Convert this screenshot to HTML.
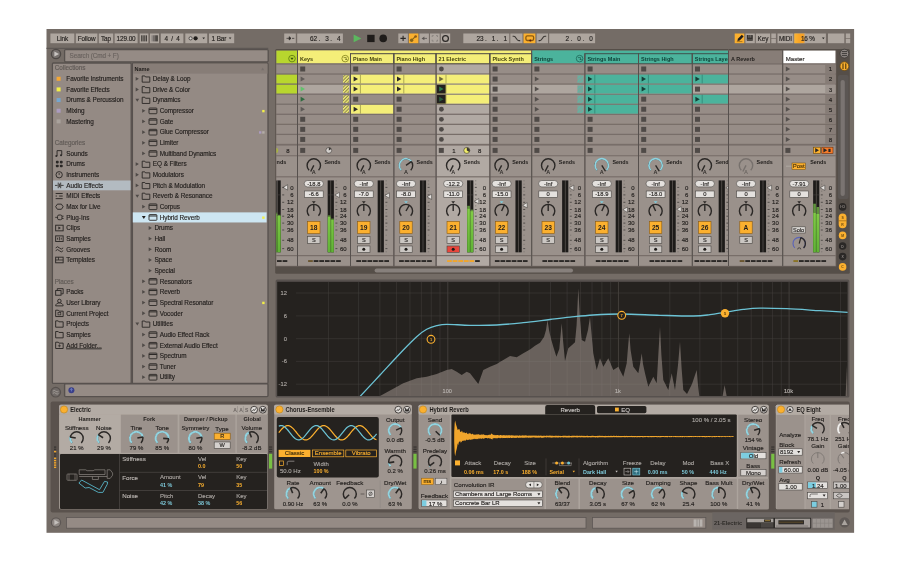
<!DOCTYPE html><html><head><meta charset="utf-8"><title>Live</title><style>html,body{margin:0;padding:0;background:#fff;overflow:hidden}svg{display:block;will-change:transform}text{font-family:'Liberation Sans', sans-serif;white-space:pre}</style></head><body><svg width="900" height="562" viewBox="0 0 900 562"><rect x="0" y="0" width="900" height="562" fill="#ffffff" />
<rect x="46.5" y="29" width="807.6" height="503.8" fill="#746c66" />
<rect x="50.4" y="33.5" width="23.9" height="9.7" fill="#aea69f" />
<text x="62.35" y="40.62" font-size="6.4" fill="#211e1c" text-anchor="middle" letter-spacing="-0.1" stroke="#211e1c" stroke-width="0.14" >Link</text>
<rect x="75.8" y="33.5" width="21.6" height="9.7" fill="#aea69f" />
<text x="86.6" y="40.62" font-size="6.4" fill="#211e1c" text-anchor="middle" letter-spacing="-0.1" stroke="#211e1c" stroke-width="0.14" >Follow</text>
<rect x="98.8" y="33.5" width="14.4" height="9.7" fill="#aea69f" />
<text x="106" y="40.62" font-size="6.4" fill="#211e1c" text-anchor="middle" letter-spacing="-0.1" stroke="#211e1c" stroke-width="0.14" >Tap</text>
<rect x="114.6" y="33.5" width="23" height="9.7" fill="#aea69f" />
<text x="126.1" y="40.62" font-size="6.4" fill="#211e1c" text-anchor="middle" letter-spacing="-0.1" stroke="#211e1c" stroke-width="0.14" >129.00</text>
<rect x="139.7" y="33.5" width="8.7" height="9.7" fill="#aea69f" />
<rect x="141.2" y="35.3" width="1.3" height="6.1" fill="#3b3734" />
<rect x="143.4" y="35.3" width="1.3" height="6.1" fill="#3b3734" />
<rect x="145.6" y="35.3" width="1.3" height="6.1" fill="#3b3734" />
<rect x="150" y="33.5" width="9" height="9.7" fill="#aea69f" />
<rect x="151.4" y="35.3" width="1.6" height="6.1" fill="#8d8783" />
<rect x="153" y="35.3" width="1.6" height="6.1" fill="#726c69" />
<rect x="154.6" y="35.3" width="1.6" height="6.1" fill="#595451" />
<rect x="156.2" y="35.3" width="1.6" height="6.1" fill="#3b3734" />
<rect x="160.8" y="33.5" width="22.6" height="9.7" fill="#aea69f" />
<text x="172.1" y="40.62" font-size="6.4" fill="#211e1c" text-anchor="middle" letter-spacing="-0.1" stroke="#211e1c" stroke-width="0.14" >4  /  4</text>
<rect x="185.3" y="33.5" width="21.9" height="9.7" fill="#aea69f" />
<circle cx="190.6" cy="38.35" r="1.6" fill="#d4d0cd" stroke="#2b2826" stroke-width="0.7" />
<circle cx="195.6" cy="38.35" r="2.1" fill="#1f1c1a" />
<path d="M202.4 37.5h2.6l-1.3 1.8z" fill="#2b2826" />
<rect x="209" y="33.5" width="25.2" height="9.7" fill="#aea69f" />
<text x="211.5" y="40.62" font-size="6.4" fill="#211e1c" letter-spacing="-0.1" stroke="#211e1c" stroke-width="0.14" >1 Bar</text>
<path d="M228.8 37.5h2.6l-1.3 1.8z" fill="#2b2826" />
<rect x="284.2" y="33.5" width="11.6" height="9.7" fill="#aea69f" />
<path d="M286.5 38.35h4.2M289.2 36.7l1.8 1.65l-1.8 1.65z" fill="#2b2826" stroke="#2b2826" stroke-width="0.7" />
<line x1="292" y1="38.35" x2="294.3" y2="38.35" stroke="#2b2826" stroke-width="0.7" />
<rect x="297.2" y="33.5" width="45.7" height="9.7" fill="#aea69f" />
<text x="340.5" y="40.62" font-size="6.4" fill="#211e1c" text-anchor="end" letter-spacing="-0.1" stroke="#211e1c" stroke-width="0.14" >62 .   3 .   4</text>
<path d="M353.6 34.6L361.4 38.4L353.6 42.3z" fill="#5cb85f" />
<rect x="367.2" y="34.8" width="7.4" height="7.3" fill="#1f1c1a" />
<circle cx="383.2" cy="38.4" r="3.8" fill="#1f1c1a" />
<rect x="398.3" y="33.5" width="9.6" height="9.7" fill="#aea69f" />
<path d="M400.4 38.4h5.4M403.1 35.7v5.4" fill="none" stroke="#2b2826" stroke-width="1.1" />
<rect x="408.8" y="33.5" width="9.6" height="9.7" fill="#fbb02f" />
<path d="M411.4 40.4l4.2-4" fill="none" stroke="#86641a" stroke-width="1.2" />
<circle cx="411.6" cy="40.3" r="1.7" fill="#86641a" />
<circle cx="415.6" cy="36.5" r="1.3" fill="#86641a" />
<circle cx="415.8" cy="36.3" r="0.6" fill="#a8401a" />
<rect x="419.4" y="33.5" width="9.5" height="9.7" fill="#aea69f" />
<path d="M423.6 38.4h3.4" fill="none" stroke="#5b5653" stroke-width="0.8" />
<path d="M421.6 38.4l2.8-1.9v3.8z" fill="#5b5653" />
<rect x="430" y="33.5" width="9.7" height="9.7" fill="#aea69f" />
<path d="M432.2 37v-1.4h1.5M436 35.6h1.5v1.4M437.5 39.7v1.4h-1.5M433.7 41.1h-1.5v-1.4" fill="none" stroke="#87817d" stroke-width="0.9" />
<rect x="440.8" y="33.5" width="9.4" height="9.7" fill="#aea69f" />
<circle cx="445.5" cy="38.4" r="2.9" fill="none" stroke="#2b2826" stroke-width="1.25" />
<rect x="463.3" y="33.5" width="46" height="9.7" fill="#aea69f" />
<text x="507" y="40.62" font-size="6.4" fill="#211e1c" text-anchor="end" letter-spacing="-0.1" stroke="#211e1c" stroke-width="0.14" >23 .   1 .   1</text>
<rect x="510.3" y="33.5" width="12.2" height="9.7" fill="#aea69f" />
<path d="M512.6 36.3h1.2c2.4 0 2.6 4.3 5 4.3h1.4" fill="none" stroke="#3a3633" stroke-width="1.1" />
<rect x="523.5" y="33.5" width="11.9" height="9.7" fill="#fbb02f" />
<rect x="525.9" y="35.9" width="7.7" height="4.6" fill="none" rx="1.4" stroke="#8a5a10" stroke-width="1.3" />
<circle cx="530.3" cy="40.6" r="1" fill="#5a1a0a" />
<rect x="536.6" y="33.5" width="11.4" height="9.7" fill="#aea69f" />
<path d="M538.6 40.6h1.2c2.4 0 2.6-4.3 5-4.3h1.4" fill="none" stroke="#3a3633" stroke-width="1.1" />
<rect x="549.2" y="33.5" width="45.9" height="9.7" fill="#aea69f" />
<text x="592.6" y="40.62" font-size="6.4" fill="#211e1c" text-anchor="end" letter-spacing="-0.1" stroke="#211e1c" stroke-width="0.14" >2 .   0 .   0</text>
<rect x="734.7" y="33.5" width="9.6" height="9.7" fill="#fbb02f" />
<path d="M737.4 40.9l0.5-2.2l3.9-3.9l1.8 1.8l-3.9 3.9z" fill="#1f1c1a" />
<line x1="736.8" y1="41.6" x2="742.4" y2="41.6" stroke="#8a5a10" stroke-width="0.7" />
<rect x="745.4" y="33.5" width="9.4" height="9.7" fill="#aea69f" />
<rect x="746.8" y="35" width="6" height="5.8" fill="#34302d" rx="0.6" />
<rect x="748.6" y="35" width="0.7" height="2.7" fill="#9a948f" />
<rect x="750.5" y="35" width="0.7" height="2.7" fill="#9a948f" />
<rect x="746.8" y="39" width="6" height="0.5" fill="#6f6965" />
<rect x="755.8" y="33.5" width="14.3" height="9.7" fill="#aea69f" />
<text x="762.95" y="40.62" font-size="6.4" fill="#211e1c" text-anchor="middle" letter-spacing="-0.1" stroke="#211e1c" stroke-width="0.14" >Key</text>
<rect x="771.3" y="33.5" width="4.6" height="4.5" fill="#aea69f" />
<rect x="771.3" y="38.7" width="4.6" height="4.5" fill="#aea69f" />
<rect x="777.5" y="33.5" width="15.9" height="9.7" fill="#aea69f" />
<text x="785.45" y="40.62" font-size="6.4" fill="#211e1c" text-anchor="middle" letter-spacing="-0.1" stroke="#211e1c" stroke-width="0.14" >MIDI</text>
<rect x="794.3" y="33.5" width="31.6" height="9.7" fill="#aea69f" />
<defs><linearGradient id="cpu" x1="0" x2="1" y1="0" y2="0"><stop offset="0" stop-color="#fbb533"/><stop offset="0.45" stop-color="#f9a526"/><stop offset="0.8" stop-color="#f7a024"/><stop offset="1" stop-color="#aea69f"/></linearGradient></defs>
<rect x="794.3" y="33.5" width="11.2" height="9.7" fill="url(#cpu)" />
<text x="801" y="40.62" font-size="6.4" fill="#211e1c" letter-spacing="-0.2" stroke="#211e1c" stroke-width="0.14" >16 %</text>
<path d="M822.0 37.5h2.6l-1.3 1.8z" fill="#2b2826" />
<rect x="828" y="33.5" width="16.3" height="9.7" fill="#aea69f" />
<rect x="845.8" y="33.5" width="4.4" height="4.5" fill="#aea69f" />
<rect x="845.8" y="38.7" width="4.4" height="4.5" fill="#aea69f" />
<line x1="46.5" y1="48.4" x2="268.2" y2="48.4" stroke="#5d5754" stroke-width="1.4" />
<circle cx="56" cy="54" r="4.6" fill="#77716e" stroke="#4d4845" stroke-width="1.3" />
<path d="M54.4 51.4L59.0 54.0L54.4 56.6z" fill="#c9c5c2" />
<rect x="64.6" y="49.6" width="203.6" height="12.2" fill="#958b85" rx="1" stroke="#57514e" stroke-width="1.3" />
<text x="69.6" y="58.37" font-size="6.4" fill="#6a635f" letter-spacing="-0.12" stroke="#6a635f" stroke-width="0.14" >Search (Cmd + F)</text>
<rect x="52.4" y="63" width="78.8" height="320.4" fill="#948a84" rx="1" stroke="#57514e" stroke-width="1.3" />
<rect x="132.4" y="63" width="135.6" height="320.4" fill="#948a84" rx="1" stroke="#57514e" stroke-width="1.3" />
<rect x="133" y="63.6" width="134.4" height="10" fill="#877d77" />
<text x="134.4" y="70.8" font-size="6.2" fill="#211e1c" font-weight="700" transform="translate(134.4 0) scale(0.9 1) translate(-134.4 0)" >Name</text>
<path d="M261.2 70.2l1.5-2.6l1.5 2.6z" fill="#77706c" />
<text x="54.8" y="70.47" font-size="6.4" fill="#5f5955" letter-spacing="-0.06" stroke="#5f5955" stroke-width="0.14" >Collections</text>
<rect x="56.6" y="76.76" width="4" height="4" fill="#f6a833" />
<text x="66.3" y="81.13" font-size="6.4" fill="#211e1c" letter-spacing="-0.06" stroke="#211e1c" stroke-width="0.14" >Favorite Instruments</text>
<rect x="56.6" y="87.41" width="4" height="4" fill="#f2ee48" />
<text x="66.3" y="91.78" font-size="6.4" fill="#211e1c" letter-spacing="-0.06" stroke="#211e1c" stroke-width="0.14" >Favorite Effects</text>
<rect x="56.6" y="98.06" width="4" height="4" fill="#74a6cf" />
<text x="66.3" y="102.44" font-size="6.4" fill="#211e1c" letter-spacing="-0.06" stroke="#211e1c" stroke-width="0.14" >Drums &amp; Percussion</text>
<rect x="56.6" y="108.72" width="4" height="4" fill="#ab9bc0" />
<text x="66.3" y="113.09" font-size="6.4" fill="#211e1c" letter-spacing="-0.06" stroke="#211e1c" stroke-width="0.14" >Mixing</text>
<rect x="56.6" y="119.38" width="4" height="4" fill="#a9a29c" />
<text x="66.3" y="123.75" font-size="6.4" fill="#211e1c" letter-spacing="-0.06" stroke="#211e1c" stroke-width="0.14" >Mastering</text>
<text x="54.8" y="145.06" font-size="6.4" fill="#5f5955" letter-spacing="-0.06" stroke="#5f5955" stroke-width="0.14" >Categories</text>
<text x="66.3" y="155.71" font-size="6.4" fill="#211e1c" letter-spacing="-0.06" stroke="#211e1c" stroke-width="0.14" >Sounds</text>
<g transform="translate(59.4 153.44) scale(1.17) translate(-59.4 -153.44)">
<path d="M57.4 155.64v-4.6h4v3.8" fill="none" stroke="#2b2826" stroke-width="0.8" />
<circle cx="56.8" cy="155.64" r="0.9" fill="#2b2826" />
<circle cx="60.8" cy="154.94" r="0.9" fill="#2b2826" />
</g>
<text x="66.3" y="166.37" font-size="6.4" fill="#211e1c" letter-spacing="-0.06" stroke="#211e1c" stroke-width="0.14" >Drums</text>
<g transform="translate(59.4 164.09) scale(1.17) translate(-59.4 -164.09)">
<rect x="56.4" y="161.29" width="2.4" height="2.2" fill="#2b2826" rx="0.7" />
<rect x="56.4" y="164.69" width="2.4" height="2.2" fill="#2b2826" rx="0.7" />
<rect x="59.8" y="161.29" width="2.4" height="2.2" fill="#2b2826" rx="0.7" />
<rect x="59.8" y="164.69" width="2.4" height="2.2" fill="#2b2826" rx="0.7" />
</g>
<text x="66.3" y="177.02" font-size="6.4" fill="#211e1c" letter-spacing="-0.06" stroke="#211e1c" stroke-width="0.14" >Instruments</text>
<g transform="translate(59.4 174.75) scale(1.17) translate(-59.4 -174.75)">
<circle cx="59.2" cy="174.75" r="2.7" fill="none" stroke="#2b2826" stroke-width="0.8" />
<path d="M59.2 173.15v1.8" fill="none" stroke="#2b2826" stroke-width="0.7" />
</g>
<rect x="53" y="180.5" width="77.6" height="9.8" fill="#b3bbc1" />
<text x="66.3" y="187.68" font-size="6.4" fill="#211e1c" letter-spacing="-0.06" stroke="#211e1c" stroke-width="0.14" >Audio Effects</text>
<g transform="translate(59.4 185.41) scale(1.17) translate(-59.4 -185.41)">
<path d="M55.6 185.41h2.2M60.8 185.41h2.2M58.4 183v4.8M59.5 183.91v3M60.5 183v4.8" fill="none" stroke="#2b2826" stroke-width="0.7" />
</g>
<text x="66.3" y="198.33" font-size="6.4" fill="#211e1c" letter-spacing="-0.06" stroke="#211e1c" stroke-width="0.14" >MIDI Effects</text>
<g transform="translate(59.4 196.06) scale(1.17) translate(-59.4 -196.06)">
<path d="M56.2 193.86h6M56.2 196.06h6M56.2 198.26h6" fill="none" stroke="#2b2826" stroke-width="0.8" />
<rect x="57.2" y="194.66" width="2" height="2.2" fill="#948a84" />
</g>
<text x="66.3" y="208.99" font-size="6.4" fill="#211e1c" letter-spacing="-0.06" stroke="#211e1c" stroke-width="0.14" >Max for Live</text>
<g transform="translate(59.4 206.71) scale(1.17) translate(-59.4 -206.71)">
<path d="M56.2 206.71l1.5-2.2h3.4l1.5 2.2l-1.5 2.2h-3.4z" fill="none" stroke="#2b2826" stroke-width="0.8" />
</g>
<text x="66.3" y="219.64" font-size="6.4" fill="#211e1c" letter-spacing="-0.06" stroke="#211e1c" stroke-width="0.14" >Plug-Ins</text>
<g transform="translate(59.4 217.37) scale(1.17) translate(-59.4 -217.37)">
<rect x="57.8" y="215.37" width="3.8" height="4" fill="none" rx="1.2" stroke="#2b2826" stroke-width="0.8" />
<path d="M55.8 217.37h2M61.6 216.37h1.4M61.6 218.37h1.4" fill="none" stroke="#2b2826" stroke-width="0.7" />
</g>
<text x="66.3" y="230.3" font-size="6.4" fill="#211e1c" letter-spacing="-0.06" stroke="#211e1c" stroke-width="0.14" >Clips</text>
<g transform="translate(59.4 228.02) scale(1.17) translate(-59.4 -228.02)">
<rect x="56.2" y="225.62" width="6.4" height="4.8" fill="none" stroke="#2b2826" stroke-width="0.8" />
<path d="M58.5 226.72l2.2 1.3l-2.2 1.3z" fill="#2b2826" />
</g>
<text x="66.3" y="240.95" font-size="6.4" fill="#211e1c" letter-spacing="-0.06" stroke="#211e1c" stroke-width="0.14" >Samples</text>
<g transform="translate(59.4 238.68) scale(1.17) translate(-59.4 -238.68)">
<rect x="56.2" y="236.28" width="6.4" height="4.8" fill="none" stroke="#2b2826" stroke-width="0.8" />
<path d="M57.8 237.88v1.6M59.4 237.18v3M61 237.88v1.6" fill="none" stroke="#2b2826" stroke-width="0.7" />
</g>
<text x="66.3" y="251.61" font-size="6.4" fill="#211e1c" letter-spacing="-0.06" stroke="#211e1c" stroke-width="0.14" >Grooves</text>
<g transform="translate(59.4 249.33) scale(1.17) translate(-59.4 -249.33)">
<path d="M56.2 248.13q1.6-2 3.2 0t3.2 0" fill="none" stroke="#2b2826" stroke-width="0.8" />
<path d="M56.2 250.53q1.6-2 3.2 0t3.2 0" fill="none" stroke="#2b2826" stroke-width="0.8" />
</g>
<text x="66.3" y="262.26" font-size="6.4" fill="#211e1c" letter-spacing="-0.06" stroke="#211e1c" stroke-width="0.14" >Templates</text>
<g transform="translate(59.4 259.99) scale(1.17) translate(-59.4 -259.99)">
<rect x="56.2" y="257.59" width="6.4" height="4.8" fill="none" stroke="#2b2826" stroke-width="0.8" />
<path d="M56.2 259.99h6.4M58.6 257.59v2.4" fill="none" stroke="#2b2826" stroke-width="0.7" />
</g>
<text x="54.8" y="283.57" font-size="6.4" fill="#5f5955" letter-spacing="-0.06" stroke="#5f5955" stroke-width="0.14" >Places</text>
<text x="66.3" y="294.23" font-size="6.4" fill="#211e1c" letter-spacing="-0.06" stroke="#211e1c" stroke-width="0.14" >Packs</text>
<g transform="translate(59.4 291.95) scale(1.17) translate(-59.4 -291.95)">
<rect x="56.2" y="290.75" width="4.6" height="4" fill="none" stroke="#2b2826" stroke-width="0.8" />
<path d="M57.6 290.75v-1.6h5v4.4h-1.6" fill="none" stroke="#2b2826" stroke-width="0.8" />
</g>
<text x="66.3" y="304.88" font-size="6.4" fill="#211e1c" letter-spacing="-0.06" stroke="#211e1c" stroke-width="0.14" >User Library</text>
<g transform="translate(59.4 302.61) scale(1.17) translate(-59.4 -302.61)">
<circle cx="59.4" cy="301.21" r="1.5" fill="none" stroke="#2b2826" stroke-width="0.8" />
<path d="M56.2 305.41c0-3.4 6.4-3.4 6.4 0z" fill="none" stroke="#2b2826" stroke-width="0.8" />
</g>
<text x="66.3" y="315.54" font-size="6.4" fill="#211e1c" letter-spacing="-0.06" stroke="#211e1c" stroke-width="0.14" >Current Project</text>
<g transform="translate(59.4 313.26) scale(1.17) translate(-59.4 -313.26)">
<path d="M56.2 310.66h2.2l0.6 0.8h3.6v4.6h-6.4z" fill="none" stroke="#2b2826" stroke-width="0.8" />
<rect x="58.2" y="312.66" width="2.4" height="2" fill="none" stroke="#2b2826" stroke-width="0.6" />
</g>
<text x="66.3" y="326.19" font-size="6.4" fill="#211e1c" letter-spacing="-0.06" stroke="#211e1c" stroke-width="0.14" >Projects</text>
<g transform="translate(59.4 323.92) scale(1.17) translate(-59.4 -323.92)">
<path d="M56.2 321.32h2.2l0.6 0.8h3.6v4.6h-6.4z" fill="none" stroke="#2b2826" stroke-width="0.8" />
</g>
<text x="66.3" y="336.85" font-size="6.4" fill="#211e1c" letter-spacing="-0.06" stroke="#211e1c" stroke-width="0.14" >Samples</text>
<g transform="translate(59.4 334.57) scale(1.17) translate(-59.4 -334.57)">
<path d="M56.2 331.97h2.2l0.6 0.8h3.6v4.6h-6.4z" fill="none" stroke="#2b2826" stroke-width="0.8" />
</g>
<text x="66.3" y="347.5" font-size="6.4" fill="#211e1c" letter-spacing="-0.06" stroke="#211e1c" stroke-width="0.14"  text-decoration="underline">Add Folder...</text>
<g transform="translate(59.4 345.23) scale(1.17) translate(-59.4 -345.23)">
<path d="M56.2 342.63h2.2l0.6 0.8h3.6v4.6h-6.4z" fill="none" stroke="#2b2826" stroke-width="0.8" />
<path d="M59.4 344.43v2.6M58.1 345.73h2.6" fill="none" stroke="#2b2826" stroke-width="0.6" />
</g>
<path d="M135.7 76.95l3.2 1.9l-3.2 1.9z" fill="#4f4a47" />
<path d="M142.2 75.95h2.6l0.7 1h4.3v5.2h-7.6z" fill="none" stroke="#2b2826" stroke-width="0.9" />
<text x="152.8" y="81.13" font-size="6.4" fill="#211e1c" letter-spacing="-0.06" stroke="#211e1c" stroke-width="0.14" >Delay &amp; Loop</text>
<path d="M135.7 87.61l3.2 1.9l-3.2 1.9z" fill="#4f4a47" />
<path d="M142.2 86.61h2.6l0.7 1h4.3v5.2h-7.6z" fill="none" stroke="#2b2826" stroke-width="0.9" />
<text x="152.8" y="91.78" font-size="6.4" fill="#211e1c" letter-spacing="-0.06" stroke="#211e1c" stroke-width="0.14" >Drive &amp; Color</text>
<path d="M135.4 98.76h3.8l-1.9 3.1z" fill="#4f4a47" />
<path d="M142.2 97.26h2.6l0.7 1h4.3v5.2h-7.6z" fill="none" stroke="#2b2826" stroke-width="0.9" />
<text x="152.8" y="102.44" font-size="6.4" fill="#211e1c" letter-spacing="-0.06" stroke="#211e1c" stroke-width="0.14" >Dynamics</text>
<path d="M142.2 108.92l3.2 1.9l-3.2 1.9z" fill="#4f4a47" />
<rect x="149" y="108.02" width="7.9" height="5.7" fill="none" rx="0.7" stroke="#2b2826" stroke-width="0.9" />
<line x1="149" y1="109.42" x2="156.9" y2="109.42" stroke="#2b2826" stroke-width="1" />
<text x="159.7" y="113.09" font-size="6.4" fill="#211e1c" letter-spacing="-0.06" stroke="#211e1c" stroke-width="0.14" >Compressor</text>
<rect x="262.2" y="109.92" width="2.4" height="2.4" fill="#f2ee48" />
<path d="M142.2 119.57l3.2 1.9l-3.2 1.9z" fill="#4f4a47" />
<rect x="149" y="118.67" width="7.9" height="5.7" fill="none" rx="0.7" stroke="#2b2826" stroke-width="0.9" />
<line x1="149" y1="120.07" x2="156.9" y2="120.07" stroke="#2b2826" stroke-width="1" />
<text x="159.7" y="123.75" font-size="6.4" fill="#211e1c" letter-spacing="-0.06" stroke="#211e1c" stroke-width="0.14" >Gate</text>
<path d="M142.2 130.23l3.2 1.9l-3.2 1.9z" fill="#4f4a47" />
<rect x="149" y="129.33" width="7.9" height="5.7" fill="none" rx="0.7" stroke="#2b2826" stroke-width="0.9" />
<line x1="149" y1="130.73" x2="156.9" y2="130.73" stroke="#2b2826" stroke-width="1" />
<text x="159.7" y="134.4" font-size="6.4" fill="#211e1c" letter-spacing="-0.06" stroke="#211e1c" stroke-width="0.14" >Glue Compressor</text>
<rect x="262.2" y="131.23" width="2.4" height="2.4" fill="#b4ada7" />
<rect x="259" y="131.23" width="2.4" height="2.4" fill="#ab9bc0" />
<path d="M142.2 140.88l3.2 1.9l-3.2 1.9z" fill="#4f4a47" />
<rect x="149" y="139.98" width="7.9" height="5.7" fill="none" rx="0.7" stroke="#2b2826" stroke-width="0.9" />
<line x1="149" y1="141.38" x2="156.9" y2="141.38" stroke="#2b2826" stroke-width="1" />
<text x="159.7" y="145.06" font-size="6.4" fill="#211e1c" letter-spacing="-0.06" stroke="#211e1c" stroke-width="0.14" >Limiter</text>
<path d="M142.2 151.54l3.2 1.9l-3.2 1.9z" fill="#4f4a47" />
<rect x="149" y="150.64" width="7.9" height="5.7" fill="none" rx="0.7" stroke="#2b2826" stroke-width="0.9" />
<line x1="149" y1="152.04" x2="156.9" y2="152.04" stroke="#2b2826" stroke-width="1" />
<text x="159.7" y="155.71" font-size="6.4" fill="#211e1c" letter-spacing="-0.06" stroke="#211e1c" stroke-width="0.14" >Multiband Dynamics</text>
<path d="M135.7 162.19l3.2 1.9l-3.2 1.9z" fill="#4f4a47" />
<path d="M142.2 161.19h2.6l0.7 1h4.3v5.2h-7.6z" fill="none" stroke="#2b2826" stroke-width="0.9" />
<text x="152.8" y="166.37" font-size="6.4" fill="#211e1c" letter-spacing="-0.06" stroke="#211e1c" stroke-width="0.14" >EQ &amp; Filters</text>
<path d="M135.7 172.85l3.2 1.9l-3.2 1.9z" fill="#4f4a47" />
<path d="M142.2 171.85h2.6l0.7 1h4.3v5.2h-7.6z" fill="none" stroke="#2b2826" stroke-width="0.9" />
<text x="152.8" y="177.02" font-size="6.4" fill="#211e1c" letter-spacing="-0.06" stroke="#211e1c" stroke-width="0.14" >Modulators</text>
<path d="M135.7 183.5l3.2 1.9l-3.2 1.9z" fill="#4f4a47" />
<path d="M142.2 182.5h2.6l0.7 1h4.3v5.2h-7.6z" fill="none" stroke="#2b2826" stroke-width="0.9" />
<text x="152.8" y="187.68" font-size="6.4" fill="#211e1c" letter-spacing="-0.06" stroke="#211e1c" stroke-width="0.14" >Pitch &amp; Modulation</text>
<path d="M135.4 194.66h3.8l-1.9 3.1z" fill="#4f4a47" />
<path d="M142.2 193.16h2.6l0.7 1h4.3v5.2h-7.6z" fill="none" stroke="#2b2826" stroke-width="0.9" />
<text x="152.8" y="198.33" font-size="6.4" fill="#211e1c" letter-spacing="-0.06" stroke="#211e1c" stroke-width="0.14" >Reverb &amp; Resonance</text>
<path d="M142.2 204.81l3.2 1.9l-3.2 1.9z" fill="#4f4a47" />
<rect x="149" y="203.91" width="7.9" height="5.7" fill="none" rx="0.7" stroke="#2b2826" stroke-width="0.9" />
<line x1="149" y1="205.31" x2="156.9" y2="205.31" stroke="#2b2826" stroke-width="1" />
<text x="159.7" y="208.99" font-size="6.4" fill="#211e1c" letter-spacing="-0.06" stroke="#211e1c" stroke-width="0.14" >Corpus</text>
<rect x="132.8" y="212.37" width="133.8" height="10.1" fill="#cde6f2" />
<path d="M141.9 215.97h3.8l-1.9 3.1z" fill="#1f1c1a" />
<rect x="149" y="214.57" width="7.9" height="5.7" fill="none" rx="0.7" stroke="#2b2826" stroke-width="0.9" />
<line x1="149" y1="215.97" x2="156.9" y2="215.97" stroke="#2b2826" stroke-width="1" />
<text x="159.7" y="219.64" font-size="6.4" fill="#211e1c" letter-spacing="-0.06" stroke="#211e1c" stroke-width="0.14" >Hybrid Reverb</text>
<rect x="262.2" y="216.47" width="2.4" height="2.4" fill="#f2ee48" />
<path d="M148.7 226.12l3.2 1.9l-3.2 1.9z" fill="#4f4a47" />
<text x="154.4" y="230.3" font-size="6.4" fill="#211e1c" letter-spacing="-0.06" stroke="#211e1c" stroke-width="0.14" >Drums</text>
<path d="M148.7 236.78l3.2 1.9l-3.2 1.9z" fill="#4f4a47" />
<text x="154.4" y="240.95" font-size="6.4" fill="#211e1c" letter-spacing="-0.06" stroke="#211e1c" stroke-width="0.14" >Hall</text>
<path d="M148.7 247.43l3.2 1.9l-3.2 1.9z" fill="#4f4a47" />
<text x="154.4" y="251.61" font-size="6.4" fill="#211e1c" letter-spacing="-0.06" stroke="#211e1c" stroke-width="0.14" >Room</text>
<path d="M148.7 258.09l3.2 1.9l-3.2 1.9z" fill="#4f4a47" />
<text x="154.4" y="262.26" font-size="6.4" fill="#211e1c" letter-spacing="-0.06" stroke="#211e1c" stroke-width="0.14" >Space</text>
<path d="M148.7 268.75l3.2 1.9l-3.2 1.9z" fill="#4f4a47" />
<text x="154.4" y="272.92" font-size="6.4" fill="#211e1c" letter-spacing="-0.06" stroke="#211e1c" stroke-width="0.14" >Special</text>
<path d="M142.2 279.4l3.2 1.9l-3.2 1.9z" fill="#4f4a47" />
<rect x="149" y="278.5" width="7.9" height="5.7" fill="none" rx="0.7" stroke="#2b2826" stroke-width="0.9" />
<line x1="149" y1="279.9" x2="156.9" y2="279.9" stroke="#2b2826" stroke-width="1" />
<text x="159.7" y="283.57" font-size="6.4" fill="#211e1c" letter-spacing="-0.06" stroke="#211e1c" stroke-width="0.14" >Resonators</text>
<path d="M142.2 290.06l3.2 1.9l-3.2 1.9z" fill="#4f4a47" />
<rect x="149" y="289.15" width="7.9" height="5.7" fill="none" rx="0.7" stroke="#2b2826" stroke-width="0.9" />
<line x1="149" y1="290.56" x2="156.9" y2="290.56" stroke="#2b2826" stroke-width="1" />
<text x="159.7" y="294.23" font-size="6.4" fill="#211e1c" letter-spacing="-0.06" stroke="#211e1c" stroke-width="0.14" >Reverb</text>
<path d="M142.2 300.71l3.2 1.9l-3.2 1.9z" fill="#4f4a47" />
<rect x="149" y="299.81" width="7.9" height="5.7" fill="none" rx="0.7" stroke="#2b2826" stroke-width="0.9" />
<line x1="149" y1="301.21" x2="156.9" y2="301.21" stroke="#2b2826" stroke-width="1" />
<text x="159.7" y="304.88" font-size="6.4" fill="#211e1c" letter-spacing="-0.06" stroke="#211e1c" stroke-width="0.14" >Spectral Resonator</text>
<rect x="262.2" y="301.71" width="2.4" height="2.4" fill="#f2ee48" />
<path d="M142.2 311.37l3.2 1.9l-3.2 1.9z" fill="#4f4a47" />
<rect x="149" y="310.46" width="7.9" height="5.7" fill="none" rx="0.7" stroke="#2b2826" stroke-width="0.9" />
<line x1="149" y1="311.87" x2="156.9" y2="311.87" stroke="#2b2826" stroke-width="1" />
<text x="159.7" y="315.54" font-size="6.4" fill="#211e1c" letter-spacing="-0.06" stroke="#211e1c" stroke-width="0.14" >Vocoder</text>
<path d="M135.4 322.52h3.8l-1.9 3.1z" fill="#4f4a47" />
<path d="M142.2 321.02h2.6l0.7 1h4.3v5.2h-7.6z" fill="none" stroke="#2b2826" stroke-width="0.9" />
<text x="152.8" y="326.19" font-size="6.4" fill="#211e1c" letter-spacing="-0.06" stroke="#211e1c" stroke-width="0.14" >Utilities</text>
<path d="M142.2 332.68l3.2 1.9l-3.2 1.9z" fill="#4f4a47" />
<rect x="149" y="331.77" width="7.9" height="5.7" fill="none" rx="0.7" stroke="#2b2826" stroke-width="0.9" />
<line x1="149" y1="333.18" x2="156.9" y2="333.18" stroke="#2b2826" stroke-width="1" />
<text x="159.7" y="336.85" font-size="6.4" fill="#211e1c" letter-spacing="-0.06" stroke="#211e1c" stroke-width="0.14" >Audio Effect Rack</text>
<path d="M142.2 343.33l3.2 1.9l-3.2 1.9z" fill="#4f4a47" />
<rect x="149" y="342.43" width="7.9" height="5.7" fill="none" rx="0.7" stroke="#2b2826" stroke-width="0.9" />
<line x1="149" y1="343.83" x2="156.9" y2="343.83" stroke="#2b2826" stroke-width="1" />
<text x="159.7" y="347.5" font-size="6.4" fill="#211e1c" letter-spacing="-0.06" stroke="#211e1c" stroke-width="0.14" >External Audio Effect</text>
<path d="M142.2 353.99l3.2 1.9l-3.2 1.9z" fill="#4f4a47" />
<rect x="149" y="353.08" width="7.9" height="5.7" fill="none" rx="0.7" stroke="#2b2826" stroke-width="0.9" />
<line x1="149" y1="354.49" x2="156.9" y2="354.49" stroke="#2b2826" stroke-width="1" />
<text x="159.7" y="358.16" font-size="6.4" fill="#211e1c" letter-spacing="-0.06" stroke="#211e1c" stroke-width="0.14" >Spectrum</text>
<path d="M142.2 364.64l3.2 1.9l-3.2 1.9z" fill="#4f4a47" />
<rect x="149" y="363.74" width="7.9" height="5.7" fill="none" rx="0.7" stroke="#2b2826" stroke-width="0.9" />
<line x1="149" y1="365.14" x2="156.9" y2="365.14" stroke="#2b2826" stroke-width="1" />
<text x="159.7" y="368.81" font-size="6.4" fill="#211e1c" letter-spacing="-0.06" stroke="#211e1c" stroke-width="0.14" >Tuner</text>
<path d="M142.2 375.3l3.2 1.9l-3.2 1.9z" fill="#4f4a47" />
<rect x="149" y="374.39" width="7.9" height="5.7" fill="none" rx="0.7" stroke="#2b2826" stroke-width="0.9" />
<line x1="149" y1="375.8" x2="156.9" y2="375.8" stroke="#2b2826" stroke-width="1" />
<text x="159.7" y="379.47" font-size="6.4" fill="#211e1c" letter-spacing="-0.06" stroke="#211e1c" stroke-width="0.14" >Utility</text>
<circle cx="55.7" cy="392.2" r="4.8" fill="#706a67" stroke="#57514e" stroke-width="1.2" />
<path d="M52.9 391.2q1.4-1.6 2.8 0t2.8 0M52.9 393.4q1.4-1.6 2.8 0t2.8 0" fill="none" stroke="#aaa49f" stroke-width="0.8" />
<rect x="64.6" y="383.8" width="203.4" height="12.8" fill="#958b85" rx="1" stroke="#57514e" stroke-width="1.4" />
<circle cx="71.4" cy="390.2" r="3" fill="#3a3f8a" />
<path d="M71.4 388.8v2.6M70.2 389.6l1.2-1l1.2 1" fill="none" stroke="#8aa3e0" stroke-width="0.6" />
<rect x="275.2" y="48.9" width="574.6" height="224.9" fill="#554e48" rx="1.5" />
<rect x="275.8" y="50.5" width="560.4" height="215.9" fill="#786e69" />
<rect x="298" y="50.6" width="233.2" height="3.4" fill="#f4ee78" />
<rect x="532.2" y="50.6" width="195.8" height="3.4" fill="#4bb39c" />
<rect x="276.4" y="50.6" width="20.6" height="12.6" fill="#b8d62e" />
<circle cx="292" cy="58.6" r="3.3" fill="none" stroke="#5f7c12" stroke-width="0.85" />
<path d="M290.3 57.8h3.4l-1.7 2.3z" fill="#35500a" />
<rect x="276.4" y="64.6" width="20.6" height="8.8" fill="#978d87" />
<rect x="276.4" y="74.66" width="20.6" height="8.8" fill="#b8d62e" />
<rect x="276.4" y="84.72" width="20.6" height="8.8" fill="#b8d62e" />
<rect x="276.4" y="94.78" width="20.6" height="8.8" fill="#978d87" />
<rect x="276.4" y="104.84" width="20.6" height="8.8" fill="#978d87" />
<rect x="276.4" y="114.9" width="20.6" height="8.8" fill="#978d87" />
<rect x="276.4" y="124.96" width="20.6" height="8.8" fill="#978d87" />
<rect x="276.4" y="135.02" width="20.6" height="8.8" fill="#978d87" />
<rect x="298" y="50.6" width="52" height="12.6" fill="#f4ee78" />
<g clip-path="url(#cc1)"><text x="300" y="61.07" font-size="6.1" fill="#45430f" font-weight="700" transform="translate(300 0) scale(0.9 1) translate(-300 0)" >Keys</text></g>
<defs><clipPath id="cc1"><rect x="298" y="50" width="52" height="14"/></clipPath></defs>
<circle cx="345.2" cy="58.6" r="3.3" fill="none" stroke="#86861f" stroke-width="0.85" />
<path d="M343.6 57.6h2.6v2.4M346.2 60l-1-1M346.2 60l1-1" fill="none" stroke="#6a6a18" stroke-width="0.7" />
<rect x="298" y="64.6" width="52" height="8.8" fill="#978d87" />
<rect x="300.2" y="66.5" width="5" height="5" fill="#4f4a47" />
<rect x="298" y="74.66" width="52" height="8.8" fill="#978d87" />
<path d="M300.6 76.56l4.4 2.5l-4.4 2.5z" fill="#5f5a57" />
<rect x="343" y="75.26" width="6" height="7.6" fill="url(#h1)" />
<rect x="298" y="84.72" width="52" height="8.8" fill="#aea69f" />
<path d="M300.6 86.62l4.4 2.5l-4.4 2.5z" fill="#62c26b" />
<rect x="343" y="85.32" width="6" height="7.6" fill="url(#h1)" />
<rect x="298" y="94.78" width="52" height="8.8" fill="#978d87" />
<path d="M300.6 96.68l4.4 2.5l-4.4 2.5z" fill="#2f6a3f" />
<rect x="343" y="95.38" width="6" height="7.6" fill="url(#h1)" />
<rect x="298" y="104.84" width="52" height="8.8" fill="#978d87" />
<path d="M300.6 106.74l4.4 2.5l-4.4 2.5z" fill="#5f5a57" />
<rect x="343" y="105.44" width="6" height="7.6" fill="url(#h1)" />
<rect x="298" y="114.9" width="52" height="8.8" fill="#978d87" />
<rect x="300.2" y="116.8" width="5" height="5" fill="#4f4a47" />
<rect x="298" y="124.96" width="52" height="8.8" fill="#978d87" />
<rect x="300.2" y="126.86" width="5" height="5" fill="#4f4a47" />
<rect x="298" y="135.02" width="52" height="8.8" fill="#978d87" />
<rect x="300.2" y="136.92" width="5" height="5" fill="#4f4a47" />
<rect x="350" y="53.2" width="44.4" height="10.6" fill="#4a4643" />
<rect x="351" y="54.2" width="42.4" height="9" fill="#f4ee78" />
<g clip-path="url(#cc2)"><text x="353" y="61.07" font-size="6.1" fill="#45430f" font-weight="700" transform="translate(353 0) scale(0.9 1) translate(-353 0)" >Piano Main</text></g>
<defs><clipPath id="cc2"><rect x="351" y="50" width="42.4" height="14"/></clipPath></defs>
<rect x="351" y="64.6" width="42.4" height="8.8" fill="#978d87" />
<rect x="353.2" y="66.5" width="5" height="5" fill="#4f4a47" />
<rect x="351" y="74.66" width="42.4" height="8.8" fill="#978d87" />
<rect x="351" y="74.66" width="42.4" height="8.8" fill="#f4ee78" />
<path d="M353.6 76.56l4.4 2.5l-4.4 2.5z" fill="#2b2826" />
<line x1="360.4" y1="74.66" x2="360.4" y2="83.46" stroke="#8f8d45" stroke-width="0.7" />
<rect x="351" y="84.72" width="42.4" height="8.8" fill="#aea69f" />
<rect x="351" y="84.72" width="42.4" height="8.8" fill="#f4ee78" />
<path d="M353.6 86.62l4.4 2.5l-4.4 2.5z" fill="#2b2826" />
<line x1="360.4" y1="84.72" x2="360.4" y2="93.52" stroke="#8f8d45" stroke-width="0.7" />
<rect x="351" y="94.78" width="42.4" height="8.8" fill="#978d87" />
<rect x="353.2" y="96.68" width="5" height="5" fill="#4f4a47" />
<rect x="351" y="104.84" width="42.4" height="8.8" fill="#978d87" />
<rect x="351" y="104.84" width="42.4" height="8.8" fill="#f4ee78" />
<path d="M353.6 106.74l4.4 2.5l-4.4 2.5z" fill="#2b2826" />
<line x1="360.4" y1="104.84" x2="360.4" y2="113.64" stroke="#8f8d45" stroke-width="0.7" />
<rect x="351" y="114.9" width="42.4" height="8.8" fill="#978d87" />
<rect x="353.2" y="116.8" width="5" height="5" fill="#4f4a47" />
<rect x="351" y="124.96" width="42.4" height="8.8" fill="#978d87" />
<rect x="353.2" y="126.86" width="5" height="5" fill="#4f4a47" />
<rect x="351" y="135.02" width="42.4" height="8.8" fill="#978d87" />
<rect x="353.2" y="136.92" width="5" height="5" fill="#4f4a47" />
<rect x="393.4" y="53.2" width="43.2" height="10.6" fill="#4a4643" />
<rect x="394.4" y="54.2" width="41.2" height="9" fill="#f4ee78" />
<g clip-path="url(#cc3)"><text x="396.4" y="61.07" font-size="6.1" fill="#45430f" font-weight="700" transform="translate(396.4 0) scale(0.9 1) translate(-396.4 0)" >Piano High</text></g>
<defs><clipPath id="cc3"><rect x="394.4" y="50" width="41.2" height="14"/></clipPath></defs>
<rect x="394.4" y="64.6" width="41.2" height="8.8" fill="#978d87" />
<rect x="396.6" y="66.5" width="5" height="5" fill="#4f4a47" />
<rect x="394.4" y="74.66" width="41.2" height="8.8" fill="#978d87" />
<rect x="394.4" y="74.66" width="41.2" height="8.8" fill="#f4ee78" />
<path d="M397 76.56l4.4 2.5l-4.4 2.5z" fill="#2b2826" />
<line x1="403.8" y1="74.66" x2="403.8" y2="83.46" stroke="#8f8d45" stroke-width="0.7" />
<rect x="394.4" y="84.72" width="41.2" height="8.8" fill="#aea69f" />
<rect x="394.4" y="84.72" width="41.2" height="8.8" fill="#f4ee78" />
<path d="M397 86.62l4.4 2.5l-4.4 2.5z" fill="#2b2826" />
<line x1="403.8" y1="84.72" x2="403.8" y2="93.52" stroke="#8f8d45" stroke-width="0.7" />
<rect x="394.4" y="94.78" width="41.2" height="8.8" fill="#978d87" />
<rect x="396.6" y="96.68" width="5" height="5" fill="#4f4a47" />
<rect x="394.4" y="104.84" width="41.2" height="8.8" fill="#978d87" />
<rect x="396.6" y="106.74" width="5" height="5" fill="#4f4a47" />
<rect x="394.4" y="114.9" width="41.2" height="8.8" fill="#978d87" />
<rect x="396.6" y="116.8" width="5" height="5" fill="#4f4a47" />
<rect x="394.4" y="124.96" width="41.2" height="8.8" fill="#978d87" />
<rect x="396.6" y="126.86" width="5" height="5" fill="#4f4a47" />
<rect x="394.4" y="135.02" width="41.2" height="8.8" fill="#978d87" />
<rect x="396.6" y="136.92" width="5" height="5" fill="#4f4a47" />
<rect x="435.6" y="53.2" width="54.8" height="10.6" fill="#4a4643" />
<rect x="436.6" y="54.2" width="52.8" height="9" fill="#f4ee78" />
<g clip-path="url(#cc4)"><text x="438.6" y="61.07" font-size="6.1" fill="#45430f" font-weight="700" transform="translate(438.6 0) scale(0.9 1) translate(-438.6 0)" >21 Electric</text></g>
<defs><clipPath id="cc4"><rect x="436.6" y="50" width="52.8" height="14"/></clipPath></defs>
<rect x="436.6" y="64.6" width="52.8" height="8.8" fill="#b1a9a3" />
<circle cx="441.4" cy="69" r="2.4" fill="#4f4a47" />
<rect x="436.6" y="74.66" width="52.8" height="8.8" fill="#b1a9a3" />
<rect x="436.6" y="74.66" width="52.8" height="8.8" fill="#f4ee78" />
<path d="M439.2 76.56l4.4 2.5l-4.4 2.5z" fill="#6f6a3c" />
<line x1="446" y1="74.66" x2="446" y2="83.46" stroke="#8f8d45" stroke-width="0.7" />
<rect x="436.6" y="84.72" width="52.8" height="8.8" fill="#c6c0ba" />
<rect x="436.6" y="84.72" width="52.8" height="8.8" fill="#f4ee78" />
<rect x="436.6" y="84.72" width="9.2" height="8.8" fill="#23201e" />
<path d="M439.2 86.62l4.4 2.5l-4.4 2.5z" fill="#2f7a4a" />
<line x1="446" y1="84.72" x2="446" y2="93.52" stroke="#8f8d45" stroke-width="0.7" />
<rect x="436.6" y="94.78" width="52.8" height="8.8" fill="#b1a9a3" />
<rect x="436.6" y="94.78" width="52.8" height="8.8" fill="#f4ee78" />
<rect x="436.6" y="94.78" width="9.2" height="8.8" fill="#23201e" />
<path d="M439.2 96.68l4.4 2.5l-4.4 2.5z" fill="#2a5c3c" />
<line x1="446" y1="94.78" x2="446" y2="103.58" stroke="#8f8d45" stroke-width="0.7" />
<rect x="436.6" y="104.84" width="52.8" height="8.8" fill="#b1a9a3" />
<circle cx="441.4" cy="109.24" r="2.4" fill="#4f4a47" />
<rect x="436.6" y="114.9" width="52.8" height="8.8" fill="#b1a9a3" />
<circle cx="441.4" cy="119.3" r="2.4" fill="#4f4a47" />
<rect x="436.6" y="124.96" width="52.8" height="8.8" fill="#b1a9a3" />
<circle cx="441.4" cy="129.36" r="2.4" fill="#4f4a47" />
<rect x="436.6" y="135.02" width="52.8" height="8.8" fill="#b1a9a3" />
<circle cx="441.4" cy="139.42" r="2.4" fill="#4f4a47" />
<rect x="489.4" y="53.2" width="42.8" height="10.6" fill="#4a4643" />
<rect x="490.4" y="54.2" width="40.8" height="9" fill="#f4ee78" />
<g clip-path="url(#cc5)"><text x="492.4" y="61.07" font-size="6.1" fill="#45430f" font-weight="700" transform="translate(492.4 0) scale(0.9 1) translate(-492.4 0)" >Pluck Synth</text></g>
<defs><clipPath id="cc5"><rect x="490.4" y="50" width="40.8" height="14"/></clipPath></defs>
<rect x="490.4" y="64.6" width="40.8" height="8.8" fill="#978d87" />
<rect x="492.6" y="66.5" width="5" height="5" fill="#4f4a47" />
<rect x="490.4" y="74.66" width="40.8" height="8.8" fill="#978d87" />
<rect x="492.6" y="76.56" width="5" height="5" fill="#4f4a47" />
<rect x="490.4" y="84.72" width="40.8" height="8.8" fill="#aea69f" />
<rect x="492.6" y="86.62" width="5" height="5" fill="#4f4a47" />
<rect x="490.4" y="94.78" width="40.8" height="8.8" fill="#978d87" />
<rect x="492.6" y="96.68" width="5" height="5" fill="#4f4a47" />
<rect x="490.4" y="104.84" width="40.8" height="8.8" fill="#978d87" />
<rect x="492.6" y="106.74" width="5" height="5" fill="#4f4a47" />
<rect x="490.4" y="114.9" width="40.8" height="8.8" fill="#978d87" />
<rect x="492.6" y="116.8" width="5" height="5" fill="#4f4a47" />
<rect x="490.4" y="124.96" width="40.8" height="8.8" fill="#978d87" />
<rect x="492.6" y="126.86" width="5" height="5" fill="#4f4a47" />
<rect x="490.4" y="135.02" width="40.8" height="8.8" fill="#978d87" />
<rect x="492.6" y="136.92" width="5" height="5" fill="#4f4a47" />
<rect x="532.2" y="50.6" width="52.2" height="12.6" fill="#4bb39c" />
<g clip-path="url(#cc6)"><text x="534.2" y="61.07" font-size="6.1" fill="#0f4238" font-weight="700" transform="translate(534.2 0) scale(0.9 1) translate(-534.2 0)" >Strings</text></g>
<defs><clipPath id="cc6"><rect x="532.2" y="50" width="52.2" height="14"/></clipPath></defs>
<circle cx="579.6" cy="58.6" r="3.3" fill="none" stroke="#1f6a5c" stroke-width="0.85" />
<path d="M578 57.6h2.6v2.4M580.6 60l-1-1M580.6 60l1-1" fill="none" stroke="#1a5a4e" stroke-width="0.7" />
<rect x="532.2" y="64.6" width="52.2" height="8.8" fill="#978d87" />
<rect x="534.4" y="66.5" width="5" height="5" fill="#4f4a47" />
<rect x="532.2" y="74.66" width="52.2" height="8.8" fill="#978d87" />
<path d="M534.8 76.56l4.4 2.5l-4.4 2.5z" fill="#55504d" />
<rect x="577.4" y="75.26" width="6" height="7.6" fill="url(#h6)" />
<rect x="532.2" y="84.72" width="52.2" height="8.8" fill="#aea69f" />
<path d="M534.8 86.62l4.4 2.5l-4.4 2.5z" fill="#55504d" />
<rect x="577.4" y="85.32" width="6" height="7.6" fill="url(#h6)" />
<rect x="532.2" y="94.78" width="52.2" height="8.8" fill="#978d87" />
<path d="M534.8 96.68l4.4 2.5l-4.4 2.5z" fill="#55504d" />
<rect x="577.4" y="95.38" width="6" height="7.6" fill="url(#h6)" />
<rect x="532.2" y="104.84" width="52.2" height="8.8" fill="#978d87" />
<path d="M534.8 106.74l4.4 2.5l-4.4 2.5z" fill="#55504d" />
<rect x="577.4" y="105.44" width="6" height="7.6" fill="url(#h6)" />
<rect x="532.2" y="114.9" width="52.2" height="8.8" fill="#978d87" />
<rect x="534.4" y="116.8" width="5" height="5" fill="#4f4a47" />
<rect x="532.2" y="124.96" width="52.2" height="8.8" fill="#978d87" />
<rect x="534.4" y="126.86" width="5" height="5" fill="#4f4a47" />
<rect x="532.2" y="135.02" width="52.2" height="8.8" fill="#978d87" />
<rect x="534.4" y="136.92" width="5" height="5" fill="#4f4a47" />
<rect x="584.4" y="53.2" width="54.6" height="10.6" fill="#3f524d" />
<rect x="585.4" y="54.2" width="52.6" height="9" fill="#4bb39c" />
<g clip-path="url(#cc7)"><text x="587.4" y="61.07" font-size="6.1" fill="#0f4238" font-weight="700" transform="translate(587.4 0) scale(0.9 1) translate(-587.4 0)" >Strings Main</text></g>
<defs><clipPath id="cc7"><rect x="585.4" y="50" width="52.6" height="14"/></clipPath></defs>
<rect x="585.4" y="64.6" width="52.6" height="8.8" fill="#978d87" />
<rect x="587.6" y="66.5" width="5" height="5" fill="#4f4a47" />
<rect x="585.4" y="74.66" width="52.6" height="8.8" fill="#978d87" />
<rect x="585.4" y="74.66" width="52.6" height="8.8" fill="#4bb39c" />
<path d="M588 76.56l4.4 2.5l-4.4 2.5z" fill="#143f37" />
<line x1="594.8" y1="74.66" x2="594.8" y2="83.46" stroke="#2f7f70" stroke-width="0.7" />
<rect x="585.4" y="84.72" width="52.6" height="8.8" fill="#aea69f" />
<rect x="585.4" y="84.72" width="52.6" height="8.8" fill="#4bb39c" />
<path d="M588 86.62l4.4 2.5l-4.4 2.5z" fill="#143f37" />
<line x1="594.8" y1="84.72" x2="594.8" y2="93.52" stroke="#2f7f70" stroke-width="0.7" />
<rect x="585.4" y="94.78" width="52.6" height="8.8" fill="#978d87" />
<rect x="585.4" y="94.78" width="52.6" height="8.8" fill="#4bb39c" />
<path d="M588 96.68l4.4 2.5l-4.4 2.5z" fill="#143f37" />
<line x1="594.8" y1="94.78" x2="594.8" y2="103.58" stroke="#2f7f70" stroke-width="0.7" />
<rect x="585.4" y="104.84" width="52.6" height="8.8" fill="#978d87" />
<rect x="585.4" y="104.84" width="52.6" height="8.8" fill="#4bb39c" />
<path d="M588 106.74l4.4 2.5l-4.4 2.5z" fill="#143f37" />
<line x1="594.8" y1="104.84" x2="594.8" y2="113.64" stroke="#2f7f70" stroke-width="0.7" />
<rect x="585.4" y="114.9" width="52.6" height="8.8" fill="#978d87" />
<rect x="587.6" y="116.8" width="5" height="5" fill="#4f4a47" />
<rect x="585.4" y="124.96" width="52.6" height="8.8" fill="#978d87" />
<rect x="587.6" y="126.86" width="5" height="5" fill="#4f4a47" />
<rect x="585.4" y="135.02" width="52.6" height="8.8" fill="#978d87" />
<rect x="587.6" y="136.92" width="5" height="5" fill="#4f4a47" />
<rect x="638" y="53.2" width="54.8" height="10.6" fill="#3f524d" />
<rect x="639" y="54.2" width="52.8" height="9" fill="#4bb39c" />
<g clip-path="url(#cc8)"><text x="641" y="61.07" font-size="6.1" fill="#0f4238" font-weight="700" transform="translate(641 0) scale(0.9 1) translate(-641 0)" >Strings High</text></g>
<defs><clipPath id="cc8"><rect x="639" y="50" width="52.8" height="14"/></clipPath></defs>
<rect x="639" y="64.6" width="52.8" height="8.8" fill="#978d87" />
<rect x="641.2" y="66.5" width="5" height="5" fill="#4f4a47" />
<rect x="639" y="74.66" width="52.8" height="8.8" fill="#978d87" />
<rect x="639" y="74.66" width="52.8" height="8.8" fill="#4bb39c" />
<path d="M641.6 76.56l4.4 2.5l-4.4 2.5z" fill="#143f37" />
<line x1="648.4" y1="74.66" x2="648.4" y2="83.46" stroke="#2f7f70" stroke-width="0.7" />
<rect x="639" y="84.72" width="52.8" height="8.8" fill="#aea69f" />
<rect x="639" y="84.72" width="52.8" height="8.8" fill="#4bb39c" />
<path d="M641.6 86.62l4.4 2.5l-4.4 2.5z" fill="#143f37" />
<line x1="648.4" y1="84.72" x2="648.4" y2="93.52" stroke="#2f7f70" stroke-width="0.7" />
<rect x="639" y="94.78" width="52.8" height="8.8" fill="#978d87" />
<rect x="641.2" y="96.68" width="5" height="5" fill="#4f4a47" />
<rect x="639" y="104.84" width="52.8" height="8.8" fill="#978d87" />
<rect x="641.2" y="106.74" width="5" height="5" fill="#4f4a47" />
<rect x="639" y="114.9" width="52.8" height="8.8" fill="#978d87" />
<rect x="641.2" y="116.8" width="5" height="5" fill="#4f4a47" />
<rect x="639" y="124.96" width="52.8" height="8.8" fill="#978d87" />
<rect x="641.2" y="126.86" width="5" height="5" fill="#4f4a47" />
<rect x="639" y="135.02" width="52.8" height="8.8" fill="#978d87" />
<rect x="641.2" y="136.92" width="5" height="5" fill="#4f4a47" />
<rect x="691.8" y="53.2" width="37.2" height="10.6" fill="#3f524d" />
<rect x="692.8" y="54.2" width="35.2" height="9" fill="#4bb39c" />
<g clip-path="url(#cc9)"><text x="694.8" y="61.07" font-size="6.1" fill="#0f4238" font-weight="700" transform="translate(694.8 0) scale(0.9 1) translate(-694.8 0)" >Strings Layer</text></g>
<defs><clipPath id="cc9"><rect x="692.8" y="50" width="35.2" height="14"/></clipPath></defs>
<rect x="692.8" y="64.6" width="35.2" height="8.8" fill="#978d87" />
<rect x="695" y="66.5" width="5" height="5" fill="#4f4a47" />
<rect x="692.8" y="74.66" width="35.2" height="8.8" fill="#978d87" />
<rect x="692.8" y="74.66" width="35.2" height="8.8" fill="#4bb39c" />
<path d="M695.4 76.56l4.4 2.5l-4.4 2.5z" fill="#143f37" />
<line x1="702.2" y1="74.66" x2="702.2" y2="83.46" stroke="#2f7f70" stroke-width="0.7" />
<rect x="692.8" y="84.72" width="35.2" height="8.8" fill="#aea69f" />
<rect x="695" y="86.62" width="5" height="5" fill="#4f4a47" />
<rect x="692.8" y="94.78" width="35.2" height="8.8" fill="#978d87" />
<rect x="692.8" y="94.78" width="35.2" height="8.8" fill="#4bb39c" />
<path d="M695.4 96.68l4.4 2.5l-4.4 2.5z" fill="#143f37" />
<line x1="702.2" y1="94.78" x2="702.2" y2="103.58" stroke="#2f7f70" stroke-width="0.7" />
<rect x="692.8" y="104.84" width="35.2" height="8.8" fill="#978d87" />
<rect x="695" y="106.74" width="5" height="5" fill="#4f4a47" />
<rect x="692.8" y="114.9" width="35.2" height="8.8" fill="#978d87" />
<rect x="695" y="116.8" width="5" height="5" fill="#4f4a47" />
<rect x="692.8" y="124.96" width="35.2" height="8.8" fill="#978d87" />
<rect x="695" y="126.86" width="5" height="5" fill="#4f4a47" />
<rect x="692.8" y="135.02" width="35.2" height="8.8" fill="#978d87" />
<rect x="695" y="136.92" width="5" height="5" fill="#4f4a47" />
<rect x="729" y="50.6" width="53.2" height="12.6" fill="#877d77" />
<g clip-path="url(#cc10)"><text x="731" y="61.07" font-size="6.1" fill="#211e1c" font-weight="700" transform="translate(731 0) scale(0.9 1) translate(-731 0)" >A Reverb</text></g>
<defs><clipPath id="cc10"><rect x="729" y="50" width="53.2" height="14"/></clipPath></defs>
<rect x="729" y="64.6" width="53.2" height="8.8" fill="#978d87" />
<rect x="729" y="74.66" width="53.2" height="8.8" fill="#978d87" />
<rect x="729" y="84.72" width="53.2" height="8.8" fill="#aea69f" />
<rect x="729" y="94.78" width="53.2" height="8.8" fill="#978d87" />
<rect x="729" y="104.84" width="53.2" height="8.8" fill="#978d87" />
<rect x="729" y="114.9" width="53.2" height="8.8" fill="#978d87" />
<rect x="729" y="124.96" width="53.2" height="8.8" fill="#978d87" />
<rect x="729" y="135.02" width="53.2" height="8.8" fill="#978d87" />
<rect x="783.2" y="50.6" width="52.2" height="12.6" fill="#ffffff" />
<g clip-path="url(#cc11)"><text x="785.8" y="61.07" font-size="6.1" fill="#211e1c" stroke="#211e1c" stroke-width="0.14" >Master</text></g>
<defs><clipPath id="cc11"><rect x="783.2" y="50" width="52.2" height="14"/></clipPath></defs>
<rect x="783.2" y="64.6" width="52.2" height="8.8" fill="#978d87" />
<path d="M785.8 66.5l4.4 2.5l-4.4 2.5z" fill="#55504d" />
<rect x="825.2" y="64.6" width="10.2" height="8.8" fill="#867c76" />
<text x="830.4" y="71.4" font-size="6.2" fill="#211e1c" text-anchor="middle" stroke="#211e1c" stroke-width="0.14" >1</text>
<rect x="783.2" y="74.66" width="52.2" height="8.8" fill="#978d87" />
<path d="M785.8 76.56l4.4 2.5l-4.4 2.5z" fill="#55504d" />
<rect x="825.2" y="74.66" width="10.2" height="8.8" fill="#867c76" />
<text x="830.4" y="81.46" font-size="6.2" fill="#211e1c" text-anchor="middle" stroke="#211e1c" stroke-width="0.14" >2</text>
<rect x="783.2" y="84.72" width="52.2" height="8.8" fill="#aea69f" />
<path d="M785.8 86.62l4.4 2.5l-4.4 2.5z" fill="#55504d" />
<rect x="825.2" y="84.72" width="10.2" height="8.8" fill="#9c938d" />
<text x="830.4" y="91.52" font-size="6.2" fill="#211e1c" text-anchor="middle" stroke="#211e1c" stroke-width="0.14" >3</text>
<rect x="783.2" y="94.78" width="52.2" height="8.8" fill="#978d87" />
<path d="M785.8 96.68l4.4 2.5l-4.4 2.5z" fill="#55504d" />
<rect x="825.2" y="94.78" width="10.2" height="8.8" fill="#867c76" />
<text x="830.4" y="101.58" font-size="6.2" fill="#211e1c" text-anchor="middle" stroke="#211e1c" stroke-width="0.14" >4</text>
<rect x="783.2" y="104.84" width="52.2" height="8.8" fill="#978d87" />
<path d="M785.8 106.74l4.4 2.5l-4.4 2.5z" fill="#55504d" />
<rect x="825.2" y="104.84" width="10.2" height="8.8" fill="#867c76" />
<text x="830.4" y="111.64" font-size="6.2" fill="#211e1c" text-anchor="middle" stroke="#211e1c" stroke-width="0.14" >5</text>
<rect x="783.2" y="114.9" width="52.2" height="8.8" fill="#978d87" />
<path d="M785.8 116.8l4.4 2.5l-4.4 2.5z" fill="#55504d" />
<rect x="825.2" y="114.9" width="10.2" height="8.8" fill="#867c76" />
<text x="830.4" y="121.7" font-size="6.2" fill="#211e1c" text-anchor="middle" stroke="#211e1c" stroke-width="0.14" >6</text>
<rect x="783.2" y="124.96" width="52.2" height="8.8" fill="#978d87" />
<path d="M785.8 126.86l4.4 2.5l-4.4 2.5z" fill="#55504d" />
<rect x="825.2" y="124.96" width="10.2" height="8.8" fill="#867c76" />
<text x="830.4" y="131.76" font-size="6.2" fill="#211e1c" text-anchor="middle" stroke="#211e1c" stroke-width="0.14" >7</text>
<rect x="783.2" y="135.02" width="52.2" height="8.8" fill="#978d87" />
<path d="M785.8 136.92l4.4 2.5l-4.4 2.5z" fill="#55504d" />
<rect x="825.2" y="135.02" width="10.2" height="8.8" fill="#867c76" />
<text x="830.4" y="141.82" font-size="6.2" fill="#211e1c" text-anchor="middle" stroke="#211e1c" stroke-width="0.14" >8</text>
<defs><pattern id="h1" width="2.4" height="2.4" patternUnits="userSpaceOnUse" patternTransform="rotate(-45)"><rect width="2.4" height="2.4" fill="#8a8550"/><rect width="2.4" height="1.3" fill="#f4ee78"/></pattern><pattern id="h6" width="2.4" height="2.4" patternUnits="userSpaceOnUse" patternTransform="rotate(-45)"><rect width="2.4" height="2.4" fill="#869b93"/><rect width="2.4" height="1.3" fill="#5fb5a4"/></pattern></defs>
<defs><linearGradient id="mg" gradientUnits="userSpaceOnUse" x1="0" x2="0" y1="198" y2="252"><stop offset="0" stop-color="#8cd44c"/><stop offset="1" stop-color="#60b335"/></linearGradient></defs>
<rect x="276.4" y="145.6" width="20.6" height="9.6" fill="#978d87" />
<rect x="276.4" y="156.3" width="20.6" height="19.9" fill="#9a918b" />
<rect x="276.4" y="177.4" width="20.6" height="77.6" fill="#9a918b" />
<rect x="276.4" y="256.2" width="20.6" height="9.6" fill="#9a918b" />
<text x="276.6" y="164.17" font-size="6.1" fill="#211e1c" font-weight="700" transform="translate(276.6 0) scale(0.9 1) translate(-276.6 0)" >nds</text>
<text x="288" y="152.63" font-size="6" fill="#211e1c" text-anchor="middle" stroke="#211e1c" stroke-width="0.14" >8</text>
<circle cx="275.4" cy="150.4" r="2.8" fill="#a9b53c" clip-path="url(#c0)"/>
<defs><clipPath id="c0"><rect x="276.4" y="140" width="30" height="130"/></clipPath></defs>
<g clip-path="url(#c0)">
<rect x="274.4" y="180.2" width="6.4" height="72.2" fill="#6a6461" />
<rect x="274.6" y="216" width="6" height="36.2" fill="url(#mg)" />
<rect x="274.6" y="180.6" width="2.7" height="71.6" fill="#1d1b19" />
<rect x="274.6" y="212.6" width="2.7" height="1.4" fill="#5f923c" />
<rect x="274.6" y="214" width="2.7" height="38.2" fill="url(#mg)" />
<rect x="277.9" y="180.6" width="2.7" height="71.6" fill="#1d1b19" />
<rect x="277.9" y="214.8" width="2.7" height="1.2" fill="#5f923c" />
<rect x="277.9" y="216" width="2.7" height="36.2" fill="url(#mg)" />
<line x1="274.4" y1="194.9" x2="280.8" y2="194.9" stroke="#4a4643" stroke-width="0.5" />
</g>
<path d="M283.0 187.4l4.6-2.7v5.4z" fill="#e4e1de" stroke="#4a4643" stroke-width="0.6" />
<text x="293.6" y="189.53" font-size="6" fill="#211e1c" text-anchor="end" stroke="#211e1c" stroke-width="0.14" >0</text>
<line x1="282.2" y1="187.4" x2="284.2" y2="187.4" stroke="#45413e" stroke-width="0.85" />
<text x="293.6" y="197.03" font-size="6" fill="#211e1c" text-anchor="end" stroke="#211e1c" stroke-width="0.14" >6</text>
<line x1="282.2" y1="194.9" x2="284.2" y2="194.9" stroke="#45413e" stroke-width="0.85" />
<text x="293.6" y="204.43" font-size="6" fill="#211e1c" text-anchor="end" stroke="#211e1c" stroke-width="0.14" >12</text>
<line x1="282.2" y1="202.3" x2="284.2" y2="202.3" stroke="#45413e" stroke-width="0.85" />
<text x="293.6" y="211.63" font-size="6" fill="#211e1c" text-anchor="end" stroke="#211e1c" stroke-width="0.14" >18</text>
<line x1="282.2" y1="209.5" x2="284.2" y2="209.5" stroke="#45413e" stroke-width="0.85" />
<text x="293.6" y="218.33" font-size="6" fill="#211e1c" text-anchor="end" stroke="#211e1c" stroke-width="0.14" >24</text>
<line x1="282.2" y1="216.2" x2="284.2" y2="216.2" stroke="#45413e" stroke-width="0.85" />
<text x="293.6" y="225.23" font-size="6" fill="#211e1c" text-anchor="end" stroke="#211e1c" stroke-width="0.14" >30</text>
<line x1="282.2" y1="223.1" x2="284.2" y2="223.1" stroke="#45413e" stroke-width="0.85" />
<text x="293.6" y="232.13" font-size="6" fill="#211e1c" text-anchor="end" stroke="#211e1c" stroke-width="0.14" >36</text>
<line x1="282.2" y1="230" x2="284.2" y2="230" stroke="#45413e" stroke-width="0.85" />
<text x="293.6" y="242.43" font-size="6" fill="#211e1c" text-anchor="end" stroke="#211e1c" stroke-width="0.14" >48</text>
<line x1="282.2" y1="240.3" x2="284.2" y2="240.3" stroke="#45413e" stroke-width="0.85" />
<text x="293.6" y="250.73" font-size="6" fill="#211e1c" text-anchor="end" stroke="#211e1c" stroke-width="0.14" >60</text>
<line x1="282.2" y1="248.6" x2="284.2" y2="248.6" stroke="#45413e" stroke-width="0.85" />
<rect x="277" y="260.1" width="4.7" height="1.9" fill="#2b2826" />
<rect x="282.6" y="260.1" width="4.7" height="1.9" fill="#2b2826" />
<rect x="298" y="145.6" width="52" height="9.6" fill="#978d87" />
<rect x="298" y="156.3" width="52" height="19.9" fill="#9a918b" />
<rect x="298" y="177.4" width="52" height="77.6" fill="#9a918b" />
<rect x="298" y="256.2" width="52" height="9.6" fill="#9a918b" />
<rect x="300.2" y="147.9" width="5" height="5" fill="#4f4a47" />
<circle cx="328.8" cy="150.4" r="2.9" fill="#d4d0cd" stroke="#3a3633" stroke-width="0.6" />
<path d="M328.8 150.4v-2.9a2.9 2.9 0 0 1 2.5 1.45z" fill="#3a3633" />
<path d="M309.06 170.14A6.7 6.7 0 1 1 318.54 170.14" fill="none" stroke="#2b2826" stroke-width="1.4" />
<line x1="313.8" y1="165.4" x2="310.67" y2="171.55" stroke="#2b2826" stroke-width="1.4" />
<text x="313.8" y="174.45" font-size="5.2" fill="#2b2826" text-anchor="middle" stroke="#2b2826" stroke-width="0.14" >A</text>
<g clip-path="url(#cs1)"><text x="324.4" y="163.93" font-size="6" fill="#211e1c" font-weight="700" transform="translate(324.4 0) scale(0.9 1) translate(-324.4 0)" >Sends</text></g>
<defs><clipPath id="cs1"><rect x="298" y="150" width="52" height="30"/></clipPath></defs>
<rect x="304.2" y="180.5" width="19.2" height="6.4" fill="#e4e1de" rx="3.2" stroke="#4a4643" stroke-width="0.6" />
<text x="313.8" y="185.96" font-size="5.8" fill="#211e1c" text-anchor="middle" stroke="#211e1c" stroke-width="0.14" >-18.8</text>
<rect x="304.4" y="191" width="18.8" height="6.4" fill="#e4e1de" stroke="#4a4643" stroke-width="0.6" />
<text x="313.8" y="196.46" font-size="5.8" fill="#211e1c" text-anchor="middle" stroke="#211e1c" stroke-width="0.14" >-6.6</text>
<path d="M309.13 215.67A6.6 6.6 0 1 1 318.47 215.67" fill="none" stroke="#2b2826" stroke-width="1.4" />
<line x1="313.8" y1="211" x2="313.8" y2="204" stroke="#2b2826" stroke-width="1.4" />
<path d="M311.9 201.2h3.8l-1.9 2.2z" fill="#2b2826" />
<rect x="307.6" y="221.4" width="12.4" height="12.1" fill="#fbb02f" stroke="#8a5a10" stroke-width="0.6" />
<text x="313.8" y="230.33" font-size="7.4" fill="#211e1c" text-anchor="middle" font-weight="700" transform="translate(313.8 0) scale(0.9 1) translate(-313.8 0)" >18</text>
<rect x="307.6" y="236.4" width="12.4" height="6.9" fill="#cbc7c3" stroke="#4a4643" stroke-width="0.6" />
<text x="313.8" y="241.99" font-size="5.6" fill="#211e1c" text-anchor="middle" stroke="#211e1c" stroke-width="0.14" >S</text>
<rect x="327.6" y="180.2" width="6.4" height="72.2" fill="#6a6461" />
<rect x="327.8" y="219.7" width="6" height="32.5" fill="url(#mg)" />
<rect x="327.8" y="180.6" width="2.7" height="71.6" fill="#1d1b19" />
<rect x="327.8" y="215.4" width="2.7" height="1.4" fill="#5f923c" />
<rect x="327.8" y="216.8" width="2.7" height="35.4" fill="url(#mg)" />
<rect x="331.1" y="180.6" width="2.7" height="71.6" fill="#1d1b19" />
<rect x="331.1" y="218.6" width="2.7" height="1.1" fill="#5f923c" />
<rect x="331.1" y="219.7" width="2.7" height="32.5" fill="url(#mg)" />
<line x1="327.6" y1="194.9" x2="334" y2="194.9" stroke="#4a4643" stroke-width="0.5" />
<line x1="335.4" y1="187.4" x2="337.4" y2="187.4" stroke="#45413e" stroke-width="0.85" />
<line x1="335.4" y1="194.9" x2="337.4" y2="194.9" stroke="#45413e" stroke-width="0.85" />
<line x1="335.4" y1="202.3" x2="337.4" y2="202.3" stroke="#45413e" stroke-width="0.85" />
<line x1="335.4" y1="209.5" x2="337.4" y2="209.5" stroke="#45413e" stroke-width="0.85" />
<line x1="335.4" y1="216.2" x2="337.4" y2="216.2" stroke="#45413e" stroke-width="0.85" />
<line x1="335.4" y1="223.1" x2="337.4" y2="223.1" stroke="#45413e" stroke-width="0.85" />
<line x1="335.4" y1="230" x2="337.4" y2="230" stroke="#45413e" stroke-width="0.85" />
<line x1="335.4" y1="240.3" x2="337.4" y2="240.3" stroke="#45413e" stroke-width="0.85" />
<line x1="335.4" y1="248.6" x2="337.4" y2="248.6" stroke="#45413e" stroke-width="0.85" />
<line x1="335.6" y1="180.8" x2="336.9" y2="180.8" stroke="#6f6965" stroke-width="0.6" />
<line x1="335.6" y1="184.2" x2="336.9" y2="184.2" stroke="#6f6965" stroke-width="0.6" />
<line x1="335.6" y1="191.2" x2="336.9" y2="191.2" stroke="#6f6965" stroke-width="0.6" />
<line x1="335.6" y1="198.6" x2="336.9" y2="198.6" stroke="#6f6965" stroke-width="0.6" />
<line x1="335.6" y1="205.9" x2="336.9" y2="205.9" stroke="#6f6965" stroke-width="0.6" />
<line x1="335.6" y1="212.9" x2="336.9" y2="212.9" stroke="#6f6965" stroke-width="0.6" />
<line x1="335.6" y1="219.6" x2="336.9" y2="219.6" stroke="#6f6965" stroke-width="0.6" />
<line x1="335.6" y1="226.5" x2="336.9" y2="226.5" stroke="#6f6965" stroke-width="0.6" />
<line x1="335.6" y1="235.2" x2="336.9" y2="235.2" stroke="#6f6965" stroke-width="0.6" />
<line x1="335.6" y1="244.4" x2="336.9" y2="244.4" stroke="#6f6965" stroke-width="0.6" />
<line x1="335.6" y1="251.8" x2="336.9" y2="251.8" stroke="#6f6965" stroke-width="0.6" />
<text x="346.6" y="189.53" font-size="6" fill="#211e1c" text-anchor="end" stroke="#211e1c" stroke-width="0.14" >0</text>
<text x="346.6" y="197.03" font-size="6" fill="#211e1c" text-anchor="end" stroke="#211e1c" stroke-width="0.14" >6</text>
<text x="346.6" y="204.43" font-size="6" fill="#211e1c" text-anchor="end" stroke="#211e1c" stroke-width="0.14" >12</text>
<text x="346.6" y="211.63" font-size="6" fill="#211e1c" text-anchor="end" stroke="#211e1c" stroke-width="0.14" >18</text>
<text x="346.6" y="218.33" font-size="6" fill="#211e1c" text-anchor="end" stroke="#211e1c" stroke-width="0.14" >24</text>
<text x="346.6" y="225.23" font-size="6" fill="#211e1c" text-anchor="end" stroke="#211e1c" stroke-width="0.14" >30</text>
<text x="346.6" y="232.13" font-size="6" fill="#211e1c" text-anchor="end" stroke="#211e1c" stroke-width="0.14" >36</text>
<text x="346.6" y="242.43" font-size="6" fill="#211e1c" text-anchor="end" stroke="#211e1c" stroke-width="0.14" >48</text>
<text x="346.6" y="250.73" font-size="6" fill="#211e1c" text-anchor="end" stroke="#211e1c" stroke-width="0.14" >60</text>
<path d="M334.8 195l4.6-2.7v5.4z" fill="#e4e1de" stroke="#4a4643" stroke-width="0.6" />
<rect x="308.1" y="260.1" width="4.7" height="1.9" fill="#6a5630" />
<rect x="313.7" y="260.1" width="4.7" height="1.9" fill="#2b2826" />
<rect x="319.3" y="260.1" width="4.7" height="1.9" fill="#2b2826" />
<rect x="324.9" y="260.1" width="4.7" height="1.9" fill="#2b2826" />
<rect x="330.5" y="260.1" width="4.7" height="1.9" fill="#2b2826" />
<rect x="336.1" y="260.1" width="4.7" height="1.9" fill="#2b2826" />
<rect x="351" y="145.6" width="42.4" height="9.6" fill="#978d87" />
<rect x="351" y="156.3" width="42.4" height="19.9" fill="#9a918b" />
<rect x="351" y="177.4" width="42.4" height="77.6" fill="#9a918b" />
<rect x="351" y="256.2" width="42.4" height="9.6" fill="#9a918b" />
<rect x="353.2" y="147.9" width="5" height="5" fill="#4f4a47" />
<path d="M359.06 170.14A6.7 6.7 0 1 1 368.54 170.14" fill="none" stroke="#2b2826" stroke-width="1.4" />
<line x1="363.8" y1="165.4" x2="360.67" y2="171.55" stroke="#2b2826" stroke-width="1.4" />
<text x="363.8" y="174.45" font-size="5.2" fill="#2b2826" text-anchor="middle" stroke="#2b2826" stroke-width="0.14" >A</text>
<g clip-path="url(#cs2)"><text x="374.4" y="163.93" font-size="6" fill="#211e1c" font-weight="700" transform="translate(374.4 0) scale(0.9 1) translate(-374.4 0)" >Sends</text></g>
<defs><clipPath id="cs2"><rect x="351" y="150" width="42.4" height="30"/></clipPath></defs>
<rect x="354.2" y="180.5" width="19.2" height="6.4" fill="#e4e1de" rx="3.2" stroke="#4a4643" stroke-width="0.6" />
<text x="363.8" y="185.96" font-size="5.8" fill="#211e1c" text-anchor="middle" stroke="#211e1c" stroke-width="0.14" >-Inf</text>
<rect x="354.4" y="191" width="18.8" height="6.4" fill="#e4e1de" stroke="#4a4643" stroke-width="0.6" />
<text x="363.8" y="196.46" font-size="5.8" fill="#211e1c" text-anchor="middle" stroke="#211e1c" stroke-width="0.14" >-7.0</text>
<path d="M359.13 215.67A6.6 6.6 0 1 1 368.47 215.67" fill="none" stroke="#2b2826" stroke-width="1.4" />
<line x1="363.8" y1="211" x2="363.8" y2="204" stroke="#2b2826" stroke-width="1.4" />
<path d="M361.9 201.2h3.8l-1.9 2.2z" fill="#2b2826" />
<rect x="357.6" y="221.4" width="12.4" height="12.1" fill="#fbb02f" stroke="#8a5a10" stroke-width="0.6" />
<text x="363.8" y="230.33" font-size="7.4" fill="#211e1c" text-anchor="middle" font-weight="700" transform="translate(363.8 0) scale(0.9 1) translate(-363.8 0)" >19</text>
<rect x="357.6" y="236.4" width="12.4" height="6.9" fill="#cbc7c3" stroke="#4a4643" stroke-width="0.6" />
<text x="363.8" y="241.99" font-size="5.6" fill="#211e1c" text-anchor="middle" stroke="#211e1c" stroke-width="0.14" >S</text>
<rect x="357.6" y="246" width="12.4" height="6.4" fill="#cbc7c3" stroke="#4a4643" stroke-width="0.6" />
<circle cx="363.8" cy="249.2" r="1.5" fill="#1f1c1a" />
<rect x="377.6" y="180.2" width="6.4" height="72.2" fill="#6a6461" />
<rect x="377.8" y="180.6" width="2.7" height="71.6" fill="#1d1b19" />
<rect x="381.1" y="180.6" width="2.7" height="71.6" fill="#1d1b19" />
<line x1="385.4" y1="187.4" x2="387.4" y2="187.4" stroke="#45413e" stroke-width="0.85" />
<line x1="385.4" y1="194.9" x2="387.4" y2="194.9" stroke="#45413e" stroke-width="0.85" />
<line x1="385.4" y1="202.3" x2="387.4" y2="202.3" stroke="#45413e" stroke-width="0.85" />
<line x1="385.4" y1="209.5" x2="387.4" y2="209.5" stroke="#45413e" stroke-width="0.85" />
<line x1="385.4" y1="216.2" x2="387.4" y2="216.2" stroke="#45413e" stroke-width="0.85" />
<line x1="385.4" y1="223.1" x2="387.4" y2="223.1" stroke="#45413e" stroke-width="0.85" />
<line x1="385.4" y1="230" x2="387.4" y2="230" stroke="#45413e" stroke-width="0.85" />
<line x1="385.4" y1="240.3" x2="387.4" y2="240.3" stroke="#45413e" stroke-width="0.85" />
<line x1="385.4" y1="248.6" x2="387.4" y2="248.6" stroke="#45413e" stroke-width="0.85" />
<line x1="385.6" y1="180.8" x2="386.9" y2="180.8" stroke="#6f6965" stroke-width="0.6" />
<line x1="385.6" y1="184.2" x2="386.9" y2="184.2" stroke="#6f6965" stroke-width="0.6" />
<line x1="385.6" y1="191.2" x2="386.9" y2="191.2" stroke="#6f6965" stroke-width="0.6" />
<line x1="385.6" y1="198.6" x2="386.9" y2="198.6" stroke="#6f6965" stroke-width="0.6" />
<line x1="385.6" y1="205.9" x2="386.9" y2="205.9" stroke="#6f6965" stroke-width="0.6" />
<line x1="385.6" y1="212.9" x2="386.9" y2="212.9" stroke="#6f6965" stroke-width="0.6" />
<line x1="385.6" y1="219.6" x2="386.9" y2="219.6" stroke="#6f6965" stroke-width="0.6" />
<line x1="385.6" y1="226.5" x2="386.9" y2="226.5" stroke="#6f6965" stroke-width="0.6" />
<line x1="385.6" y1="235.2" x2="386.9" y2="235.2" stroke="#6f6965" stroke-width="0.6" />
<line x1="385.6" y1="244.4" x2="386.9" y2="244.4" stroke="#6f6965" stroke-width="0.6" />
<line x1="385.6" y1="251.8" x2="386.9" y2="251.8" stroke="#6f6965" stroke-width="0.6" />
<path d="M384.8 195.5l4.6-2.7v5.4z" fill="#e4e1de" stroke="#4a4643" stroke-width="0.6" />
<rect x="356.3" y="260.1" width="4.7" height="1.9" fill="#2b2826" />
<rect x="361.9" y="260.1" width="4.7" height="1.9" fill="#2b2826" />
<rect x="367.5" y="260.1" width="4.7" height="1.9" fill="#2b2826" />
<rect x="373.1" y="260.1" width="4.7" height="1.9" fill="#2b2826" />
<rect x="378.7" y="260.1" width="4.7" height="1.9" fill="#2b2826" />
<rect x="384.3" y="260.1" width="4.7" height="1.9" fill="#2b2826" />
<rect x="394.4" y="145.6" width="41.2" height="9.6" fill="#978d87" />
<rect x="394.4" y="156.3" width="41.2" height="19.9" fill="#9a918b" />
<rect x="394.4" y="177.4" width="41.2" height="77.6" fill="#9a918b" />
<rect x="394.4" y="256.2" width="41.2" height="9.6" fill="#9a918b" />
<rect x="396.6" y="147.9" width="5" height="5" fill="#4f4a47" />
<path d="M401.26 170.14A6.7 6.7 0 1 1 410.74 170.14" fill="none" stroke="#2b2826" stroke-width="1.4" />
<path d="M401.26 170.14A6.7 6.7 0 1 1 411.49 161.56" fill="none" stroke="#8fd3df" stroke-width="1.7" />
<line x1="406" y1="165.4" x2="411.65" y2="161.44" stroke="#2b2826" stroke-width="1.4" />
<text x="406" y="174.45" font-size="5.2" fill="#2b2826" text-anchor="middle" stroke="#2b2826" stroke-width="0.14" >A</text>
<g clip-path="url(#cs3)"><text x="416.6" y="163.93" font-size="6" fill="#211e1c" font-weight="700" transform="translate(416.6 0) scale(0.9 1) translate(-416.6 0)" >Sends</text></g>
<defs><clipPath id="cs3"><rect x="394.4" y="150" width="41.2" height="30"/></clipPath></defs>
<rect x="396.4" y="180.5" width="19.2" height="6.4" fill="#e4e1de" rx="3.2" stroke="#4a4643" stroke-width="0.6" />
<text x="406" y="185.96" font-size="5.8" fill="#211e1c" text-anchor="middle" stroke="#211e1c" stroke-width="0.14" >-Inf</text>
<rect x="396.6" y="191" width="18.8" height="6.4" fill="#e4e1de" stroke="#4a4643" stroke-width="0.6" />
<text x="406" y="196.46" font-size="5.8" fill="#211e1c" text-anchor="middle" stroke="#211e1c" stroke-width="0.14" >-8.0</text>
<path d="M401.33 215.67A6.6 6.6 0 1 1 410.67 215.67" fill="none" stroke="#2b2826" stroke-width="1.4" />
<line x1="406" y1="211" x2="409.5" y2="204.94" stroke="#2b2826" stroke-width="1.4" />
<path d="M404.1 201.2h3.8l-1.9 2.2z" fill="#7fcbdb" />
<rect x="399.8" y="221.4" width="12.4" height="12.1" fill="#fbb02f" stroke="#8a5a10" stroke-width="0.6" />
<text x="406" y="230.33" font-size="7.4" fill="#211e1c" text-anchor="middle" font-weight="700" transform="translate(406 0) scale(0.9 1) translate(-406 0)" >20</text>
<rect x="399.8" y="236.4" width="12.4" height="6.9" fill="#cbc7c3" stroke="#4a4643" stroke-width="0.6" />
<text x="406" y="241.99" font-size="5.6" fill="#211e1c" text-anchor="middle" stroke="#211e1c" stroke-width="0.14" >S</text>
<rect x="399.8" y="246" width="12.4" height="6.4" fill="#cbc7c3" stroke="#4a4643" stroke-width="0.6" />
<circle cx="406" cy="249.2" r="1.5" fill="#1f1c1a" />
<rect x="419.8" y="180.2" width="6.4" height="72.2" fill="#6a6461" />
<rect x="420" y="180.6" width="2.7" height="71.6" fill="#1d1b19" />
<rect x="423.3" y="180.6" width="2.7" height="71.6" fill="#1d1b19" />
<line x1="427.6" y1="187.4" x2="429.6" y2="187.4" stroke="#45413e" stroke-width="0.85" />
<line x1="427.6" y1="194.9" x2="429.6" y2="194.9" stroke="#45413e" stroke-width="0.85" />
<line x1="427.6" y1="202.3" x2="429.6" y2="202.3" stroke="#45413e" stroke-width="0.85" />
<line x1="427.6" y1="209.5" x2="429.6" y2="209.5" stroke="#45413e" stroke-width="0.85" />
<line x1="427.6" y1="216.2" x2="429.6" y2="216.2" stroke="#45413e" stroke-width="0.85" />
<line x1="427.6" y1="223.1" x2="429.6" y2="223.1" stroke="#45413e" stroke-width="0.85" />
<line x1="427.6" y1="230" x2="429.6" y2="230" stroke="#45413e" stroke-width="0.85" />
<line x1="427.6" y1="240.3" x2="429.6" y2="240.3" stroke="#45413e" stroke-width="0.85" />
<line x1="427.6" y1="248.6" x2="429.6" y2="248.6" stroke="#45413e" stroke-width="0.85" />
<line x1="427.8" y1="180.8" x2="429.1" y2="180.8" stroke="#6f6965" stroke-width="0.6" />
<line x1="427.8" y1="184.2" x2="429.1" y2="184.2" stroke="#6f6965" stroke-width="0.6" />
<line x1="427.8" y1="191.2" x2="429.1" y2="191.2" stroke="#6f6965" stroke-width="0.6" />
<line x1="427.8" y1="198.6" x2="429.1" y2="198.6" stroke="#6f6965" stroke-width="0.6" />
<line x1="427.8" y1="205.9" x2="429.1" y2="205.9" stroke="#6f6965" stroke-width="0.6" />
<line x1="427.8" y1="212.9" x2="429.1" y2="212.9" stroke="#6f6965" stroke-width="0.6" />
<line x1="427.8" y1="219.6" x2="429.1" y2="219.6" stroke="#6f6965" stroke-width="0.6" />
<line x1="427.8" y1="226.5" x2="429.1" y2="226.5" stroke="#6f6965" stroke-width="0.6" />
<line x1="427.8" y1="235.2" x2="429.1" y2="235.2" stroke="#6f6965" stroke-width="0.6" />
<line x1="427.8" y1="244.4" x2="429.1" y2="244.4" stroke="#6f6965" stroke-width="0.6" />
<line x1="427.8" y1="251.8" x2="429.1" y2="251.8" stroke="#6f6965" stroke-width="0.6" />
<path d="M427 196.8l4.6-2.7v5.4z" fill="#e4e1de" stroke="#4a4643" stroke-width="0.6" />
<rect x="399.1" y="260.1" width="4.7" height="1.9" fill="#2b2826" />
<rect x="404.7" y="260.1" width="4.7" height="1.9" fill="#2b2826" />
<rect x="410.3" y="260.1" width="4.7" height="1.9" fill="#2b2826" />
<rect x="415.9" y="260.1" width="4.7" height="1.9" fill="#2b2826" />
<rect x="421.5" y="260.1" width="4.7" height="1.9" fill="#2b2826" />
<rect x="427.1" y="260.1" width="4.7" height="1.9" fill="#2b2826" />
<rect x="436.6" y="145.6" width="52.8" height="9.6" fill="#b1a9a3" />
<rect x="436.6" y="156.3" width="52.8" height="19.9" fill="#b1a9a3" />
<rect x="436.6" y="177.4" width="52.8" height="77.6" fill="#b1a9a3" />
<rect x="436.6" y="256.2" width="52.8" height="9.6" fill="#b1a9a3" />
<rect x="438.8" y="147.9" width="5" height="5" fill="#4f4a47" />
<text x="454" y="152.63" font-size="6" fill="#211e1c" text-anchor="middle" stroke="#211e1c" stroke-width="0.14" >1</text>
<circle cx="466.8" cy="150.4" r="3" fill="#f2ee6a" stroke="#3a3633" stroke-width="0.6" />
<path d="M466.8 150.4v-3a3 3 0 0 1 2.6 4.5z" fill="#3a3633" />
<text x="479.6" y="152.63" font-size="6" fill="#211e1c" text-anchor="middle" stroke="#211e1c" stroke-width="0.14" >8</text>
<path d="M448.46 170.14A6.7 6.7 0 1 1 457.94 170.14" fill="none" stroke="#2b2826" stroke-width="1.4" />
<line x1="453.2" y1="165.4" x2="450.07" y2="171.55" stroke="#2b2826" stroke-width="1.4" />
<text x="453.2" y="174.45" font-size="5.2" fill="#2b2826" text-anchor="middle" stroke="#2b2826" stroke-width="0.14" >A</text>
<g clip-path="url(#cs4)"><text x="463.8" y="163.93" font-size="6" fill="#211e1c" font-weight="700" transform="translate(463.8 0) scale(0.9 1) translate(-463.8 0)" >Sends</text></g>
<defs><clipPath id="cs4"><rect x="436.6" y="150" width="52.8" height="30"/></clipPath></defs>
<rect x="443.6" y="180.5" width="19.2" height="6.4" fill="#e4e1de" rx="3.2" stroke="#4a4643" stroke-width="0.6" />
<text x="453.2" y="185.96" font-size="5.8" fill="#211e1c" text-anchor="middle" stroke="#211e1c" stroke-width="0.14" >-12.2</text>
<rect x="443.8" y="191" width="18.8" height="6.4" fill="#e4e1de" stroke="#4a4643" stroke-width="0.6" />
<text x="453.2" y="196.46" font-size="5.8" fill="#211e1c" text-anchor="middle" stroke="#211e1c" stroke-width="0.14" >-11.0</text>
<path d="M448.53 215.67A6.6 6.6 0 1 1 457.87 215.67" fill="none" stroke="#2b2826" stroke-width="1.4" />
<line x1="453.2" y1="211" x2="453.2" y2="204" stroke="#2b2826" stroke-width="1.4" />
<path d="M451.3 201.2h3.8l-1.9 2.2z" fill="#2b2826" />
<rect x="447" y="221.4" width="12.4" height="12.1" fill="#fbb02f" stroke="#8a5a10" stroke-width="0.6" />
<text x="453.2" y="230.33" font-size="7.4" fill="#211e1c" text-anchor="middle" font-weight="700" transform="translate(453.2 0) scale(0.9 1) translate(-453.2 0)" >21</text>
<rect x="447" y="236.4" width="12.4" height="6.9" fill="#cbc7c3" stroke="#4a4643" stroke-width="0.6" />
<text x="453.2" y="241.99" font-size="5.6" fill="#211e1c" text-anchor="middle" stroke="#211e1c" stroke-width="0.14" >S</text>
<rect x="447" y="246" width="12.4" height="6.4" fill="#e8463c" stroke="#4a4643" stroke-width="0.6" />
<circle cx="453.2" cy="249.2" r="1.5" fill="#1f1c1a" />
<rect x="467" y="180.2" width="6.4" height="72.2" fill="#6a6461" />
<rect x="467.2" y="211.1" width="6" height="41.1" fill="url(#mg)" />
<rect x="467.2" y="180.6" width="2.7" height="71.6" fill="#1d1b19" />
<rect x="467.2" y="205.8" width="2.7" height="2.6" fill="#5f923c" />
<rect x="467.2" y="208.4" width="2.7" height="43.8" fill="url(#mg)" />
<rect x="470.5" y="180.6" width="2.7" height="71.6" fill="#1d1b19" />
<rect x="470.5" y="209.6" width="2.7" height="1.5" fill="#5f923c" />
<rect x="470.5" y="211.1" width="2.7" height="41.1" fill="url(#mg)" />
<line x1="467" y1="194.9" x2="473.4" y2="194.9" stroke="#4a4643" stroke-width="0.5" />
<line x1="474.8" y1="187.4" x2="476.8" y2="187.4" stroke="#45413e" stroke-width="0.85" />
<line x1="474.8" y1="194.9" x2="476.8" y2="194.9" stroke="#45413e" stroke-width="0.85" />
<line x1="474.8" y1="202.3" x2="476.8" y2="202.3" stroke="#45413e" stroke-width="0.85" />
<line x1="474.8" y1="209.5" x2="476.8" y2="209.5" stroke="#45413e" stroke-width="0.85" />
<line x1="474.8" y1="216.2" x2="476.8" y2="216.2" stroke="#45413e" stroke-width="0.85" />
<line x1="474.8" y1="223.1" x2="476.8" y2="223.1" stroke="#45413e" stroke-width="0.85" />
<line x1="474.8" y1="230" x2="476.8" y2="230" stroke="#45413e" stroke-width="0.85" />
<line x1="474.8" y1="240.3" x2="476.8" y2="240.3" stroke="#45413e" stroke-width="0.85" />
<line x1="474.8" y1="248.6" x2="476.8" y2="248.6" stroke="#45413e" stroke-width="0.85" />
<line x1="475" y1="180.8" x2="476.3" y2="180.8" stroke="#6f6965" stroke-width="0.6" />
<line x1="475" y1="184.2" x2="476.3" y2="184.2" stroke="#6f6965" stroke-width="0.6" />
<line x1="475" y1="191.2" x2="476.3" y2="191.2" stroke="#6f6965" stroke-width="0.6" />
<line x1="475" y1="198.6" x2="476.3" y2="198.6" stroke="#6f6965" stroke-width="0.6" />
<line x1="475" y1="205.9" x2="476.3" y2="205.9" stroke="#6f6965" stroke-width="0.6" />
<line x1="475" y1="212.9" x2="476.3" y2="212.9" stroke="#6f6965" stroke-width="0.6" />
<line x1="475" y1="219.6" x2="476.3" y2="219.6" stroke="#6f6965" stroke-width="0.6" />
<line x1="475" y1="226.5" x2="476.3" y2="226.5" stroke="#6f6965" stroke-width="0.6" />
<line x1="475" y1="235.2" x2="476.3" y2="235.2" stroke="#6f6965" stroke-width="0.6" />
<line x1="475" y1="244.4" x2="476.3" y2="244.4" stroke="#6f6965" stroke-width="0.6" />
<line x1="475" y1="251.8" x2="476.3" y2="251.8" stroke="#6f6965" stroke-width="0.6" />
<text x="486" y="189.53" font-size="6" fill="#211e1c" text-anchor="end" stroke="#211e1c" stroke-width="0.14" >0</text>
<text x="486" y="197.03" font-size="6" fill="#211e1c" text-anchor="end" stroke="#211e1c" stroke-width="0.14" >6</text>
<text x="486" y="204.43" font-size="6" fill="#211e1c" text-anchor="end" stroke="#211e1c" stroke-width="0.14" >12</text>
<text x="486" y="211.63" font-size="6" fill="#211e1c" text-anchor="end" stroke="#211e1c" stroke-width="0.14" >18</text>
<text x="486" y="218.33" font-size="6" fill="#211e1c" text-anchor="end" stroke="#211e1c" stroke-width="0.14" >24</text>
<text x="486" y="225.23" font-size="6" fill="#211e1c" text-anchor="end" stroke="#211e1c" stroke-width="0.14" >30</text>
<text x="486" y="232.13" font-size="6" fill="#211e1c" text-anchor="end" stroke="#211e1c" stroke-width="0.14" >36</text>
<text x="486" y="242.43" font-size="6" fill="#211e1c" text-anchor="end" stroke="#211e1c" stroke-width="0.14" >48</text>
<text x="486" y="250.73" font-size="6" fill="#211e1c" text-anchor="end" stroke="#211e1c" stroke-width="0.14" >60</text>
<path d="M474.2 201.2l4.6-2.7v5.4z" fill="#e4e1de" stroke="#4a4643" stroke-width="0.6" />
<rect x="447.1" y="260.1" width="4.7" height="1.9" fill="#f0a52c" />
<rect x="452.7" y="260.1" width="4.7" height="1.9" fill="#f0a52c" />
<rect x="458.3" y="260.1" width="4.7" height="1.9" fill="#f0a52c" />
<rect x="463.9" y="260.1" width="4.7" height="1.9" fill="#f0a52c" />
<rect x="469.5" y="260.1" width="4.7" height="1.9" fill="#f0a52c" />
<rect x="475.1" y="260.1" width="4.7" height="1.9" fill="#2b2826" />
<rect x="490.4" y="145.6" width="40.8" height="9.6" fill="#978d87" />
<rect x="490.4" y="156.3" width="40.8" height="19.9" fill="#9a918b" />
<rect x="490.4" y="177.4" width="40.8" height="77.6" fill="#9a918b" />
<rect x="490.4" y="256.2" width="40.8" height="9.6" fill="#9a918b" />
<rect x="492.6" y="147.9" width="5" height="5" fill="#4f4a47" />
<path d="M496.86 170.14A6.7 6.7 0 1 1 506.34 170.14" fill="none" stroke="#2b2826" stroke-width="1.4" />
<line x1="501.6" y1="165.4" x2="498.47" y2="171.55" stroke="#2b2826" stroke-width="1.4" />
<text x="501.6" y="174.45" font-size="5.2" fill="#2b2826" text-anchor="middle" stroke="#2b2826" stroke-width="0.14" >A</text>
<g clip-path="url(#cs5)"><text x="512.2" y="163.93" font-size="6" fill="#211e1c" font-weight="700" transform="translate(512.2 0) scale(0.9 1) translate(-512.2 0)" >Sends</text></g>
<defs><clipPath id="cs5"><rect x="490.4" y="150" width="40.8" height="30"/></clipPath></defs>
<rect x="492" y="180.5" width="19.2" height="6.4" fill="#e4e1de" rx="3.2" stroke="#4a4643" stroke-width="0.6" />
<text x="501.6" y="185.96" font-size="5.8" fill="#211e1c" text-anchor="middle" stroke="#211e1c" stroke-width="0.14" >-Inf</text>
<rect x="492.2" y="191" width="18.8" height="6.4" fill="#e4e1de" stroke="#4a4643" stroke-width="0.6" />
<text x="501.6" y="196.46" font-size="5.8" fill="#211e1c" text-anchor="middle" stroke="#211e1c" stroke-width="0.14" >-15.0</text>
<path d="M496.93 215.67A6.6 6.6 0 1 1 506.27 215.67" fill="none" stroke="#2b2826" stroke-width="1.4" />
<line x1="501.6" y1="211" x2="504.56" y2="204.66" stroke="#2b2826" stroke-width="1.4" />
<path d="M499.7 201.2h3.8l-1.9 2.2z" fill="#7fcbdb" />
<rect x="495.4" y="221.4" width="12.4" height="12.1" fill="#fbb02f" stroke="#8a5a10" stroke-width="0.6" />
<text x="501.6" y="230.33" font-size="7.4" fill="#211e1c" text-anchor="middle" font-weight="700" transform="translate(501.6 0) scale(0.9 1) translate(-501.6 0)" >22</text>
<rect x="495.4" y="236.4" width="12.4" height="6.9" fill="#cbc7c3" stroke="#4a4643" stroke-width="0.6" />
<text x="501.6" y="241.99" font-size="5.6" fill="#211e1c" text-anchor="middle" stroke="#211e1c" stroke-width="0.14" >S</text>
<rect x="495.4" y="246" width="12.4" height="6.4" fill="#cbc7c3" stroke="#4a4643" stroke-width="0.6" />
<circle cx="501.6" cy="249.2" r="1.5" fill="#1f1c1a" />
<rect x="515.4" y="180.2" width="6.4" height="72.2" fill="#6a6461" />
<rect x="515.6" y="180.6" width="2.7" height="71.6" fill="#1d1b19" />
<rect x="518.9" y="180.6" width="2.7" height="71.6" fill="#1d1b19" />
<line x1="523.2" y1="187.4" x2="525.2" y2="187.4" stroke="#45413e" stroke-width="0.85" />
<line x1="523.2" y1="194.9" x2="525.2" y2="194.9" stroke="#45413e" stroke-width="0.85" />
<line x1="523.2" y1="202.3" x2="525.2" y2="202.3" stroke="#45413e" stroke-width="0.85" />
<line x1="523.2" y1="209.5" x2="525.2" y2="209.5" stroke="#45413e" stroke-width="0.85" />
<line x1="523.2" y1="216.2" x2="525.2" y2="216.2" stroke="#45413e" stroke-width="0.85" />
<line x1="523.2" y1="223.1" x2="525.2" y2="223.1" stroke="#45413e" stroke-width="0.85" />
<line x1="523.2" y1="230" x2="525.2" y2="230" stroke="#45413e" stroke-width="0.85" />
<line x1="523.2" y1="240.3" x2="525.2" y2="240.3" stroke="#45413e" stroke-width="0.85" />
<line x1="523.2" y1="248.6" x2="525.2" y2="248.6" stroke="#45413e" stroke-width="0.85" />
<line x1="523.4" y1="180.8" x2="524.7" y2="180.8" stroke="#6f6965" stroke-width="0.6" />
<line x1="523.4" y1="184.2" x2="524.7" y2="184.2" stroke="#6f6965" stroke-width="0.6" />
<line x1="523.4" y1="191.2" x2="524.7" y2="191.2" stroke="#6f6965" stroke-width="0.6" />
<line x1="523.4" y1="198.6" x2="524.7" y2="198.6" stroke="#6f6965" stroke-width="0.6" />
<line x1="523.4" y1="205.9" x2="524.7" y2="205.9" stroke="#6f6965" stroke-width="0.6" />
<line x1="523.4" y1="212.9" x2="524.7" y2="212.9" stroke="#6f6965" stroke-width="0.6" />
<line x1="523.4" y1="219.6" x2="524.7" y2="219.6" stroke="#6f6965" stroke-width="0.6" />
<line x1="523.4" y1="226.5" x2="524.7" y2="226.5" stroke="#6f6965" stroke-width="0.6" />
<line x1="523.4" y1="235.2" x2="524.7" y2="235.2" stroke="#6f6965" stroke-width="0.6" />
<line x1="523.4" y1="244.4" x2="524.7" y2="244.4" stroke="#6f6965" stroke-width="0.6" />
<line x1="523.4" y1="251.8" x2="524.7" y2="251.8" stroke="#6f6965" stroke-width="0.6" />
<path d="M522.6 205.3l4.6-2.7v5.4z" fill="#e4e1de" stroke="#4a4643" stroke-width="0.6" />
<rect x="494.9" y="260.1" width="4.7" height="1.9" fill="#2b2826" />
<rect x="500.5" y="260.1" width="4.7" height="1.9" fill="#2b2826" />
<rect x="506.1" y="260.1" width="4.7" height="1.9" fill="#2b2826" />
<rect x="511.7" y="260.1" width="4.7" height="1.9" fill="#2b2826" />
<rect x="517.3" y="260.1" width="4.7" height="1.9" fill="#2b2826" />
<rect x="522.9" y="260.1" width="4.7" height="1.9" fill="#2b2826" />
<rect x="532.2" y="145.6" width="52.2" height="9.6" fill="#978d87" />
<rect x="532.2" y="156.3" width="52.2" height="19.9" fill="#9a918b" />
<rect x="532.2" y="177.4" width="52.2" height="77.6" fill="#9a918b" />
<rect x="532.2" y="256.2" width="52.2" height="9.6" fill="#9a918b" />
<rect x="534.4" y="147.9" width="5" height="5" fill="#4f4a47" />
<path d="M543.46 170.14A6.7 6.7 0 1 1 552.94 170.14" fill="none" stroke="#2b2826" stroke-width="1.4" />
<line x1="548.2" y1="165.4" x2="545.07" y2="171.55" stroke="#2b2826" stroke-width="1.4" />
<text x="548.2" y="174.45" font-size="5.2" fill="#2b2826" text-anchor="middle" stroke="#2b2826" stroke-width="0.14" >A</text>
<g clip-path="url(#cs6)"><text x="558.8" y="163.93" font-size="6" fill="#211e1c" font-weight="700" transform="translate(558.8 0) scale(0.9 1) translate(-558.8 0)" >Sends</text></g>
<defs><clipPath id="cs6"><rect x="532.2" y="150" width="52.2" height="30"/></clipPath></defs>
<rect x="538.6" y="180.5" width="19.2" height="6.4" fill="#e4e1de" rx="3.2" stroke="#4a4643" stroke-width="0.6" />
<text x="548.2" y="185.96" font-size="5.8" fill="#211e1c" text-anchor="middle" stroke="#211e1c" stroke-width="0.14" >-Inf</text>
<rect x="538.8" y="191" width="18.8" height="6.4" fill="#e4e1de" stroke="#4a4643" stroke-width="0.6" />
<text x="548.2" y="196.46" font-size="5.8" fill="#211e1c" text-anchor="middle" stroke="#211e1c" stroke-width="0.14" >0</text>
<path d="M543.53 215.67A6.6 6.6 0 1 1 552.87 215.67" fill="none" stroke="#2b2826" stroke-width="1.4" />
<line x1="548.2" y1="211" x2="548.2" y2="204" stroke="#2b2826" stroke-width="1.4" />
<path d="M546.3 201.2h3.8l-1.9 2.2z" fill="#2b2826" />
<rect x="542" y="221.4" width="12.4" height="12.1" fill="#fbb02f" stroke="#8a5a10" stroke-width="0.6" />
<text x="548.2" y="230.33" font-size="7.4" fill="#211e1c" text-anchor="middle" font-weight="700" transform="translate(548.2 0) scale(0.9 1) translate(-548.2 0)" >23</text>
<rect x="542" y="236.4" width="12.4" height="6.9" fill="#cbc7c3" stroke="#4a4643" stroke-width="0.6" />
<text x="548.2" y="241.99" font-size="5.6" fill="#211e1c" text-anchor="middle" stroke="#211e1c" stroke-width="0.14" >S</text>
<rect x="562" y="180.2" width="6.4" height="72.2" fill="#6a6461" />
<rect x="562.2" y="180.6" width="2.7" height="71.6" fill="#1d1b19" />
<rect x="565.5" y="180.6" width="2.7" height="71.6" fill="#1d1b19" />
<line x1="569.8" y1="187.4" x2="571.8" y2="187.4" stroke="#45413e" stroke-width="0.85" />
<line x1="569.8" y1="194.9" x2="571.8" y2="194.9" stroke="#45413e" stroke-width="0.85" />
<line x1="569.8" y1="202.3" x2="571.8" y2="202.3" stroke="#45413e" stroke-width="0.85" />
<line x1="569.8" y1="209.5" x2="571.8" y2="209.5" stroke="#45413e" stroke-width="0.85" />
<line x1="569.8" y1="216.2" x2="571.8" y2="216.2" stroke="#45413e" stroke-width="0.85" />
<line x1="569.8" y1="223.1" x2="571.8" y2="223.1" stroke="#45413e" stroke-width="0.85" />
<line x1="569.8" y1="230" x2="571.8" y2="230" stroke="#45413e" stroke-width="0.85" />
<line x1="569.8" y1="240.3" x2="571.8" y2="240.3" stroke="#45413e" stroke-width="0.85" />
<line x1="569.8" y1="248.6" x2="571.8" y2="248.6" stroke="#45413e" stroke-width="0.85" />
<line x1="570" y1="180.8" x2="571.3" y2="180.8" stroke="#6f6965" stroke-width="0.6" />
<line x1="570" y1="184.2" x2="571.3" y2="184.2" stroke="#6f6965" stroke-width="0.6" />
<line x1="570" y1="191.2" x2="571.3" y2="191.2" stroke="#6f6965" stroke-width="0.6" />
<line x1="570" y1="198.6" x2="571.3" y2="198.6" stroke="#6f6965" stroke-width="0.6" />
<line x1="570" y1="205.9" x2="571.3" y2="205.9" stroke="#6f6965" stroke-width="0.6" />
<line x1="570" y1="212.9" x2="571.3" y2="212.9" stroke="#6f6965" stroke-width="0.6" />
<line x1="570" y1="219.6" x2="571.3" y2="219.6" stroke="#6f6965" stroke-width="0.6" />
<line x1="570" y1="226.5" x2="571.3" y2="226.5" stroke="#6f6965" stroke-width="0.6" />
<line x1="570" y1="235.2" x2="571.3" y2="235.2" stroke="#6f6965" stroke-width="0.6" />
<line x1="570" y1="244.4" x2="571.3" y2="244.4" stroke="#6f6965" stroke-width="0.6" />
<line x1="570" y1="251.8" x2="571.3" y2="251.8" stroke="#6f6965" stroke-width="0.6" />
<text x="581" y="189.53" font-size="6" fill="#211e1c" text-anchor="end" stroke="#211e1c" stroke-width="0.14" >0</text>
<text x="581" y="197.03" font-size="6" fill="#211e1c" text-anchor="end" stroke="#211e1c" stroke-width="0.14" >6</text>
<text x="581" y="204.43" font-size="6" fill="#211e1c" text-anchor="end" stroke="#211e1c" stroke-width="0.14" >12</text>
<text x="581" y="211.63" font-size="6" fill="#211e1c" text-anchor="end" stroke="#211e1c" stroke-width="0.14" >18</text>
<text x="581" y="218.33" font-size="6" fill="#211e1c" text-anchor="end" stroke="#211e1c" stroke-width="0.14" >24</text>
<text x="581" y="225.23" font-size="6" fill="#211e1c" text-anchor="end" stroke="#211e1c" stroke-width="0.14" >30</text>
<text x="581" y="232.13" font-size="6" fill="#211e1c" text-anchor="end" stroke="#211e1c" stroke-width="0.14" >36</text>
<text x="581" y="242.43" font-size="6" fill="#211e1c" text-anchor="end" stroke="#211e1c" stroke-width="0.14" >48</text>
<text x="581" y="250.73" font-size="6" fill="#211e1c" text-anchor="end" stroke="#211e1c" stroke-width="0.14" >60</text>
<path d="M569.2 187.8l4.6-2.7v5.4z" fill="#e4e1de" stroke="#4a4643" stroke-width="0.6" />
<rect x="542.4" y="260.1" width="4.7" height="1.9" fill="#2b2826" />
<rect x="548" y="260.1" width="4.7" height="1.9" fill="#2b2826" />
<rect x="553.6" y="260.1" width="4.7" height="1.9" fill="#2b2826" />
<rect x="559.2" y="260.1" width="4.7" height="1.9" fill="#2b2826" />
<rect x="564.8" y="260.1" width="4.7" height="1.9" fill="#2b2826" />
<rect x="570.4" y="260.1" width="4.7" height="1.9" fill="#2b2826" />
<rect x="585.4" y="145.6" width="52.6" height="9.6" fill="#978d87" />
<rect x="585.4" y="156.3" width="52.6" height="19.9" fill="#9a918b" />
<rect x="585.4" y="177.4" width="52.6" height="77.6" fill="#9a918b" />
<rect x="585.4" y="256.2" width="52.6" height="9.6" fill="#9a918b" />
<rect x="587.6" y="147.9" width="5" height="5" fill="#4f4a47" />
<path d="M597.06 170.14A6.7 6.7 0 1 1 606.54 170.14" fill="none" stroke="#2b2826" stroke-width="1.4" />
<path d="M597.06 170.14A6.7 6.7 0 1 1 606.54 170.14" fill="none" stroke="#8fd3df" stroke-width="1.7" />
<line x1="601.8" y1="165.4" x2="605.46" y2="171.25" stroke="#2b2826" stroke-width="1.4" />
<text x="601.8" y="174.45" font-size="5.2" fill="#2b2826" text-anchor="middle" stroke="#2b2826" stroke-width="0.14" >A</text>
<g clip-path="url(#cs7)"><text x="612.4" y="163.93" font-size="6" fill="#211e1c" font-weight="700" transform="translate(612.4 0) scale(0.9 1) translate(-612.4 0)" >Sends</text></g>
<defs><clipPath id="cs7"><rect x="585.4" y="150" width="52.6" height="30"/></clipPath></defs>
<rect x="592.2" y="180.5" width="19.2" height="6.4" fill="#e4e1de" rx="3.2" stroke="#4a4643" stroke-width="0.6" />
<text x="601.8" y="185.96" font-size="5.8" fill="#211e1c" text-anchor="middle" stroke="#211e1c" stroke-width="0.14" >-Inf</text>
<rect x="592.4" y="191" width="18.8" height="6.4" fill="#e4e1de" stroke="#4a4643" stroke-width="0.6" />
<text x="601.8" y="196.46" font-size="5.8" fill="#211e1c" text-anchor="middle" stroke="#211e1c" stroke-width="0.14" >-18.9</text>
<path d="M597.13 215.67A6.6 6.6 0 1 1 606.47 215.67" fill="none" stroke="#2b2826" stroke-width="1.4" />
<line x1="601.8" y1="211" x2="604.76" y2="204.66" stroke="#2b2826" stroke-width="1.4" />
<path d="M599.9 201.2h3.8l-1.9 2.2z" fill="#7fcbdb" />
<rect x="595.6" y="221.4" width="12.4" height="12.1" fill="#fbb02f" stroke="#8a5a10" stroke-width="0.6" />
<text x="601.8" y="230.33" font-size="7.4" fill="#211e1c" text-anchor="middle" font-weight="700" transform="translate(601.8 0) scale(0.9 1) translate(-601.8 0)" >24</text>
<rect x="595.6" y="236.4" width="12.4" height="6.9" fill="#cbc7c3" stroke="#4a4643" stroke-width="0.6" />
<text x="601.8" y="241.99" font-size="5.6" fill="#211e1c" text-anchor="middle" stroke="#211e1c" stroke-width="0.14" >S</text>
<rect x="595.6" y="246" width="12.4" height="6.4" fill="#cbc7c3" stroke="#4a4643" stroke-width="0.6" />
<circle cx="601.8" cy="249.2" r="1.5" fill="#1f1c1a" />
<rect x="615.6" y="180.2" width="6.4" height="72.2" fill="#6a6461" />
<rect x="615.8" y="180.6" width="2.7" height="71.6" fill="#1d1b19" />
<rect x="619.1" y="180.6" width="2.7" height="71.6" fill="#1d1b19" />
<line x1="623.4" y1="187.4" x2="625.4" y2="187.4" stroke="#45413e" stroke-width="0.85" />
<line x1="623.4" y1="194.9" x2="625.4" y2="194.9" stroke="#45413e" stroke-width="0.85" />
<line x1="623.4" y1="202.3" x2="625.4" y2="202.3" stroke="#45413e" stroke-width="0.85" />
<line x1="623.4" y1="209.5" x2="625.4" y2="209.5" stroke="#45413e" stroke-width="0.85" />
<line x1="623.4" y1="216.2" x2="625.4" y2="216.2" stroke="#45413e" stroke-width="0.85" />
<line x1="623.4" y1="223.1" x2="625.4" y2="223.1" stroke="#45413e" stroke-width="0.85" />
<line x1="623.4" y1="230" x2="625.4" y2="230" stroke="#45413e" stroke-width="0.85" />
<line x1="623.4" y1="240.3" x2="625.4" y2="240.3" stroke="#45413e" stroke-width="0.85" />
<line x1="623.4" y1="248.6" x2="625.4" y2="248.6" stroke="#45413e" stroke-width="0.85" />
<line x1="623.6" y1="180.8" x2="624.9" y2="180.8" stroke="#6f6965" stroke-width="0.6" />
<line x1="623.6" y1="184.2" x2="624.9" y2="184.2" stroke="#6f6965" stroke-width="0.6" />
<line x1="623.6" y1="191.2" x2="624.9" y2="191.2" stroke="#6f6965" stroke-width="0.6" />
<line x1="623.6" y1="198.6" x2="624.9" y2="198.6" stroke="#6f6965" stroke-width="0.6" />
<line x1="623.6" y1="205.9" x2="624.9" y2="205.9" stroke="#6f6965" stroke-width="0.6" />
<line x1="623.6" y1="212.9" x2="624.9" y2="212.9" stroke="#6f6965" stroke-width="0.6" />
<line x1="623.6" y1="219.6" x2="624.9" y2="219.6" stroke="#6f6965" stroke-width="0.6" />
<line x1="623.6" y1="226.5" x2="624.9" y2="226.5" stroke="#6f6965" stroke-width="0.6" />
<line x1="623.6" y1="235.2" x2="624.9" y2="235.2" stroke="#6f6965" stroke-width="0.6" />
<line x1="623.6" y1="244.4" x2="624.9" y2="244.4" stroke="#6f6965" stroke-width="0.6" />
<line x1="623.6" y1="251.8" x2="624.9" y2="251.8" stroke="#6f6965" stroke-width="0.6" />
<text x="634.6" y="189.53" font-size="6" fill="#211e1c" text-anchor="end" stroke="#211e1c" stroke-width="0.14" >0</text>
<text x="634.6" y="197.03" font-size="6" fill="#211e1c" text-anchor="end" stroke="#211e1c" stroke-width="0.14" >6</text>
<text x="634.6" y="204.43" font-size="6" fill="#211e1c" text-anchor="end" stroke="#211e1c" stroke-width="0.14" >12</text>
<text x="634.6" y="211.63" font-size="6" fill="#211e1c" text-anchor="end" stroke="#211e1c" stroke-width="0.14" >18</text>
<text x="634.6" y="218.33" font-size="6" fill="#211e1c" text-anchor="end" stroke="#211e1c" stroke-width="0.14" >24</text>
<text x="634.6" y="225.23" font-size="6" fill="#211e1c" text-anchor="end" stroke="#211e1c" stroke-width="0.14" >30</text>
<text x="634.6" y="232.13" font-size="6" fill="#211e1c" text-anchor="end" stroke="#211e1c" stroke-width="0.14" >36</text>
<text x="634.6" y="242.43" font-size="6" fill="#211e1c" text-anchor="end" stroke="#211e1c" stroke-width="0.14" >48</text>
<text x="634.6" y="250.73" font-size="6" fill="#211e1c" text-anchor="end" stroke="#211e1c" stroke-width="0.14" >60</text>
<path d="M622.8 209.7l4.6-2.7v5.4z" fill="#e4e1de" stroke="#4a4643" stroke-width="0.6" />
<rect x="595.8" y="260.1" width="4.7" height="1.9" fill="#2b2826" />
<rect x="601.4" y="260.1" width="4.7" height="1.9" fill="#2b2826" />
<rect x="607" y="260.1" width="4.7" height="1.9" fill="#2b2826" />
<rect x="612.6" y="260.1" width="4.7" height="1.9" fill="#2b2826" />
<rect x="618.2" y="260.1" width="4.7" height="1.9" fill="#2b2826" />
<rect x="623.8" y="260.1" width="4.7" height="1.9" fill="#2b2826" />
<rect x="639" y="145.6" width="52.8" height="9.6" fill="#978d87" />
<rect x="639" y="156.3" width="52.8" height="19.9" fill="#9a918b" />
<rect x="639" y="177.4" width="52.8" height="77.6" fill="#9a918b" />
<rect x="639" y="256.2" width="52.8" height="9.6" fill="#9a918b" />
<rect x="641.2" y="147.9" width="5" height="5" fill="#4f4a47" />
<path d="M650.86 170.14A6.7 6.7 0 1 1 660.34 170.14" fill="none" stroke="#2b2826" stroke-width="1.4" />
<path d="M650.86 170.14A6.7 6.7 0 1 1 660.34 170.14" fill="none" stroke="#8fd3df" stroke-width="1.7" />
<line x1="655.6" y1="165.4" x2="659.26" y2="171.25" stroke="#2b2826" stroke-width="1.4" />
<text x="655.6" y="174.45" font-size="5.2" fill="#2b2826" text-anchor="middle" stroke="#2b2826" stroke-width="0.14" >A</text>
<g clip-path="url(#cs8)"><text x="666.2" y="163.93" font-size="6" fill="#211e1c" font-weight="700" transform="translate(666.2 0) scale(0.9 1) translate(-666.2 0)" >Sends</text></g>
<defs><clipPath id="cs8"><rect x="639" y="150" width="52.8" height="30"/></clipPath></defs>
<rect x="646" y="180.5" width="19.2" height="6.4" fill="#e4e1de" rx="3.2" stroke="#4a4643" stroke-width="0.6" />
<text x="655.6" y="185.96" font-size="5.8" fill="#211e1c" text-anchor="middle" stroke="#211e1c" stroke-width="0.14" >-Inf</text>
<rect x="646.2" y="191" width="18.8" height="6.4" fill="#e4e1de" stroke="#4a4643" stroke-width="0.6" />
<text x="655.6" y="196.46" font-size="5.8" fill="#211e1c" text-anchor="middle" stroke="#211e1c" stroke-width="0.14" >-18.0</text>
<path d="M650.93 215.67A6.6 6.6 0 1 1 660.27 215.67" fill="none" stroke="#2b2826" stroke-width="1.4" />
<line x1="655.6" y1="211" x2="652.64" y2="204.66" stroke="#2b2826" stroke-width="1.4" />
<path d="M653.7 201.2h3.8l-1.9 2.2z" fill="#7fcbdb" />
<rect x="649.4" y="221.4" width="12.4" height="12.1" fill="#fbb02f" stroke="#8a5a10" stroke-width="0.6" />
<text x="655.6" y="230.33" font-size="7.4" fill="#211e1c" text-anchor="middle" font-weight="700" transform="translate(655.6 0) scale(0.9 1) translate(-655.6 0)" >25</text>
<rect x="649.4" y="236.4" width="12.4" height="6.9" fill="#cbc7c3" stroke="#4a4643" stroke-width="0.6" />
<text x="655.6" y="241.99" font-size="5.6" fill="#211e1c" text-anchor="middle" stroke="#211e1c" stroke-width="0.14" >S</text>
<rect x="649.4" y="246" width="12.4" height="6.4" fill="#cbc7c3" stroke="#4a4643" stroke-width="0.6" />
<circle cx="655.6" cy="249.2" r="1.5" fill="#1f1c1a" />
<rect x="669.4" y="180.2" width="6.4" height="72.2" fill="#6a6461" />
<rect x="669.6" y="180.6" width="2.7" height="71.6" fill="#1d1b19" />
<rect x="672.9" y="180.6" width="2.7" height="71.6" fill="#1d1b19" />
<line x1="677.2" y1="187.4" x2="679.2" y2="187.4" stroke="#45413e" stroke-width="0.85" />
<line x1="677.2" y1="194.9" x2="679.2" y2="194.9" stroke="#45413e" stroke-width="0.85" />
<line x1="677.2" y1="202.3" x2="679.2" y2="202.3" stroke="#45413e" stroke-width="0.85" />
<line x1="677.2" y1="209.5" x2="679.2" y2="209.5" stroke="#45413e" stroke-width="0.85" />
<line x1="677.2" y1="216.2" x2="679.2" y2="216.2" stroke="#45413e" stroke-width="0.85" />
<line x1="677.2" y1="223.1" x2="679.2" y2="223.1" stroke="#45413e" stroke-width="0.85" />
<line x1="677.2" y1="230" x2="679.2" y2="230" stroke="#45413e" stroke-width="0.85" />
<line x1="677.2" y1="240.3" x2="679.2" y2="240.3" stroke="#45413e" stroke-width="0.85" />
<line x1="677.2" y1="248.6" x2="679.2" y2="248.6" stroke="#45413e" stroke-width="0.85" />
<line x1="677.4" y1="180.8" x2="678.7" y2="180.8" stroke="#6f6965" stroke-width="0.6" />
<line x1="677.4" y1="184.2" x2="678.7" y2="184.2" stroke="#6f6965" stroke-width="0.6" />
<line x1="677.4" y1="191.2" x2="678.7" y2="191.2" stroke="#6f6965" stroke-width="0.6" />
<line x1="677.4" y1="198.6" x2="678.7" y2="198.6" stroke="#6f6965" stroke-width="0.6" />
<line x1="677.4" y1="205.9" x2="678.7" y2="205.9" stroke="#6f6965" stroke-width="0.6" />
<line x1="677.4" y1="212.9" x2="678.7" y2="212.9" stroke="#6f6965" stroke-width="0.6" />
<line x1="677.4" y1="219.6" x2="678.7" y2="219.6" stroke="#6f6965" stroke-width="0.6" />
<line x1="677.4" y1="226.5" x2="678.7" y2="226.5" stroke="#6f6965" stroke-width="0.6" />
<line x1="677.4" y1="235.2" x2="678.7" y2="235.2" stroke="#6f6965" stroke-width="0.6" />
<line x1="677.4" y1="244.4" x2="678.7" y2="244.4" stroke="#6f6965" stroke-width="0.6" />
<line x1="677.4" y1="251.8" x2="678.7" y2="251.8" stroke="#6f6965" stroke-width="0.6" />
<text x="688.4" y="189.53" font-size="6" fill="#211e1c" text-anchor="end" stroke="#211e1c" stroke-width="0.14" >0</text>
<text x="688.4" y="197.03" font-size="6" fill="#211e1c" text-anchor="end" stroke="#211e1c" stroke-width="0.14" >6</text>
<text x="688.4" y="204.43" font-size="6" fill="#211e1c" text-anchor="end" stroke="#211e1c" stroke-width="0.14" >12</text>
<text x="688.4" y="211.63" font-size="6" fill="#211e1c" text-anchor="end" stroke="#211e1c" stroke-width="0.14" >18</text>
<text x="688.4" y="218.33" font-size="6" fill="#211e1c" text-anchor="end" stroke="#211e1c" stroke-width="0.14" >24</text>
<text x="688.4" y="225.23" font-size="6" fill="#211e1c" text-anchor="end" stroke="#211e1c" stroke-width="0.14" >30</text>
<text x="688.4" y="232.13" font-size="6" fill="#211e1c" text-anchor="end" stroke="#211e1c" stroke-width="0.14" >36</text>
<text x="688.4" y="242.43" font-size="6" fill="#211e1c" text-anchor="end" stroke="#211e1c" stroke-width="0.14" >48</text>
<text x="688.4" y="250.73" font-size="6" fill="#211e1c" text-anchor="end" stroke="#211e1c" stroke-width="0.14" >60</text>
<path d="M676.6 209.2l4.6-2.7v5.4z" fill="#e4e1de" stroke="#4a4643" stroke-width="0.6" />
<rect x="649.5" y="260.1" width="4.7" height="1.9" fill="#2b2826" />
<rect x="655.1" y="260.1" width="4.7" height="1.9" fill="#2b2826" />
<rect x="660.7" y="260.1" width="4.7" height="1.9" fill="#2b2826" />
<rect x="666.3" y="260.1" width="4.7" height="1.9" fill="#2b2826" />
<rect x="671.9" y="260.1" width="4.7" height="1.9" fill="#2b2826" />
<rect x="677.5" y="260.1" width="4.7" height="1.9" fill="#2b2826" />
<rect x="692.8" y="145.6" width="35.2" height="9.6" fill="#978d87" />
<rect x="692.8" y="156.3" width="35.2" height="19.9" fill="#9a918b" />
<rect x="692.8" y="177.4" width="35.2" height="77.6" fill="#9a918b" />
<rect x="692.8" y="256.2" width="35.2" height="9.6" fill="#9a918b" />
<rect x="695" y="147.9" width="5" height="5" fill="#4f4a47" />
<path d="M700.06 170.14A6.7 6.7 0 1 1 709.54 170.14" fill="none" stroke="#2b2826" stroke-width="1.4" />
<line x1="704.8" y1="165.4" x2="701.67" y2="171.55" stroke="#2b2826" stroke-width="1.4" />
<text x="704.8" y="174.45" font-size="5.2" fill="#2b2826" text-anchor="middle" stroke="#2b2826" stroke-width="0.14" >A</text>
<g clip-path="url(#cs9)"><text x="715.4" y="163.93" font-size="6" fill="#211e1c" font-weight="700" transform="translate(715.4 0) scale(0.9 1) translate(-715.4 0)" >Sends</text></g>
<defs><clipPath id="cs9"><rect x="692.8" y="150" width="35.2" height="30"/></clipPath></defs>
<rect x="695.2" y="180.5" width="19.2" height="6.4" fill="#e4e1de" rx="3.2" stroke="#4a4643" stroke-width="0.6" />
<text x="704.8" y="185.96" font-size="5.8" fill="#211e1c" text-anchor="middle" stroke="#211e1c" stroke-width="0.14" >-Inf</text>
<rect x="695.4" y="191" width="18.8" height="6.4" fill="#e4e1de" stroke="#4a4643" stroke-width="0.6" />
<text x="704.8" y="196.46" font-size="5.8" fill="#211e1c" text-anchor="middle" stroke="#211e1c" stroke-width="0.14" >0</text>
<path d="M700.13 215.67A6.6 6.6 0 1 1 709.47 215.67" fill="none" stroke="#2b2826" stroke-width="1.4" />
<line x1="704.8" y1="211" x2="704.8" y2="204" stroke="#2b2826" stroke-width="1.4" />
<path d="M702.9 201.2h3.8l-1.9 2.2z" fill="#2b2826" />
<rect x="698.6" y="221.4" width="12.4" height="12.1" fill="#fbb02f" stroke="#8a5a10" stroke-width="0.6" />
<text x="704.8" y="230.33" font-size="7.4" fill="#211e1c" text-anchor="middle" font-weight="700" transform="translate(704.8 0) scale(0.9 1) translate(-704.8 0)" >26</text>
<rect x="698.6" y="236.4" width="12.4" height="6.9" fill="#cbc7c3" stroke="#4a4643" stroke-width="0.6" />
<text x="704.8" y="241.99" font-size="5.6" fill="#211e1c" text-anchor="middle" stroke="#211e1c" stroke-width="0.14" >S</text>
<rect x="698.6" y="246" width="12.4" height="6.4" fill="#cbc7c3" stroke="#4a4643" stroke-width="0.6" />
<circle cx="704.8" cy="249.2" r="1.5" fill="#1f1c1a" />
<rect x="718.6" y="180.2" width="6.4" height="72.2" fill="#6a6461" />
<rect x="718.8" y="180.6" width="2.7" height="71.6" fill="#1d1b19" />
<rect x="722.1" y="180.6" width="2.7" height="71.6" fill="#1d1b19" />
<line x1="726.4" y1="187.4" x2="728.4" y2="187.4" stroke="#45413e" stroke-width="0.85" />
<line x1="726.4" y1="194.9" x2="728.4" y2="194.9" stroke="#45413e" stroke-width="0.85" />
<line x1="726.4" y1="202.3" x2="728.4" y2="202.3" stroke="#45413e" stroke-width="0.85" />
<line x1="726.4" y1="209.5" x2="728.4" y2="209.5" stroke="#45413e" stroke-width="0.85" />
<line x1="726.4" y1="216.2" x2="728.4" y2="216.2" stroke="#45413e" stroke-width="0.85" />
<line x1="726.4" y1="223.1" x2="728.4" y2="223.1" stroke="#45413e" stroke-width="0.85" />
<line x1="726.4" y1="230" x2="728.4" y2="230" stroke="#45413e" stroke-width="0.85" />
<line x1="726.4" y1="240.3" x2="728.4" y2="240.3" stroke="#45413e" stroke-width="0.85" />
<line x1="726.4" y1="248.6" x2="728.4" y2="248.6" stroke="#45413e" stroke-width="0.85" />
<line x1="726.6" y1="180.8" x2="727.9" y2="180.8" stroke="#6f6965" stroke-width="0.6" />
<line x1="726.6" y1="184.2" x2="727.9" y2="184.2" stroke="#6f6965" stroke-width="0.6" />
<line x1="726.6" y1="191.2" x2="727.9" y2="191.2" stroke="#6f6965" stroke-width="0.6" />
<line x1="726.6" y1="198.6" x2="727.9" y2="198.6" stroke="#6f6965" stroke-width="0.6" />
<line x1="726.6" y1="205.9" x2="727.9" y2="205.9" stroke="#6f6965" stroke-width="0.6" />
<line x1="726.6" y1="212.9" x2="727.9" y2="212.9" stroke="#6f6965" stroke-width="0.6" />
<line x1="726.6" y1="219.6" x2="727.9" y2="219.6" stroke="#6f6965" stroke-width="0.6" />
<line x1="726.6" y1="226.5" x2="727.9" y2="226.5" stroke="#6f6965" stroke-width="0.6" />
<line x1="726.6" y1="235.2" x2="727.9" y2="235.2" stroke="#6f6965" stroke-width="0.6" />
<line x1="726.6" y1="244.4" x2="727.9" y2="244.4" stroke="#6f6965" stroke-width="0.6" />
<line x1="726.6" y1="251.8" x2="727.9" y2="251.8" stroke="#6f6965" stroke-width="0.6" />
<path d="M725.8 187.8l4.6-2.7v5.4z" fill="#e4e1de" stroke="#4a4643" stroke-width="0.6" />
<rect x="694.5" y="260.1" width="4.7" height="1.9" fill="#2b2826" />
<rect x="700.1" y="260.1" width="4.7" height="1.9" fill="#2b2826" />
<rect x="705.7" y="260.1" width="4.7" height="1.9" fill="#2b2826" />
<rect x="711.3" y="260.1" width="4.7" height="1.9" fill="#2b2826" />
<rect x="716.9" y="260.1" width="4.7" height="1.9" fill="#2b2826" />
<rect x="722.5" y="260.1" width="4.7" height="1.9" fill="#2b2826" />
<rect x="729" y="145.6" width="53.2" height="9.6" fill="#978d87" />
<rect x="729" y="156.3" width="53.2" height="19.9" fill="#9a918b" />
<rect x="729" y="177.4" width="53.2" height="77.6" fill="#9a918b" />
<rect x="729" y="256.2" width="53.2" height="9.6" fill="#9a918b" />
<path d="M741.26 170.14A6.7 6.7 0 1 1 750.74 170.14" fill="none" stroke="#77716d" stroke-width="1.4" />
<line x1="746" y1="165.4" x2="742.87" y2="171.55" stroke="#77716d" stroke-width="1.4" />
<text x="746" y="174.45" font-size="5.2" fill="#6b6561" text-anchor="middle" stroke="#6b6561" stroke-width="0.14" >A</text>
<g clip-path="url(#cs10)"><text x="756.6" y="163.93" font-size="6" fill="#211e1c" font-weight="700" transform="translate(756.6 0) scale(0.9 1) translate(-756.6 0)" >Sends</text></g>
<defs><clipPath id="cs10"><rect x="729" y="150" width="53.2" height="30"/></clipPath></defs>
<rect x="736.4" y="180.5" width="19.2" height="6.4" fill="#e4e1de" rx="3.2" stroke="#4a4643" stroke-width="0.6" />
<text x="746" y="185.96" font-size="5.8" fill="#211e1c" text-anchor="middle" stroke="#211e1c" stroke-width="0.14" >-Inf</text>
<rect x="736.6" y="191" width="18.8" height="6.4" fill="#e4e1de" stroke="#4a4643" stroke-width="0.6" />
<text x="746" y="196.46" font-size="5.8" fill="#211e1c" text-anchor="middle" stroke="#211e1c" stroke-width="0.14" >0</text>
<path d="M741.33 215.67A6.6 6.6 0 1 1 750.67 215.67" fill="none" stroke="#2b2826" stroke-width="1.4" />
<line x1="746" y1="211" x2="746" y2="204" stroke="#2b2826" stroke-width="1.4" />
<path d="M744.1 201.2h3.8l-1.9 2.2z" fill="#2b2826" />
<rect x="739.8" y="221.4" width="12.4" height="12.1" fill="#fbb02f" stroke="#8a5a10" stroke-width="0.6" />
<text x="746" y="230.33" font-size="7.4" fill="#211e1c" text-anchor="middle" font-weight="700" transform="translate(746 0) scale(0.9 1) translate(-746 0)" >A</text>
<rect x="739.8" y="236.4" width="12.4" height="6.9" fill="#cbc7c3" stroke="#4a4643" stroke-width="0.6" />
<text x="746" y="241.99" font-size="5.6" fill="#211e1c" text-anchor="middle" stroke="#211e1c" stroke-width="0.14" >S</text>
<rect x="759.8" y="180.2" width="6.4" height="72.2" fill="#6a6461" />
<rect x="760" y="180.6" width="2.7" height="71.6" fill="#1d1b19" />
<rect x="763.3" y="180.6" width="2.7" height="71.6" fill="#1d1b19" />
<line x1="767.6" y1="187.4" x2="769.6" y2="187.4" stroke="#45413e" stroke-width="0.85" />
<line x1="767.6" y1="194.9" x2="769.6" y2="194.9" stroke="#45413e" stroke-width="0.85" />
<line x1="767.6" y1="202.3" x2="769.6" y2="202.3" stroke="#45413e" stroke-width="0.85" />
<line x1="767.6" y1="209.5" x2="769.6" y2="209.5" stroke="#45413e" stroke-width="0.85" />
<line x1="767.6" y1="216.2" x2="769.6" y2="216.2" stroke="#45413e" stroke-width="0.85" />
<line x1="767.6" y1="223.1" x2="769.6" y2="223.1" stroke="#45413e" stroke-width="0.85" />
<line x1="767.6" y1="230" x2="769.6" y2="230" stroke="#45413e" stroke-width="0.85" />
<line x1="767.6" y1="240.3" x2="769.6" y2="240.3" stroke="#45413e" stroke-width="0.85" />
<line x1="767.6" y1="248.6" x2="769.6" y2="248.6" stroke="#45413e" stroke-width="0.85" />
<line x1="767.8" y1="180.8" x2="769.1" y2="180.8" stroke="#6f6965" stroke-width="0.6" />
<line x1="767.8" y1="184.2" x2="769.1" y2="184.2" stroke="#6f6965" stroke-width="0.6" />
<line x1="767.8" y1="191.2" x2="769.1" y2="191.2" stroke="#6f6965" stroke-width="0.6" />
<line x1="767.8" y1="198.6" x2="769.1" y2="198.6" stroke="#6f6965" stroke-width="0.6" />
<line x1="767.8" y1="205.9" x2="769.1" y2="205.9" stroke="#6f6965" stroke-width="0.6" />
<line x1="767.8" y1="212.9" x2="769.1" y2="212.9" stroke="#6f6965" stroke-width="0.6" />
<line x1="767.8" y1="219.6" x2="769.1" y2="219.6" stroke="#6f6965" stroke-width="0.6" />
<line x1="767.8" y1="226.5" x2="769.1" y2="226.5" stroke="#6f6965" stroke-width="0.6" />
<line x1="767.8" y1="235.2" x2="769.1" y2="235.2" stroke="#6f6965" stroke-width="0.6" />
<line x1="767.8" y1="244.4" x2="769.1" y2="244.4" stroke="#6f6965" stroke-width="0.6" />
<line x1="767.8" y1="251.8" x2="769.1" y2="251.8" stroke="#6f6965" stroke-width="0.6" />
<text x="778.8" y="189.53" font-size="6" fill="#211e1c" text-anchor="end" stroke="#211e1c" stroke-width="0.14" >0</text>
<text x="778.8" y="197.03" font-size="6" fill="#211e1c" text-anchor="end" stroke="#211e1c" stroke-width="0.14" >6</text>
<text x="778.8" y="204.43" font-size="6" fill="#211e1c" text-anchor="end" stroke="#211e1c" stroke-width="0.14" >12</text>
<text x="778.8" y="211.63" font-size="6" fill="#211e1c" text-anchor="end" stroke="#211e1c" stroke-width="0.14" >18</text>
<text x="778.8" y="218.33" font-size="6" fill="#211e1c" text-anchor="end" stroke="#211e1c" stroke-width="0.14" >24</text>
<text x="778.8" y="225.23" font-size="6" fill="#211e1c" text-anchor="end" stroke="#211e1c" stroke-width="0.14" >30</text>
<text x="778.8" y="232.13" font-size="6" fill="#211e1c" text-anchor="end" stroke="#211e1c" stroke-width="0.14" >36</text>
<text x="778.8" y="242.43" font-size="6" fill="#211e1c" text-anchor="end" stroke="#211e1c" stroke-width="0.14" >48</text>
<text x="778.8" y="250.73" font-size="6" fill="#211e1c" text-anchor="end" stroke="#211e1c" stroke-width="0.14" >60</text>
<path d="M767 187.8l4.6-2.7v5.4z" fill="#e4e1de" stroke="#4a4643" stroke-width="0.6" />
<rect x="739.7" y="260.1" width="4.7" height="1.9" fill="#6a5630" />
<rect x="745.3" y="260.1" width="4.7" height="1.9" fill="#2b2826" />
<rect x="750.9" y="260.1" width="4.7" height="1.9" fill="#2b2826" />
<rect x="756.5" y="260.1" width="4.7" height="1.9" fill="#2b2826" />
<rect x="762.1" y="260.1" width="4.7" height="1.9" fill="#2b2826" />
<rect x="767.7" y="260.1" width="4.7" height="1.9" fill="#2b2826" />
<rect x="783.2" y="145.6" width="52.2" height="9.6" fill="#978d87" />
<rect x="783.2" y="156.3" width="52.2" height="19.9" fill="#9a918b" />
<rect x="783.2" y="177.4" width="52.2" height="77.6" fill="#9a918b" />
<rect x="783.2" y="256.2" width="52.2" height="9.6" fill="#9a918b" />
<rect x="785.4" y="147.9" width="5" height="5" fill="#4f4a47" />
<rect x="813.4" y="147.2" width="7" height="6.3" fill="#fbb02f" stroke="#6a4a10" stroke-width="0.6" />
<path d="M815.2 148.1l3.8 2.25l-3.8 2.25z" fill="#2b2826" />
<rect x="821.8" y="147.2" width="11.2" height="6.3" fill="#f47b2a" stroke="#6a3010" stroke-width="0.6" />
<path d="M823.4 148.1l3.8 2.25l-3.8 2.25z" fill="#2b2826" />
<rect x="828.4" y="148.8" width="2.2" height="3.2" fill="#2b2826" />
<line x1="786" y1="166.2" x2="792" y2="166.2" stroke="#bdb8b4" stroke-width="0.6" />
<rect x="792" y="163" width="13.4" height="6.6" fill="#fbb02f" stroke="#6a4a10" stroke-width="0.5" />
<text x="798.7" y="168.03" font-size="6" fill="#4a3208" text-anchor="middle" stroke="#4a3208" stroke-width="0.14" >Post</text>
<text x="810.2" y="163.93" font-size="6" fill="#211e1c" font-weight="700" transform="translate(810.2 0) scale(0.9 1) translate(-810.2 0)" >Sends</text>
<rect x="789.6" y="180.5" width="19.2" height="6.4" fill="#e4e1de" rx="3.2" stroke="#4a4643" stroke-width="0.6" />
<text x="799.2" y="185.96" font-size="5.8" fill="#211e1c" text-anchor="middle" stroke="#211e1c" stroke-width="0.14" >-7.91</text>
<rect x="789.8" y="191" width="18.8" height="6.4" fill="#e4e1de" stroke="#4a4643" stroke-width="0.6" />
<text x="799.2" y="196.46" font-size="5.8" fill="#211e1c" text-anchor="middle" stroke="#211e1c" stroke-width="0.14" >0</text>
<path d="M794.53 215.67A6.6 6.6 0 1 1 803.87 215.67" fill="none" stroke="#2b2826" stroke-width="1.4" />
<line x1="799.2" y1="211" x2="799.2" y2="204" stroke="#2b2826" stroke-width="1.4" />
<path d="M797.3 201.2h3.8l-1.9 2.2z" fill="#2b2826" />
<rect x="792" y="226.8" width="13.2" height="6.2" fill="#d8d5d2" stroke="#4a4643" stroke-width="0.6" />
<text x="798.6" y="231.99" font-size="5.6" fill="#211e1c" text-anchor="middle" stroke="#211e1c" stroke-width="0.14" >Solo</text>
<path d="M794.82 247.98A6.2 6.2 0 1 1 803.58 247.98" fill="none" stroke="#5a63b8" stroke-width="1.1" />
<path d="M800.8 237.61A6.2 6.2 0 0 1 803.58 247.98" fill="none" stroke="#2b2826" stroke-width="1.25" />
<line x1="799.2" y1="243.6" x2="800.86" y2="237.42" stroke="#2b2826" stroke-width="1.2" />
<path d="M797.6 249.4a1.6 1.6 0 0 1 3.2 0" fill="none" stroke="#2b2826" stroke-width="0.7" />
<rect x="813" y="180.2" width="6.4" height="72.2" fill="#6a6461" />
<rect x="813.2" y="214" width="6" height="38.2" fill="url(#mg)" />
<rect x="813.2" y="180.6" width="2.7" height="71.6" fill="#1d1b19" />
<rect x="813.2" y="203.7" width="2.7" height="8.8" fill="#5f923c" />
<rect x="813.2" y="212.5" width="2.7" height="39.7" fill="url(#mg)" />
<rect x="816.5" y="180.6" width="2.7" height="71.6" fill="#1d1b19" />
<rect x="816.5" y="207" width="2.7" height="7" fill="#5f923c" />
<rect x="816.5" y="214" width="2.7" height="38.2" fill="url(#mg)" />
<line x1="813" y1="194.9" x2="819.4" y2="194.9" stroke="#4a4643" stroke-width="0.5" />
<line x1="820.8" y1="187.4" x2="822.8" y2="187.4" stroke="#45413e" stroke-width="0.85" />
<line x1="820.8" y1="194.9" x2="822.8" y2="194.9" stroke="#45413e" stroke-width="0.85" />
<line x1="820.8" y1="202.3" x2="822.8" y2="202.3" stroke="#45413e" stroke-width="0.85" />
<line x1="820.8" y1="209.5" x2="822.8" y2="209.5" stroke="#45413e" stroke-width="0.85" />
<line x1="820.8" y1="216.2" x2="822.8" y2="216.2" stroke="#45413e" stroke-width="0.85" />
<line x1="820.8" y1="223.1" x2="822.8" y2="223.1" stroke="#45413e" stroke-width="0.85" />
<line x1="820.8" y1="230" x2="822.8" y2="230" stroke="#45413e" stroke-width="0.85" />
<line x1="820.8" y1="240.3" x2="822.8" y2="240.3" stroke="#45413e" stroke-width="0.85" />
<line x1="820.8" y1="248.6" x2="822.8" y2="248.6" stroke="#45413e" stroke-width="0.85" />
<line x1="821" y1="180.8" x2="822.3" y2="180.8" stroke="#6f6965" stroke-width="0.6" />
<line x1="821" y1="184.2" x2="822.3" y2="184.2" stroke="#6f6965" stroke-width="0.6" />
<line x1="821" y1="191.2" x2="822.3" y2="191.2" stroke="#6f6965" stroke-width="0.6" />
<line x1="821" y1="198.6" x2="822.3" y2="198.6" stroke="#6f6965" stroke-width="0.6" />
<line x1="821" y1="205.9" x2="822.3" y2="205.9" stroke="#6f6965" stroke-width="0.6" />
<line x1="821" y1="212.9" x2="822.3" y2="212.9" stroke="#6f6965" stroke-width="0.6" />
<line x1="821" y1="219.6" x2="822.3" y2="219.6" stroke="#6f6965" stroke-width="0.6" />
<line x1="821" y1="226.5" x2="822.3" y2="226.5" stroke="#6f6965" stroke-width="0.6" />
<line x1="821" y1="235.2" x2="822.3" y2="235.2" stroke="#6f6965" stroke-width="0.6" />
<line x1="821" y1="244.4" x2="822.3" y2="244.4" stroke="#6f6965" stroke-width="0.6" />
<line x1="821" y1="251.8" x2="822.3" y2="251.8" stroke="#6f6965" stroke-width="0.6" />
<text x="832" y="189.53" font-size="6" fill="#211e1c" text-anchor="end" stroke="#211e1c" stroke-width="0.14" >0</text>
<text x="832" y="197.03" font-size="6" fill="#211e1c" text-anchor="end" stroke="#211e1c" stroke-width="0.14" >6</text>
<text x="832" y="204.43" font-size="6" fill="#211e1c" text-anchor="end" stroke="#211e1c" stroke-width="0.14" >12</text>
<text x="832" y="211.63" font-size="6" fill="#211e1c" text-anchor="end" stroke="#211e1c" stroke-width="0.14" >18</text>
<text x="832" y="218.33" font-size="6" fill="#211e1c" text-anchor="end" stroke="#211e1c" stroke-width="0.14" >24</text>
<text x="832" y="225.23" font-size="6" fill="#211e1c" text-anchor="end" stroke="#211e1c" stroke-width="0.14" >30</text>
<text x="832" y="232.13" font-size="6" fill="#211e1c" text-anchor="end" stroke="#211e1c" stroke-width="0.14" >36</text>
<text x="832" y="242.43" font-size="6" fill="#211e1c" text-anchor="end" stroke="#211e1c" stroke-width="0.14" >48</text>
<text x="832" y="250.73" font-size="6" fill="#211e1c" text-anchor="end" stroke="#211e1c" stroke-width="0.14" >60</text>
<path d="M820.2 187.8l4.6-2.7v5.4z" fill="#e4e1de" stroke="#4a4643" stroke-width="0.6" />
<rect x="793.4" y="260.1" width="4.7" height="1.9" fill="#8a7426" />
<rect x="799" y="260.1" width="4.7" height="1.9" fill="#2b2826" />
<rect x="804.6" y="260.1" width="4.7" height="1.9" fill="#2b2826" />
<rect x="810.2" y="260.1" width="4.7" height="1.9" fill="#2b2826" />
<rect x="815.8" y="260.1" width="4.7" height="1.9" fill="#2b2826" />
<rect x="821.4" y="260.1" width="4.7" height="1.9" fill="#2b2826" />
<rect x="728" y="49.6" width="1" height="216.8" fill="#786e69" />
<line x1="297.5" y1="50.4" x2="297.5" y2="266.2" stroke="#56504d" stroke-width="1" />
<line x1="350.5" y1="53.4" x2="350.5" y2="266.2" stroke="#56504d" stroke-width="1" />
<line x1="393.9" y1="53.4" x2="393.9" y2="266.2" stroke="#56504d" stroke-width="1" />
<line x1="436.1" y1="53.4" x2="436.1" y2="266.2" stroke="#56504d" stroke-width="1" />
<line x1="489.9" y1="53.4" x2="489.9" y2="266.2" stroke="#56504d" stroke-width="1" />
<line x1="531.7" y1="50.4" x2="531.7" y2="266.2" stroke="#56504d" stroke-width="1" />
<line x1="584.9" y1="53.4" x2="584.9" y2="266.2" stroke="#56504d" stroke-width="1" />
<line x1="638.5" y1="53.4" x2="638.5" y2="266.2" stroke="#56504d" stroke-width="1" />
<line x1="692.3" y1="53.4" x2="692.3" y2="266.2" stroke="#56504d" stroke-width="1" />
<line x1="728.5" y1="50.4" x2="728.5" y2="266.2" stroke="#56504d" stroke-width="1" />
<line x1="782.7" y1="50.4" x2="782.7" y2="266.2" stroke="#56504d" stroke-width="1" />
<rect x="374.6" y="268.4" width="198.4" height="4" fill="#87807c" rx="2" />
<rect x="838" y="75" width="10.6" height="124" fill="#5b5653" rx="2" />
<rect x="840.6" y="80" width="4.2" height="116" fill="#7a7471" rx="2.1" />
<circle cx="844.4" cy="53.6" r="4.4" fill="#8f8884" stroke="#3a3633" stroke-width="0.8" />
<path d="M841.8 51.6h5.2M841.8 53.6h5.2M841.8 55.6h5.2" fill="none" stroke="#2b2826" stroke-width="0.8" />
<circle cx="844.4" cy="66.2" r="4.4" fill="#fbb02f" stroke="#6a4a10" stroke-width="0.8" />
<path d="M843.0 63.4v5.6M845.8 63.4v5.6" fill="none" stroke="#3a2a08" stroke-width="1" />
<circle cx="842.6" cy="206.9" r="3.8" fill="#2b2826" />
<text x="842.6" y="208.21" font-size="3.4" fill="#8f8884" text-anchor="middle" stroke="#8f8884" stroke-width="0.14" >I·O</text>
<rect x="838.7" y="213.4" width="7.8" height="14.8" fill="#fbb02f" rx="3.9" />
<line x1="838.7" y1="220.8" x2="846.5" y2="220.8" stroke="#8a5a10" stroke-width="0.6" />
<text x="842.6" y="218.75" font-size="3.8" fill="#6a4a10" text-anchor="middle" font-weight="700" transform="translate(842.6 0) scale(0.9 1) translate(-842.6 0)" >S</text>
<text x="842.6" y="225.95" font-size="3.8" fill="#6a4a10" text-anchor="middle" font-weight="700" transform="translate(842.6 0) scale(0.9 1) translate(-842.6 0)" >R</text>
<circle cx="842.6" cy="235.4" r="3.8" fill="#fbb02f" />
<text x="842.6" y="236.95" font-size="3.8" fill="#6a4a10" text-anchor="middle" font-weight="700" transform="translate(842.6 0) scale(0.9 1) translate(-842.6 0)" >M</text>
<circle cx="842.6" cy="246" r="3.8" fill="#2b2826" />
<text x="842.6" y="247.55" font-size="3.8" fill="#8f8884" text-anchor="middle" font-weight="700" transform="translate(842.6 0) scale(0.9 1) translate(-842.6 0)" >D</text>
<circle cx="842.6" cy="256.6" r="3.8" fill="#2b2826" />
<text x="842.6" y="258.15" font-size="3.8" fill="#8f8884" text-anchor="middle" font-weight="700" transform="translate(842.6 0) scale(0.9 1) translate(-842.6 0)" >X</text>
<circle cx="842.6" cy="266.9" r="3.8" fill="#fbb02f" />
<text x="842.6" y="268.45" font-size="3.8" fill="#6a4a10" text-anchor="middle" font-weight="700" transform="translate(842.6 0) scale(0.9 1) translate(-842.6 0)" >C</text>
<rect x="275.6" y="279.6" width="573.8" height="117.8" fill="#57514e" rx="1.5" />
<rect x="277.2" y="281.8" width="570.4" height="114.2" fill="#25221f" />
<defs><clipPath id="eqc"><rect x="277.2" y="281.8" width="570.4" height="114.2"/></clipPath></defs>
<g clip-path="url(#eqc)">
<line x1="328.52" y1="281.8" x2="328.52" y2="396" stroke="#45413e" stroke-width="0.5" />
<line x1="358.57" y1="281.8" x2="358.57" y2="396" stroke="#45413e" stroke-width="0.5" />
<line x1="379.89" y1="281.8" x2="379.89" y2="396" stroke="#45413e" stroke-width="0.5" />
<line x1="396.43" y1="281.8" x2="396.43" y2="396" stroke="#45413e" stroke-width="0.5" />
<line x1="409.94" y1="281.8" x2="409.94" y2="396" stroke="#45413e" stroke-width="0.5" />
<line x1="421.37" y1="281.8" x2="421.37" y2="396" stroke="#45413e" stroke-width="0.5" />
<line x1="431.26" y1="281.8" x2="431.26" y2="396" stroke="#45413e" stroke-width="0.5" />
<line x1="439.99" y1="281.8" x2="439.99" y2="396" stroke="#45413e" stroke-width="0.5" />
<line x1="447.8" y1="281.8" x2="447.8" y2="396" stroke="#55514d" stroke-width="0.6" />
<line x1="499.17" y1="281.8" x2="499.17" y2="396" stroke="#45413e" stroke-width="0.5" />
<line x1="529.22" y1="281.8" x2="529.22" y2="396" stroke="#45413e" stroke-width="0.5" />
<line x1="550.54" y1="281.8" x2="550.54" y2="396" stroke="#45413e" stroke-width="0.5" />
<line x1="567.08" y1="281.8" x2="567.08" y2="396" stroke="#45413e" stroke-width="0.5" />
<line x1="580.59" y1="281.8" x2="580.59" y2="396" stroke="#45413e" stroke-width="0.5" />
<line x1="592.02" y1="281.8" x2="592.02" y2="396" stroke="#45413e" stroke-width="0.5" />
<line x1="601.91" y1="281.8" x2="601.91" y2="396" stroke="#45413e" stroke-width="0.5" />
<line x1="610.64" y1="281.8" x2="610.64" y2="396" stroke="#45413e" stroke-width="0.5" />
<line x1="618.45" y1="281.8" x2="618.45" y2="396" stroke="#55514d" stroke-width="0.6" />
<line x1="669.82" y1="281.8" x2="669.82" y2="396" stroke="#45413e" stroke-width="0.5" />
<line x1="699.87" y1="281.8" x2="699.87" y2="396" stroke="#45413e" stroke-width="0.5" />
<line x1="721.19" y1="281.8" x2="721.19" y2="396" stroke="#45413e" stroke-width="0.5" />
<line x1="737.73" y1="281.8" x2="737.73" y2="396" stroke="#45413e" stroke-width="0.5" />
<line x1="751.24" y1="281.8" x2="751.24" y2="396" stroke="#45413e" stroke-width="0.5" />
<line x1="762.67" y1="281.8" x2="762.67" y2="396" stroke="#45413e" stroke-width="0.5" />
<line x1="772.56" y1="281.8" x2="772.56" y2="396" stroke="#45413e" stroke-width="0.5" />
<line x1="781.29" y1="281.8" x2="781.29" y2="396" stroke="#45413e" stroke-width="0.5" />
<line x1="789.1" y1="281.8" x2="789.1" y2="396" stroke="#55514d" stroke-width="0.6" />
<line x1="840.47" y1="281.8" x2="840.47" y2="396" stroke="#45413e" stroke-width="0.5" />
<line x1="296" y1="293" x2="847.6" y2="293" stroke="#45413e" stroke-width="0.5" />
<line x1="296" y1="315.9" x2="847.6" y2="315.9" stroke="#45413e" stroke-width="0.5" />
<line x1="296" y1="338.7" x2="847.6" y2="338.7" stroke="#45413e" stroke-width="0.5" />
<line x1="296" y1="361.4" x2="847.6" y2="361.4" stroke="#45413e" stroke-width="0.5" />
<line x1="296" y1="384.2" x2="847.6" y2="384.2" stroke="#45413e" stroke-width="0.5" />
<defs><clipPath id="spc"><path d="M380 396L380 396L403.3 383.3L416.7 378.3L426.7 376.7L436.7 374L446.7 370L451.7 369L456.7 371.7L461.7 375L466.7 371.7L470 373.3L478.3 384L483.3 370L490 366.7L496.7 364L503.3 360L510 356L516.7 357.3L523.3 353.3L530 349.5L535 345.7L540 342.7L544 337L546 330L547.5 320L549 330L550.7 337.7L553.3 346.7L556.4 356.7L559.3 349L560.6 335L561.7 323.3L563 340L565 361L568.3 348.3L572 345L575 342.3L576.6 325L578.3 288.3L580 320L581.7 340L585 341.7L588 330L590 316.7L591.6 335L593.3 353.3L596.7 370L600 358.3L603.3 366.7L608.3 358.3L613.3 370L618.3 366.7L623.3 376.7L626.7 363.3L628.2 345L629.3 333.3L630.6 350L633.3 366.7L638.3 373.3L640.4 362L641.7 353.3L643 364L645 373.3L648.3 386.7L653.3 376.7L656.7 383.3L658.6 350L660 326.7L661.4 355L663.3 380L668.3 390L671.7 373.3L675 390L678 365L680 341.7L681.6 368L683.3 390L687 394L692 384L696.7 370L698 385L699.3 396Z"/></clipPath></defs>
<path d="M380 396L380 396L403.3 383.3L416.7 378.3L426.7 376.7L436.7 374L446.7 370L451.7 369L456.7 371.7L461.7 375L466.7 371.7L470 373.3L478.3 384L483.3 370L490 366.7L496.7 364L503.3 360L510 356L516.7 357.3L523.3 353.3L530 349.5L535 345.7L540 342.7L544 337L546 330L547.5 320L549 330L550.7 337.7L553.3 346.7L556.4 356.7L559.3 349L560.6 335L561.7 323.3L563 340L565 361L568.3 348.3L572 345L575 342.3L576.6 325L578.3 288.3L580 320L581.7 340L585 341.7L588 330L590 316.7L591.6 335L593.3 353.3L596.7 370L600 358.3L603.3 366.7L608.3 358.3L613.3 370L618.3 366.7L623.3 376.7L626.7 363.3L628.2 345L629.3 333.3L630.6 350L633.3 366.7L638.3 373.3L640.4 362L641.7 353.3L643 364L645 373.3L648.3 386.7L653.3 376.7L656.7 383.3L658.6 350L660 326.7L661.4 355L663.3 380L668.3 390L671.7 373.3L675 390L678 365L680 341.7L681.6 368L683.3 390L687 394L692 384L696.7 370L698 385L699.3 396Z" fill="#69615c" />
<path d="M722.6 396L724.6 385L726.6 396Z" fill="#69615c" />
<path d="M845.6 396L847.0 365L848 396Z" fill="#69615c" />
<g clip-path="url(#spc)">
<line x1="328.52" y1="281.8" x2="328.52" y2="396" stroke="#776f6a" stroke-width="0.5" />
<line x1="358.57" y1="281.8" x2="358.57" y2="396" stroke="#776f6a" stroke-width="0.5" />
<line x1="379.89" y1="281.8" x2="379.89" y2="396" stroke="#776f6a" stroke-width="0.5" />
<line x1="396.43" y1="281.8" x2="396.43" y2="396" stroke="#776f6a" stroke-width="0.5" />
<line x1="409.94" y1="281.8" x2="409.94" y2="396" stroke="#776f6a" stroke-width="0.5" />
<line x1="421.37" y1="281.8" x2="421.37" y2="396" stroke="#776f6a" stroke-width="0.5" />
<line x1="431.26" y1="281.8" x2="431.26" y2="396" stroke="#776f6a" stroke-width="0.5" />
<line x1="439.99" y1="281.8" x2="439.99" y2="396" stroke="#776f6a" stroke-width="0.5" />
<line x1="447.8" y1="281.8" x2="447.8" y2="396" stroke="#776f6a" stroke-width="0.5" />
<line x1="499.17" y1="281.8" x2="499.17" y2="396" stroke="#776f6a" stroke-width="0.5" />
<line x1="529.22" y1="281.8" x2="529.22" y2="396" stroke="#776f6a" stroke-width="0.5" />
<line x1="550.54" y1="281.8" x2="550.54" y2="396" stroke="#776f6a" stroke-width="0.5" />
<line x1="567.08" y1="281.8" x2="567.08" y2="396" stroke="#776f6a" stroke-width="0.5" />
<line x1="580.59" y1="281.8" x2="580.59" y2="396" stroke="#776f6a" stroke-width="0.5" />
<line x1="592.02" y1="281.8" x2="592.02" y2="396" stroke="#776f6a" stroke-width="0.5" />
<line x1="601.91" y1="281.8" x2="601.91" y2="396" stroke="#776f6a" stroke-width="0.5" />
<line x1="610.64" y1="281.8" x2="610.64" y2="396" stroke="#776f6a" stroke-width="0.5" />
<line x1="618.45" y1="281.8" x2="618.45" y2="396" stroke="#776f6a" stroke-width="0.5" />
<line x1="669.82" y1="281.8" x2="669.82" y2="396" stroke="#776f6a" stroke-width="0.5" />
<line x1="699.87" y1="281.8" x2="699.87" y2="396" stroke="#776f6a" stroke-width="0.5" />
<line x1="721.19" y1="281.8" x2="721.19" y2="396" stroke="#776f6a" stroke-width="0.5" />
<line x1="737.73" y1="281.8" x2="737.73" y2="396" stroke="#776f6a" stroke-width="0.5" />
<line x1="751.24" y1="281.8" x2="751.24" y2="396" stroke="#776f6a" stroke-width="0.5" />
<line x1="762.67" y1="281.8" x2="762.67" y2="396" stroke="#776f6a" stroke-width="0.5" />
<line x1="772.56" y1="281.8" x2="772.56" y2="396" stroke="#776f6a" stroke-width="0.5" />
<line x1="781.29" y1="281.8" x2="781.29" y2="396" stroke="#776f6a" stroke-width="0.5" />
<line x1="789.1" y1="281.8" x2="789.1" y2="396" stroke="#776f6a" stroke-width="0.5" />
<line x1="840.47" y1="281.8" x2="840.47" y2="396" stroke="#776f6a" stroke-width="0.5" />
<line x1="296" y1="338.7" x2="847.6" y2="338.7" stroke="#776f6a" stroke-width="0.5" />
<line x1="296" y1="361.4" x2="847.6" y2="361.4" stroke="#776f6a" stroke-width="0.5" />
<line x1="296" y1="384.2" x2="847.6" y2="384.2" stroke="#776f6a" stroke-width="0.5" />
</g>
<path d="M360 396.5C363.33 392.92 372.78 382.75 380 375C387.22 367.25 397.18 356.38 403.3 350C409.42 343.62 412.8 340.15 416.7 336.7C420.6 333.25 423.37 331.13 426.7 329.3C430.03 327.47 433.37 326.53 436.7 325.7C440.03 324.87 441.15 324.37 446.7 324.3C452.25 324.23 461.67 325.18 470 325.3C478.33 325.42 487.82 325.43 496.7 325C505.58 324.57 514.42 323.62 523.3 322.7C532.18 321.78 542.22 320.42 550 319.5C557.78 318.58 562.78 317.95 570 317.2C577.22 316.45 584.68 315.53 593.3 315C601.92 314.47 610.58 313.95 621.7 314C632.82 314.05 648.07 314.97 660 315.3C671.93 315.63 684.97 316.1 693.3 316C701.63 315.9 704.72 315.32 710 314.7C715.28 314.08 719.45 313.18 725 312.3C730.55 311.42 737.47 310.1 743.3 309.4C749.13 308.7 752.77 308.22 760 308.1C767.23 307.98 776.7 308.27 786.7 308.7C796.7 309.13 809.78 310.08 820 310.7C830.22 311.32 843.33 312.12 848 312.4" fill="none" stroke="#6cc3d5" stroke-width="1.3" />
</g>
<text x="287" y="295.06" font-size="5.8" fill="#aaa5a1" text-anchor="end" stroke="#aaa5a1" stroke-width="0.14" >12</text>
<text x="287" y="317.96" font-size="5.8" fill="#aaa5a1" text-anchor="end" stroke="#aaa5a1" stroke-width="0.14" >6</text>
<text x="287" y="340.76" font-size="5.8" fill="#aaa5a1" text-anchor="end" stroke="#aaa5a1" stroke-width="0.14" >0</text>
<text x="287" y="363.46" font-size="5.8" fill="#aaa5a1" text-anchor="end" stroke="#aaa5a1" stroke-width="0.14" >-6</text>
<text x="287" y="386.26" font-size="5.8" fill="#aaa5a1" text-anchor="end" stroke="#aaa5a1" stroke-width="0.14" >-12</text>
<text x="447.2" y="392.99" font-size="5.6" fill="#b8b3af" text-anchor="middle" stroke="#b8b3af" stroke-width="0.14" >100</text>
<text x="617.85" y="392.99" font-size="5.6" fill="#b8b3af" text-anchor="middle" stroke="#b8b3af" stroke-width="0.14" >1k</text>
<text x="788.5" y="392.99" font-size="5.6" fill="#b8b3af" text-anchor="middle" stroke="#b8b3af" stroke-width="0.14" >10k</text>
<circle cx="431" cy="339.3" r="3.9" fill="#25221f" stroke="#fbb02f" stroke-width="1.1" />
<text x="431" y="340.96" font-size="4.4" fill="#fbb02f" text-anchor="middle" font-weight="700" transform="translate(431 0) scale(0.9 1) translate(-431 0)" >1</text>
<circle cx="621.7" cy="315.3" r="3.9" fill="#25221f" stroke="#fbb02f" stroke-width="1.1" />
<text x="621.7" y="316.96" font-size="4.4" fill="#fbb02f" text-anchor="middle" font-weight="700" transform="translate(621.7 0) scale(0.9 1) translate(-621.7 0)" >7</text>
<circle cx="725" cy="313.3" r="4.2" fill="#fbb02f" />
<text x="725" y="314.96" font-size="4.4" fill="#5a3c08" text-anchor="middle" font-weight="700" transform="translate(725 0) scale(0.9 1) translate(-725 0)" >5</text>
<rect x="50.6" y="401.4" width="799.2" height="111" fill="#5a524d" rx="2" />
<rect x="59.2" y="404.8" width="208.4" height="104.5" fill="#aca49d" rx="1.5" />
<rect x="59.2" y="404.8" width="208.4" height="9.6" fill="#b3aba4" rx="1.5" />
<circle cx="64" cy="409.5" r="3.6" fill="#fbb02f" stroke="#c48a20" stroke-width="0.7" />
<text x="70.2" y="411.97" font-size="6.4" fill="#211e1c" font-weight="700" transform="translate(70.2 0) scale(0.9 1) translate(-70.2 0)" >Electric</text>
<text x="233.2" y="411.79" font-size="5.6" fill="#6a6461" font-weight="700" transform="translate(233.2 0) scale(0.9 1) translate(-233.2 0)" >A</text>
<text x="239.2" y="411.79" font-size="5.6" fill="#6a6461" font-weight="700" transform="translate(239.2 0) scale(0.9 1) translate(-239.2 0)" >A</text>
<text x="244.9" y="411.79" font-size="5.6" fill="#6a6461" font-weight="700" transform="translate(244.9 0) scale(0.9 1) translate(-244.9 0)" >S</text>
<line x1="237.5" y1="406" x2="237.5" y2="413" stroke="#8a8480" stroke-width="0.5" />
<line x1="243.4" y1="406" x2="243.4" y2="413" stroke="#8a8480" stroke-width="0.5" />
<circle cx="254.1" cy="409.7" r="3.4" fill="#dedbd8" stroke="#3a3633" stroke-width="0.9" />
<path d="M252.3 411.2l1.2-1.6l1 0.8l1.4-2" fill="none" stroke="#2b2826" stroke-width="0.8" />
<circle cx="262.8" cy="409.7" r="3.4" fill="#dedbd8" stroke="#3a3633" stroke-width="0.9" />
<rect x="260.9" y="408" width="3.8" height="3.6" fill="#2b2826" rx="0.4" />
<rect x="261.9" y="408" width="1.8" height="1.4" fill="#dedbd8" />
<rect x="59.2" y="414.4" width="61.2" height="38.8" fill="#b3aba4" />
<rect x="121" y="414.7" width="56.6" height="38.1" fill="#9b928c" />
<rect x="179.4" y="414.7" width="56" height="38.1" fill="#9b928c" />
<rect x="236.8" y="414.7" width="30.8" height="38.1" fill="#9b928c" />
<text x="89.6" y="421.4" font-size="6.2" fill="#211e1c" text-anchor="middle" font-weight="700" transform="translate(89.6 0) scale(0.9 1) translate(-89.6 0)" >Hammer</text>
<text x="149.2" y="421.4" font-size="6.2" fill="#211e1c" text-anchor="middle" font-weight="700" transform="translate(149.2 0) scale(0.9 1) translate(-149.2 0)" >Fork</text>
<text x="205.8" y="421.4" font-size="6.2" fill="#211e1c" text-anchor="middle" font-weight="700" transform="translate(205.8 0) scale(0.9 1) translate(-205.8 0)" >Damper / Pickup</text>
<text x="252.2" y="421.4" font-size="6.2" fill="#211e1c" text-anchor="middle" font-weight="700" transform="translate(252.2 0) scale(0.9 1) translate(-252.2 0)" >Global</text>
<text x="76.7" y="429.7" font-size="6.2" fill="#211e1c" text-anchor="middle" stroke="#211e1c" stroke-width="0.14" >Stiffness</text>
<path d="M72.1 442.9A6.5 6.5 0 1 1 81.3 442.9" fill="none" stroke="#2b2826" stroke-width="1.45" />
<path d="M72.1 442.9A6.5 6.5 0 0 1 70.34 436.98" fill="none" stroke="#93d3df" stroke-width="1.95" />
<line x1="75.75" y1="438.1" x2="70.04" y2="436.92" stroke="#2b2826" stroke-width="1.55" />
<text x="76.7" y="449.83" font-size="6" fill="#211e1c" text-anchor="middle" stroke="#211e1c" stroke-width="0.14" >21 %</text>
<text x="103.9" y="429.7" font-size="6.2" fill="#211e1c" text-anchor="middle" stroke="#211e1c" stroke-width="0.14" >Noise</text>
<path d="M99.3 442.9A6.5 6.5 0 1 1 108.5 442.9" fill="none" stroke="#2b2826" stroke-width="1.45" />
<path d="M99.3 442.9A6.5 6.5 0 0 1 98.47 434.73" fill="none" stroke="#93d3df" stroke-width="1.95" />
<line x1="103.09" y1="437.76" x2="98.22" y2="434.57" stroke="#2b2826" stroke-width="1.55" />
<text x="103.9" y="449.83" font-size="6" fill="#211e1c" text-anchor="middle" stroke="#211e1c" stroke-width="0.14" >29 %</text>
<text x="136.4" y="429.7" font-size="6.2" fill="#211e1c" text-anchor="middle" stroke="#211e1c" stroke-width="0.14" >Tine</text>
<path d="M131.8 442.9A6.5 6.5 0 1 1 141 442.9" fill="none" stroke="#2b2826" stroke-width="1.45" />
<path d="M131.8 442.9A6.5 6.5 0 1 1 142.76 436.98" fill="none" stroke="#93d3df" stroke-width="1.95" />
<line x1="137.35" y1="438.1" x2="143.06" y2="436.92" stroke="#2b2826" stroke-width="1.55" />
<text x="136.4" y="449.83" font-size="6" fill="#211e1c" text-anchor="middle" stroke="#211e1c" stroke-width="0.14" >79 %</text>
<text x="162.2" y="429.7" font-size="6.2" fill="#211e1c" text-anchor="middle" stroke="#211e1c" stroke-width="0.14" >Tone</text>
<path d="M157.6 442.9A6.5 6.5 0 1 1 166.8 442.9" fill="none" stroke="#2b2826" stroke-width="1.45" />
<path d="M157.6 442.9A6.5 6.5 0 1 1 168.68 438.81" fill="none" stroke="#93d3df" stroke-width="1.95" />
<line x1="163.17" y1="438.38" x2="168.98" y2="438.83" stroke="#2b2826" stroke-width="1.55" />
<text x="162.2" y="449.83" font-size="6" fill="#211e1c" text-anchor="middle" stroke="#211e1c" stroke-width="0.14" >85 %</text>
<text x="195.4" y="429.7" font-size="6.2" fill="#211e1c" text-anchor="middle" stroke="#211e1c" stroke-width="0.14" >Symmetry</text>
<path d="M190.8 442.9A6.5 6.5 0 1 1 200 442.9" fill="none" stroke="#2b2826" stroke-width="1.45" />
<path d="M190.8 442.9A6.5 6.5 0 1 1 201.82 437.28" fill="none" stroke="#93d3df" stroke-width="1.95" />
<line x1="196.36" y1="438.15" x2="202.12" y2="437.24" stroke="#2b2826" stroke-width="1.55" />
<text x="195.4" y="449.83" font-size="6" fill="#211e1c" text-anchor="middle" stroke="#211e1c" stroke-width="0.14" >80 %</text>
<text x="251.8" y="429.7" font-size="6.2" fill="#211e1c" text-anchor="middle" stroke="#211e1c" stroke-width="0.14" >Volume</text>
<path d="M247.2 442.9A6.5 6.5 0 1 1 256.4 442.9" fill="none" stroke="#2b2826" stroke-width="1.45" />
<path d="M247.2 442.9A6.5 6.5 0 0 1 249.41 432.26" fill="none" stroke="#93d3df" stroke-width="1.95" />
<line x1="251.44" y1="437.39" x2="249.3" y2="431.98" stroke="#2b2826" stroke-width="1.55" />
<text x="251.8" y="449.83" font-size="6" fill="#211e1c" text-anchor="middle" stroke="#211e1c" stroke-width="0.14" >-8.2 dB</text>
<text x="222" y="430.6" font-size="6.2" fill="#211e1c" text-anchor="middle" stroke="#211e1c" stroke-width="0.14" >Type</text>
<rect x="214.2" y="433.2" width="16" height="6.3" fill="#fbb02f" stroke="#8a5a10" stroke-width="0.6" />
<text x="222.2" y="438.49" font-size="5.6" fill="#211e1c" text-anchor="middle" stroke="#211e1c" stroke-width="0.14" >R</text>
<rect x="214.2" y="442" width="16" height="6.4" fill="#d4d0cd" stroke="#4a4643" stroke-width="0.6" />
<text x="222.2" y="447.39" font-size="5.6" fill="#211e1c" text-anchor="middle" stroke="#211e1c" stroke-width="0.14" >W</text>
<rect x="60" y="453.9" width="207.2" height="55.1" fill="#25221f" rx="1" />
<line x1="119.5" y1="454" x2="119.5" y2="509" stroke="#4d4946" stroke-width="0.7" />
<line x1="119.5" y1="472.3" x2="267" y2="472.3" stroke="#4d4946" stroke-width="0.7" />
<line x1="119.5" y1="490.5" x2="267" y2="490.5" stroke="#4d4946" stroke-width="0.7" />
<text x="122.2" y="461.2" font-size="6.2" fill="#bcb7b3" stroke="#bcb7b3" stroke-width="0.14" >Stiffness</text>
<text x="198" y="461.13" font-size="6" fill="#aaa5a1" stroke="#aaa5a1" stroke-width="0.14" >Vel</text>
<text x="198" y="468.13" font-size="6" fill="#fbb02f" font-weight="700" transform="translate(198 0) scale(0.9 1) translate(-198 0)" >0.0</text>
<text x="236.2" y="461.13" font-size="6" fill="#aaa5a1" stroke="#aaa5a1" stroke-width="0.14" >Key</text>
<text x="236.2" y="468.13" font-size="6" fill="#fbb02f" font-weight="700" transform="translate(236.2 0) scale(0.9 1) translate(-236.2 0)" >50</text>
<text x="122.2" y="479.5" font-size="6.2" fill="#bcb7b3" stroke="#bcb7b3" stroke-width="0.14" >Force</text>
<text x="160" y="479.43" font-size="6" fill="#aaa5a1" stroke="#aaa5a1" stroke-width="0.14" >Amount</text>
<text x="160" y="486.53" font-size="6" fill="#7fcbdb" font-weight="700" transform="translate(160 0) scale(0.9 1) translate(-160 0)" >41 %</text>
<text x="198" y="479.43" font-size="6" fill="#aaa5a1" stroke="#aaa5a1" stroke-width="0.14" >Vel</text>
<text x="198" y="486.53" font-size="6" fill="#fbb02f" font-weight="700" transform="translate(198 0) scale(0.9 1) translate(-198 0)" >79</text>
<text x="236.2" y="479.43" font-size="6" fill="#aaa5a1" stroke="#aaa5a1" stroke-width="0.14" >Key</text>
<text x="236.2" y="486.53" font-size="6" fill="#fbb02f" font-weight="700" transform="translate(236.2 0) scale(0.9 1) translate(-236.2 0)" >35</text>
<text x="122.2" y="498" font-size="6.2" fill="#bcb7b3" stroke="#bcb7b3" stroke-width="0.14" >Noise</text>
<text x="160" y="497.93" font-size="6" fill="#aaa5a1" stroke="#aaa5a1" stroke-width="0.14" >Pitch</text>
<text x="160" y="504.93" font-size="6" fill="#7fcbdb" font-weight="700" transform="translate(160 0) scale(0.9 1) translate(-160 0)" >42 %</text>
<text x="198" y="497.93" font-size="6" fill="#aaa5a1" stroke="#aaa5a1" stroke-width="0.14" >Decay</text>
<text x="198" y="504.93" font-size="6" fill="#7fcbdb" font-weight="700" transform="translate(198 0) scale(0.9 1) translate(-198 0)" >38 %</text>
<text x="236.2" y="497.93" font-size="6" fill="#aaa5a1" stroke="#aaa5a1" stroke-width="0.14" >Key</text>
<text x="236.2" y="504.93" font-size="6" fill="#fbb02f" font-weight="700" transform="translate(236.2 0) scale(0.9 1) translate(-236.2 0)" >56</text>
<rect x="67" y="474" width="10" height="6.3" fill="none" rx="0.8" stroke="#8d8783" stroke-width="0.7" />
<line x1="69" y1="474" x2="69" y2="480.3" stroke="#8d8783" stroke-width="0.6" />
<line x1="75" y1="474" x2="75" y2="480.3" stroke="#8d8783" stroke-width="0.6" />
<path d="M79.2 469.8h6.4l1.6 0.9h6l1.6-0.9h10.2v4.7h-25.8z" fill="none" stroke="#8d8783" stroke-width="0.7" />
<path d="M79.2 476.5h28M92.4 476.5v3h6v-3" fill="none" stroke="#8d8783" stroke-width="0.7" />
<path d="M107.2 469.8h3l2.4 3.2v2.2l-2.4 3.2h-3z" fill="none" stroke="#8d8783" stroke-width="0.7" />
<path d="M78.9 483.1L81.6 480L99.5 489.7L104.5 481.4L107.6 482L107.3 484.2L102.9 492.4L98.4 492.4L89.1 487.5L85.2 488Z" fill="none" stroke="#58b5c8" stroke-width="0.9" stroke-linejoin="round"/>
<rect x="54" y="446.4" width="2.2" height="1.4" fill="#3a3633" />
<rect x="54" y="448.65" width="2.2" height="1.4" fill="#3a3633" />
<rect x="54" y="450.9" width="2.2" height="1.4" fill="#f0a52c" />
<rect x="54" y="453.15" width="2.2" height="1.4" fill="#3a3633" />
<rect x="54" y="455.4" width="2.2" height="1.4" fill="#3a3633" />
<rect x="54" y="457.65" width="2.2" height="1.4" fill="#f0a52c" />
<rect x="54" y="459.9" width="2.2" height="1.4" fill="#f0a52c" />
<rect x="54" y="462.15" width="2.2" height="1.4" fill="#f0a52c" />
<rect x="54" y="464.4" width="2.2" height="1.4" fill="#f0a52c" />
<rect x="54" y="466.65" width="2.2" height="1.4" fill="#f0a52c" />
<rect x="269" y="446.4" width="3.2" height="1.3" fill="#3a3633" />
<rect x="269" y="448.7" width="3.2" height="1.3" fill="#3a3633" />
<rect x="269" y="451" width="3.2" height="1.3" fill="#3a3633" />
<rect x="269" y="453.8" width="3.2" height="14.8" fill="#78c043" />
<rect x="274.2" y="404.8" width="137.6" height="104.5" fill="#9e958f" rx="1.5" />
<rect x="274.2" y="404.8" width="137.6" height="9.6" fill="#b3aba4" rx="1.5" />
<circle cx="279.4" cy="409.5" r="3.6" fill="#fbb02f" stroke="#c48a20" stroke-width="0.7" />
<text x="285.4" y="411.97" font-size="6.4" fill="#211e1c" font-weight="700" transform="translate(285.4 0) scale(0.9 1) translate(-285.4 0)" >Chorus-Ensemble</text>
<circle cx="398.3" cy="409.7" r="3.4" fill="#dedbd8" stroke="#3a3633" stroke-width="0.9" />
<path d="M396.5 411.2l1.2-1.6l1 0.8l1.4-2" fill="none" stroke="#2b2826" stroke-width="0.8" />
<circle cx="407" cy="409.7" r="3.4" fill="#dedbd8" stroke="#3a3633" stroke-width="0.9" />
<rect x="405.1" y="408" width="3.8" height="3.6" fill="#2b2826" rx="0.4" />
<rect x="406.1" y="408" width="1.8" height="1.4" fill="#dedbd8" />
<rect x="276.8" y="417" width="102" height="60.6" fill="#25221f" rx="2" />
<line x1="380.2" y1="480.4" x2="380.2" y2="508" stroke="#8f8985" stroke-width="0.6" />
<path d="M278.8 432.63L279.62 431.61L280.43 430.62L281.25 429.68L282.06 428.79L282.88 427.99L283.69 427.28L284.5 426.68L285.32 426.21L286.13 425.87L286.95 425.66L287.76 425.6L288.58 425.68L289.4 425.91L290.21 426.28L291.03 426.77L291.84 427.39L292.66 428.11L293.47 428.93L294.29 429.82L295.1 430.78L295.92 431.77L296.73 432.79L297.55 433.8L298.36 434.79L299.18 435.74L299.99 436.63L300.81 437.45L301.62 438.16L302.44 438.77L303.25 439.26L304.06 439.61L304.88 439.83L305.69 439.9L306.51 439.83L307.32 439.61L308.14 439.26L308.96 438.78L309.77 438.17L310.59 437.45L311.4 436.64L312.22 435.75L313.03 434.8L313.85 433.81L314.66 432.8L315.48 431.79L316.29 430.79L317.11 429.84L317.92 428.94L318.74 428.12L319.55 427.39L320.37 426.78L321.18 426.28L322 425.91L322.81 425.69L323.62 425.6L324.44 425.66L325.25 425.86L326.07 426.2L326.88 426.68L327.7 427.27L328.52 427.98L329.33 428.78L330.15 429.67L330.96 430.61L331.78 431.6L332.59 432.61L333.41 433.63L334.22 434.62L335.04 435.58L335.85 436.49L336.67 437.31L337.48 438.05L338.3 438.67L339.11 439.18L339.93 439.56L340.74 439.8L341.56 439.9L342.37 439.85L343.19 439.66L344 439.33L344.82 438.87L345.63 438.28L346.45 437.59L347.26 436.79L348.08 435.91L348.89 434.97L349.71 433.99L350.52 432.97L351.34 431.96L352.15 430.96L352.97 430L353.78 429.09L354.6 428.26L355.41 427.51L356.23 426.88L357.04 426.36L357.86 425.97L358.67 425.72L359.49 425.61L360.3 425.64L361.12 425.82L361.93 426.13L362.75 426.59L363.56 427.16L364.38 427.85L365.19 428.64L366 429.51L366.82 430.45L367.63 431.43L368.45 432.44L369.26 433.45L370.08 434.46L370.9 435.42L371.71 436.34L372.53 437.18L373.34 437.93L374.16 438.57L374.97 439.1L375.79 439.5L376.6 439.77" fill="none" stroke="#fbb02f" stroke-width="1.25" />
<path d="M278.8 426.25L279.62 425.89L280.43 425.67L281.25 425.6L282.06 425.69L282.88 425.92L283.69 426.3L284.5 426.82L285.32 427.47L286.13 428.23L286.95 429.08L287.76 430.02L288.58 431.01L289.4 432.04L290.21 433.08L291.03 434.12L291.84 435.13L292.66 436.09L293.47 436.97L294.29 437.77L295.1 438.46L295.92 439.02L296.73 439.46L297.55 439.75L298.36 439.89L299.18 439.87L299.99 439.71L300.81 439.4L301.62 438.94L302.44 438.35L303.25 437.64L304.06 436.83L304.88 435.93L305.69 434.97L306.51 433.95L307.32 432.91L308.14 431.87L308.96 430.84L309.77 429.86L310.59 428.94L311.4 428.09L312.22 427.35L313.03 426.73L313.85 426.23L314.66 425.87L315.48 425.66L316.29 425.6L317.11 425.69L317.92 425.94L318.74 426.33L319.55 426.85L320.37 427.51L321.18 428.27L322 429.13L322.81 430.07L323.62 431.07L324.44 432.1L325.25 433.14L326.07 434.18L326.88 435.18L327.7 436.14L328.52 437.02L329.33 437.81L330.15 438.49L330.96 439.05L331.78 439.48L332.59 439.76L333.41 439.89L334.22 439.87L335.04 439.7L335.85 439.37L336.67 438.91L337.48 438.32L338.3 437.6L339.11 436.78L339.93 435.88L340.74 434.91L341.56 433.89L342.37 432.85L343.19 431.81L344 430.79L344.82 429.8L345.63 428.89L346.45 428.05L347.26 427.32L348.08 426.7L348.89 426.21L349.71 425.86L350.52 425.65L351.34 425.6L352.15 425.7L352.97 425.96L353.78 426.35L354.6 426.89L355.41 427.55L356.23 428.32L357.04 429.18L357.86 430.12L358.67 431.12L359.49 432.15L360.3 433.2L361.12 434.23L361.93 435.24L362.75 436.19L363.56 437.07L364.38 437.85L365.19 438.53L366 439.08L366.82 439.5L367.63 439.77L368.45 439.89L369.26 439.86L370.08 439.68L370.9 439.35L371.71 438.88L372.53 438.28L373.34 437.56L374.16 436.74L374.97 435.83L375.79 434.86L376.6 433.84" fill="none" stroke="#6cc3d5" stroke-width="1.25" />
<rect x="278.6" y="449.8" width="31.8" height="7.2" fill="#fbb02f" />
<text x="294.5" y="455.33" font-size="6" fill="#3a2a08" text-anchor="middle" stroke="#3a2a08" stroke-width="0.14" >Classic</text>
<rect x="312.6" y="450" width="31.2" height="6.8" fill="none" stroke="#fbb02f" stroke-width="0.7" />
<text x="328.2" y="455.33" font-size="6" fill="#fbb02f" text-anchor="middle" stroke="#fbb02f" stroke-width="0.14" >Ensemble</text>
<rect x="345.8" y="450" width="30.8" height="6.8" fill="none" stroke="#fbb02f" stroke-width="0.7" />
<text x="361.2" y="455.33" font-size="6" fill="#fbb02f" text-anchor="middle" stroke="#fbb02f" stroke-width="0.14" >Vibrato</text>
<rect x="279.6" y="461" width="4" height="4.4" fill="none" stroke="#fbb02f" stroke-width="0.7" />
<path d="M287.2 465.2v-2.4q0-1.6 1.6-1.6h5.6" fill="none" stroke="#a9a5a1" stroke-width="0.7" />
<text x="280" y="473.43" font-size="6" fill="#a9a5a1" stroke="#a9a5a1" stroke-width="0.14" >50.0 Hz</text>
<text x="313.4" y="465.83" font-size="6" fill="#a9a5a1" stroke="#a9a5a1" stroke-width="0.14" >Width</text>
<text x="313.4" y="473.43" font-size="6" fill="#fbb02f" font-weight="700" transform="translate(313.4 0) scale(0.9 1) translate(-313.4 0)" >100 %</text>
<text x="395.2" y="421.9" font-size="6.2" fill="#211e1c" text-anchor="middle" stroke="#211e1c" stroke-width="0.14" >Output</text>
<path d="M390.6 435.1A6.5 6.5 0 1 1 399.8 435.1" fill="none" stroke="#2b2826" stroke-width="1.45" />
<path d="M390.6 435.1A6.5 6.5 0 1 1 401.08 427.73" fill="none" stroke="#93d3df" stroke-width="1.95" />
<line x1="396.08" y1="430.08" x2="401.35" y2="427.6" stroke="#2b2826" stroke-width="1.55" />
<text x="395.2" y="442.03" font-size="6" fill="#211e1c" text-anchor="middle" stroke="#211e1c" stroke-width="0.14" >0.0 dB</text>
<text x="395.2" y="453.1" font-size="6.2" fill="#211e1c" text-anchor="middle" stroke="#211e1c" stroke-width="0.14" >Warmth</text>
<path d="M390.6 466.3A6.5 6.5 0 1 1 399.8 466.3" fill="none" stroke="#2b2826" stroke-width="1.45" />
<path d="M390.6 466.3A6.5 6.5 0 0 1 388.8 462.82" fill="none" stroke="#93d3df" stroke-width="1.95" />
<line x1="394.24" y1="461.87" x2="388.5" y2="462.87" stroke="#2b2826" stroke-width="1.55" />
<text x="395.2" y="473.23" font-size="6" fill="#211e1c" text-anchor="middle" stroke="#211e1c" stroke-width="0.14" >0.2 %</text>
<text x="395.2" y="485.4" font-size="6.2" fill="#211e1c" text-anchor="middle" stroke="#211e1c" stroke-width="0.14" >Dry/Wet</text>
<path d="M390.6 498.6A6.5 6.5 0 1 1 399.8 498.6" fill="none" stroke="#2b2826" stroke-width="1.45" />
<path d="M390.6 498.6A6.5 6.5 0 0 1 398.94 488.68" fill="none" stroke="#93d3df" stroke-width="1.95" />
<line x1="395.76" y1="493.2" x2="399.11" y2="488.44" stroke="#2b2826" stroke-width="1.55" />
<text x="395.2" y="505.53" font-size="6" fill="#211e1c" text-anchor="middle" stroke="#211e1c" stroke-width="0.14" >63 %</text>
<text x="293" y="485.4" font-size="6.2" fill="#211e1c" text-anchor="middle" stroke="#211e1c" stroke-width="0.14" >Rate</text>
<path d="M288.4 498.6A6.5 6.5 0 1 1 297.6 498.6" fill="none" stroke="#2b2826" stroke-width="1.45" />
<path d="M288.4 498.6A6.5 6.5 0 0 1 290.61 487.96" fill="none" stroke="#93d3df" stroke-width="1.95" />
<line x1="292.64" y1="493.09" x2="290.5" y2="487.68" stroke="#2b2826" stroke-width="1.55" />
<text x="293" y="505.53" font-size="6" fill="#211e1c" text-anchor="middle" stroke="#211e1c" stroke-width="0.14" >0.90 Hz</text>
<text x="320.2" y="485.4" font-size="6.2" fill="#211e1c" text-anchor="middle" stroke="#211e1c" stroke-width="0.14" >Amount</text>
<path d="M315.6 498.6A6.5 6.5 0 1 1 324.8 498.6" fill="none" stroke="#2b2826" stroke-width="1.45" />
<path d="M315.6 498.6A6.5 6.5 0 0 1 323.94 488.68" fill="none" stroke="#93d3df" stroke-width="1.95" />
<line x1="320.76" y1="493.2" x2="324.11" y2="488.44" stroke="#2b2826" stroke-width="1.55" />
<text x="320.2" y="505.53" font-size="6" fill="#211e1c" text-anchor="middle" stroke="#211e1c" stroke-width="0.14" >63 %</text>
<text x="349.8" y="485.4" font-size="6.2" fill="#211e1c" text-anchor="middle" stroke="#211e1c" stroke-width="0.14" >Feedback</text>
<path d="M345.2 498.6A6.5 6.5 0 1 1 354.4 498.6" fill="none" stroke="#2b2826" stroke-width="1.45" />
<line x1="349.11" y1="494.69" x2="344.99" y2="498.81" stroke="#2b2826" stroke-width="1.55" />
<text x="349.8" y="505.53" font-size="6" fill="#211e1c" text-anchor="middle" stroke="#211e1c" stroke-width="0.14" >0.0 %</text>
<line x1="360.6" y1="494" x2="364.4" y2="494" stroke="#4a4643" stroke-width="0.7" />
<rect x="366.6" y="490" width="7.8" height="7.6" fill="#d4d0cd" stroke="#4a4643" stroke-width="0.6" />
<circle cx="370.5" cy="493.8" r="1.7" fill="none" stroke="#2b2826" stroke-width="0.6" />
<line x1="369.4" y1="495.8" x2="371.6" y2="491.8" stroke="#2b2826" stroke-width="0.5" />
<rect x="413.4" y="446.4" width="3.2" height="1.3" fill="#3a3633" />
<rect x="413.4" y="448.7" width="3.2" height="1.3" fill="#3a3633" />
<rect x="413.4" y="451" width="3.2" height="1.3" fill="#3a3633" />
<rect x="413.4" y="453.8" width="3.2" height="14.8" fill="#78c043" />
<rect x="418.6" y="404.8" width="350" height="104.5" fill="#aca49d" rx="1.5" />
<rect x="418.6" y="404.8" width="350" height="9.6" fill="#b3aba4" rx="1.5" />
<circle cx="423" cy="409.5" r="3.6" fill="#fbb02f" stroke="#c48a20" stroke-width="0.7" />
<text x="429.4" y="411.97" font-size="6.4" fill="#211e1c" font-weight="700" transform="translate(429.4 0) scale(0.9 1) translate(-429.4 0)" >Hybrid Reverb</text>
<circle cx="755.1" cy="409.7" r="3.4" fill="#dedbd8" stroke="#3a3633" stroke-width="0.9" />
<path d="M753.3 411.2l1.2-1.6l1 0.8l1.4-2" fill="none" stroke="#2b2826" stroke-width="0.8" />
<circle cx="763.8" cy="409.7" r="3.4" fill="#dedbd8" stroke="#3a3633" stroke-width="0.9" />
<rect x="761.9" y="408" width="3.8" height="3.6" fill="#2b2826" rx="0.4" />
<rect x="762.9" y="408" width="1.8" height="1.4" fill="#dedbd8" />
<rect x="419.2" y="414.8" width="30.6" height="94" fill="#9b928c" />
<rect x="738.2" y="414.8" width="29.8" height="62.2" fill="#9b928c" />
<path d="M545.2 414.6v-7.6q0-2 2-2h46q2 0 2 2v7.6z" fill="#25221f" />
<text x="570.2" y="411.83" font-size="6" fill="#c9c5c2" text-anchor="middle" stroke="#c9c5c2" stroke-width="0.14" >Reverb</text>
<rect x="597" y="405.9" width="49.4" height="7.3" fill="#25221f" rx="1.6" />
<rect x="615" y="407.6" width="3.8" height="3.8" fill="#fbb02f" />
<text x="621.2" y="411.83" font-size="6" fill="#c9c5c2" stroke="#c9c5c2" stroke-width="0.14" >EQ</text>
<rect x="451.4" y="414.4" width="285.4" height="62.6" fill="#25221f" rx="1.2" />
<path d="M454.2 431.79L454.7 422.98L455.2 420.53L455.7 423.06L456.2 424.95L456.7 426.39L457.2 428.34L457.7 430.22L458.2 429.07L458.7 429.78L459.2 429.08L459.7 429.84L460.2 432.03L460.7 431.8L461.2 432.07L461.7 430.63L462.2 430.99L462.7 432.75L463.2 431.89L463.7 432.85L464.2 432.73L464.7 432.24L465.2 433.33L465.7 432.95L466.2 432.72L466.7 432.43L467.2 433.41L467.7 433.9L468.2 434.13L468.7 433.15L469.2 433.08L469.7 433.4L470.2 433.63L470.7 433.35L471.2 433.89L471.7 434.47L472.2 433.79L472.7 433.63L473.2 434.2L473.7 434.67L474.2 434.54L474.7 434.7L475.2 434.65L475.7 434.4L476.2 434.77L476.7 434.3L477.2 434.06L477.7 434.65L478.2 434.6L478.7 434.03L479.2 434.83L479.7 434.8L480.2 434.48L480.7 435.06L481.2 434.74L481.7 434.23L482.2 434.65L482.7 434.53L483.2 434.36L483.7 434.4L484.2 434.85L484.7 435.11L485.2 435.16L485.7 435.06L486.2 434.96L486.7 435.26L487.2 435.19L487.7 435.27L488.2 434.81L488.7 435.11L489.2 435.02L489.7 434.58L490.2 434.72L490.7 434.77L491.2 434.1L491.7 433.26L492.2 434.53L492.7 434.35L493.2 434.74L493.7 434.96L494.2 434.79L494.7 435.25L495.2 435.33L495.7 435.08L496.2 435.24L496.7 434.91L497.2 434.9L497.7 434.93L498.2 435.35L498.7 435.27L499.2 435.5L499.7 435.35L500.2 434.9L500.7 434.93L501.2 434.93L501.7 435.41L502.2 435.43L502.7 435.17L503.2 435.05L503.7 435.17L504.2 435.53L504.7 435.03L505.2 435.14L505.7 435.5L506.2 435.41L506.7 435.04L507.2 435.39L507.7 435.2L508.2 435.56L508.7 435.11L509.2 435.56L509.7 435.09L510.2 435.46L510.7 435.59L511.2 435.12L511.7 435.38L512.2 435.44L512.7 435.22L513.2 435.55L513.7 435.56L514.2 435.56L514.7 435.64L515.2 435.52L515.7 435.4L516.2 435.49L516.7 435.46L517.2 435.45L517.7 435.5L518.2 435.74L518.7 435.65L519.2 435.37L519.7 435.58L520.2 435.47L520.7 435.71L521.2 435.64L521.7 435.38L522.2 435.49L522.7 435.32L523.2 435.47L523.7 435.53L524.2 435.56L524.7 435.56L525.2 435.45L525.7 435.34L526.2 435.53L526.7 435.4L527.2 435.75L527.7 435.78L528.2 435.78L528.7 435.45L529.2 435.75L529.7 435.52L530.2 435.42L530.7 435.73L531.2 435.65L531.7 435.38L532.2 435.77L532.7 435.61L533.2 435.76L533.7 435.52L534.2 435.6L534.7 435.85L535.2 435.58L535.7 435.84L536.2 435.52L536.7 435.83L537.2 435.86L537.7 435.76L538.2 435.69L538.7 435.52L539.2 435.82L539.7 435.64L540.2 435.85L540.7 435.6L541.2 435.87L541.7 435.63L542.2 435.87L542.7 435.88L543.2 435.71L543.7 435.67L544.2 435.8L544.7 435.69L545.2 435.87L545.7 435.9L546.2 435.79L546.7 435.61L547.2 435.72L547.7 435.78L548.2 435.83L548.7 435.63L549.2 435.86L549.7 435.56L550.2 435.61L550.7 435.74L551.2 435.78L551.7 435.67L552.2 435.81L552.7 435.67L553.2 435.79L553.7 435.93L554.2 435.93L554.7 435.86L555.2 435.93L555.7 435.62L556.2 435.85L556.7 435.85L557.2 435.91L557.7 435.87L558.2 435.6L558.7 435.88L559.2 435.86L559.7 435.98L560.2 435.8L560.7 435.9L561.2 435.98L561.7 435.95L562.2 435.97L562.7 435.87L563.2 435.77L563.7 435.71L564.2 435.72L564.7 435.85L565.2 435.63L565.7 435.73L566.2 435.98L566.7 435.67L567.2 435.73L567.7 435.95L568.2 435.82L568.7 435.71L569.2 435.8L569.7 435.76L570.2 435.93L570.7 435.96L571.2 435.98L571.7 435.82L572.2 435.79L572.7 435.84L573.2 435.74L573.7 435.84L574.2 435.79L574.7 435.76L575.2 436L575.7 435.77L576.2 435.77L576.7 435.86L577.2 435.86L577.7 435.77L578.2 435.81L578.7 435.98L579.2 435.78L579.7 435.84L580.2 436.02L580.7 435.81L581.2 435.81L581.7 435.87L582.2 435.89L582.7 435.74L583.2 435.72L583.7 436.04L584.2 435.77L584.7 435.9L585.2 435.98L585.7 435.98L586.2 436.01L586.7 435.74L587.2 435.78L587.7 435.76L588.2 435.98L588.7 435.9L589.2 436.06L589.7 435.91L590.2 436.02L590.7 435.96L591.2 436.07L591.7 435.79L592.2 435.77L592.7 435.78L593.2 435.95L593.7 435.75L594.2 435.96L594.7 435.98L595.2 436.04L595.7 435.98L596.2 436L596.7 435.91L597.2 435.96L597.7 435.8L598.2 435.88L598.7 435.78L599.2 435.86L599.7 435.85L600.2 435.85L600.7 436L601.2 435.8L601.7 435.94L602.2 436L602.7 435.79L603.2 435.89L603.7 435.92L604.2 436.04L604.7 436.03L605.2 435.94L605.7 435.82L606.2 435.96L606.7 436.04L607.2 435.99L607.7 436.03L608.2 435.93L608.7 435.87L609.2 435.98L609.7 435.99L610.2 436.09L610.7 435.81L611.2 435.95L611.7 435.85L612.2 436.03L612.7 435.99L613.2 435.82L613.7 435.85L614.2 436.1L614.7 435.85L615.2 435.94L615.7 436L616.2 435.87L616.7 435.83L617.2 436.09L617.7 435.96L618.2 435.84L618.7 435.93L619.2 435.99L619.7 436.11L620.2 436.05L620.7 435.93L621.2 436.09L621.7 435.94L622.2 436.09L622.7 435.97L623.2 436.02L623.7 435.95L624.2 436.04L624.7 435.85L625.2 435.88L625.7 436.06L626.2 435.86L626.7 436.05L627.2 435.99L627.7 436.02L628.2 435.95L628.7 436.07L629.2 436.04L629.7 435.94L630.2 435.91L630.7 436L631.2 435.87L631.7 435.91L632.2 436.08L632.7 436.06L633.2 436L633.7 436.08L634.2 435.96L634.7 436.11L635.2 436.09L635.7 436.11L636.2 436.13L636.7 435.9L637.2 435.95L637.7 435.89L638.2 436.1L638.7 435.95L639.2 435.97L639.7 436.05L640.2 436.11L640.7 436.08L641.2 435.9L641.7 435.89L642.2 436.06L642.7 435.93L643.2 436.15L643.7 436.06L644.2 436.11L644.7 435.92L645.2 436.05L645.7 435.96L646.2 436.15L646.7 435.92L647.2 435.96L647.7 436.07L648.2 435.91L648.7 436.1L649.2 436.08L649.7 436.17L650.2 435.93L650.7 435.92L651.2 436.11L651.7 435.92L652.2 436.07L652.7 436.06L653.2 435.93L653.7 435.96L654.2 435.96L654.7 436.02L655.2 436.09L655.7 435.97L656.2 436.12L656.7 436.11L657.2 436.17L657.7 436.09L658.2 435.95L658.7 436.11L659.2 436.16L659.7 436L660.2 436.12L660.7 436.02L661.2 435.99L661.7 436.01L662.2 435.97L662.7 436.04L663.2 436L663.7 436.12L664.2 436.15L664.7 436.04L665.2 436.09L665.7 436.06L666.2 435.98L666.7 435.94L667.2 436.07L667.7 435.98L668.2 436.18L668.7 436.16L669.2 435.95L669.7 435.96L670.2 435.98L670.7 436.13L671.2 435.96L671.7 436.05L672.2 436.14L672.7 436.16L673.2 436.13L673.7 436.04L674.2 436.2L674.7 436.03L675.2 436.12L675.7 436.01L676.2 436.19L676.7 436.1L677.2 436.05L677.7 436.16L678.2 436.1L678.7 436.13L679.2 436.13L679.7 436.12L680.2 436L680.7 436.12L681.2 436.03L681.7 436.21L682.2 436.11L682.7 436.11L683.2 436.1L683.7 436.21L684.2 436.06L684.7 436.19L685.2 436.12L685.7 436.18L686.2 436.09L686.7 436.19L687.2 436.02L687.7 436.17L688.2 435.99L688.7 436.1L689.2 436L689.7 436L690.2 436.02L690.7 436.03L691.2 436.12L691.7 436.02L692.2 436.17L692.7 436.1L693.2 436.19L693.7 436.05L694.2 436.21L694.7 436.05L695.2 436.03L695.7 436.08L696.2 436.08L696.7 436.13L697.2 436.13L697.7 436.12L698.2 436.22L698.7 436.11L699.2 436.05L699.7 436.12L700.2 436.12L700.7 436.2L701.2 436.21L701.7 436.11L702.2 436.08L702.7 436.06L703.2 436.11L703.7 436.12L704.2 436.02L704.7 436.04L705.2 436.07L705.7 436.19L706.2 436.12L706.7 436.03L707.2 436.06L707.7 436.22L708.2 436.07L708.7 436.03L709.2 436.05L709.7 436.12L710.2 436.19L710.7 436.12L711.2 436.23L711.7 436.2L712.2 436.09L712.7 436.2L713.2 436.21L713.7 436.1L714.2 436.05L714.7 436.11L715.2 436.22L715.7 436.1L716.2 436.07L716.7 436.03L717.2 436.16L717.7 436.15L718.2 436.08L718.7 436.07L719.2 436.11L719.7 436.12L720.2 436.18L720.7 436.24L721.2 436.11L721.7 436.14L722.2 436.22L722.7 436.11L723.2 436.25L723.7 436.23L724.2 436.2L724.7 436.12L725.2 436.12L725.7 436.22L726.2 436.2L726.7 436.23L727.2 436.07L727.7 436.17L728.2 436.25L728.7 436.13L729.2 436.12L729.7 436.06L730.2 436.2L730.7 436.25L731.2 436.17L731.7 436.24L732.2 436.25L732.7 436.06L733.2 436.22L733.7 436.15L733.7 437.08L733.2 437.07L732.7 436.97L732.2 437.06L731.7 437.11L731.2 436.99L730.7 437.06L730.2 437.14L729.7 437.1L729.2 437.04L728.7 437.02L728.2 437.08L727.7 437L727.2 437.11L726.7 437.08L726.2 436.98L725.7 437.15L725.2 437.05L724.7 436.99L724.2 437.08L723.7 437.03L723.2 437.03L722.7 436.96L722.2 437L721.7 437.15L721.2 437.05L720.7 436.99L720.2 436.95L719.7 437.1L719.2 437.17L718.7 437.01L718.2 436.97L717.7 437L717.2 437.12L716.7 437.08L716.2 437.02L715.7 437.04L715.2 437.18L714.7 437.15L714.2 437.08L713.7 437.04L713.2 437.08L712.7 437.13L712.2 437.16L711.7 437.17L711.2 437L710.7 437.03L710.2 437.02L709.7 437.17L709.2 437L708.7 437.03L708.2 437L707.7 437.04L707.2 437.18L706.7 437L706.2 437.18L705.7 437.19L705.2 437.15L704.7 437.19L704.2 437L703.7 437.06L703.2 436.98L702.7 437.15L702.2 436.99L701.7 436.98L701.2 437.07L700.7 437.07L700.2 437L699.7 437.02L699.2 437.15L698.7 437.03L698.2 437.12L697.7 437.08L697.2 437.13L696.7 437.11L696.2 437.05L695.7 437.11L695.2 437.01L694.7 436.99L694.2 437.11L693.7 437.19L693.2 437.04L692.7 437.07L692.2 437.08L691.7 437.03L691.2 437.18L690.7 437.04L690.2 437.02L689.7 437.13L689.2 437.08L688.7 437L688.2 437.22L687.7 437.02L687.2 437.22L686.7 437.1L686.2 437.21L685.7 437.06L685.2 437.11L684.7 437.14L684.2 437.21L683.7 437.12L683.2 437.03L682.7 437.2L682.2 437.19L681.7 437.21L681.2 437.04L680.7 437.04L680.2 437.24L679.7 437.1L679.2 437.13L678.7 437.23L678.2 437.07L677.7 437.17L677.2 437.02L676.7 437.13L676.2 437.02L675.7 437.13L675.2 437.05L674.7 437.05L674.2 437.08L673.7 437.05L673.2 437.15L672.7 437.05L672.2 437.1L671.7 437.16L671.2 437.03L670.7 437.2L670.2 437.12L669.7 437.1L669.2 437.15L668.7 437.06L668.2 437.08L667.7 437.24L667.2 437.22L666.7 437.04L666.2 437.18L665.7 437.07L665.2 437.26L664.7 437.1L664.2 437.24L663.7 437.08L663.2 437.07L662.7 437.11L662.2 437.09L661.7 437.05L661.2 437.23L660.7 437.19L660.2 437.13L659.7 437.13L659.2 437.15L658.7 437.04L658.2 437.28L657.7 437.28L657.2 437.17L656.7 437.04L656.2 437.22L655.7 437.05L655.2 437.12L654.7 437.11L654.2 437.23L653.7 437.22L653.2 437.08L652.7 437.16L652.2 437.1L651.7 437.28L651.2 437.16L650.7 437.04L650.2 437.2L649.7 437.23L649.2 437.11L648.7 437.22L648.2 437.2L647.7 437.11L647.2 437.28L646.7 437.11L646.2 437.05L645.7 437.05L645.2 437.26L644.7 437.05L644.2 437.14L643.7 437.29L643.2 437.17L642.7 437.16L642.2 437.27L641.7 437.1L641.2 437.08L640.7 437.14L640.2 437.05L639.7 437.14L639.2 437.15L638.7 437.06L638.2 437.31L637.7 437.14L637.2 437.33L636.7 437.3L636.2 437.16L635.7 437.07L635.2 437.32L634.7 437.16L634.2 437.32L633.7 437.17L633.2 437.11L632.7 437.32L632.2 437.27L631.7 437.12L631.2 437.15L630.7 437.12L630.2 437.27L629.7 437.12L629.2 437.18L628.7 437.07L628.2 437.33L627.7 437.14L627.2 437.26L626.7 437.07L626.2 437.27L625.7 437.14L625.2 437.21L624.7 437.26L624.2 437.2L623.7 437.07L623.2 437.14L622.7 437.24L622.2 437.09L621.7 437.28L621.2 437.15L620.7 437.17L620.2 437.35L619.7 437.31L619.2 437.24L618.7 437.3L618.2 437.29L617.7 437.28L617.2 437.13L616.7 437.16L616.2 437.34L615.7 437.36L615.2 437.09L614.7 437.23L614.2 437.3L613.7 437.1L613.2 437.34L612.7 437.22L612.2 437.17L611.7 437.16L611.2 437.28L610.7 437.13L610.2 437.18L609.7 437.2L609.2 437.26L608.7 437.22L608.2 437.37L607.7 437.18L607.2 437.13L606.7 437.13L606.2 437.15L605.7 437.41L605.2 437.17L604.7 437.39L604.2 437.16L603.7 437.23L603.2 437.2L602.7 437.19L602.2 437.34L601.7 437.22L601.2 437.15L600.7 437.13L600.2 437.32L599.7 437.26L599.2 437.13L598.7 437.29L598.2 437.41L597.7 437.38L597.2 437.43L596.7 437.18L596.2 437.21L595.7 437.42L595.2 437.39L594.7 437.14L594.2 437.27L593.7 437.32L593.2 437.26L592.7 437.23L592.2 437.36L591.7 437.17L591.2 437.38L590.7 437.41L590.2 437.25L589.7 437.24L589.2 437.3L588.7 437.15L588.2 437.44L587.7 437.38L587.2 437.31L586.7 437.19L586.2 437.32L585.7 437.34L585.2 437.47L584.7 437.24L584.2 437.48L583.7 437.31L583.2 437.47L582.7 437.22L582.2 437.2L581.7 437.32L581.2 437.26L580.7 437.4L580.2 437.25L579.7 437.17L579.2 437.27L578.7 437.25L578.2 437.19L577.7 437.38L577.2 437.41L576.7 437.3L576.2 437.51L575.7 437.25L575.2 437.27L574.7 437.27L574.2 437.2L573.7 437.37L573.2 437.45L572.7 437.18L572.2 437.43L571.7 437.41L571.2 437.49L570.7 437.32L570.2 437.2L569.7 437.44L569.2 437.52L568.7 437.49L568.2 437.5L567.7 437.39L567.2 437.5L566.7 437.43L566.2 437.51L565.7 437.44L565.2 437.26L564.7 437.33L564.2 437.54L563.7 437.46L563.2 437.41L562.7 437.3L562.2 437.22L561.7 437.37L561.2 437.32L560.7 437.41L560.2 437.41L559.7 437.37L559.2 437.36L558.7 437.6L558.2 437.44L557.7 437.6L557.2 437.41L556.7 437.41L556.2 437.33L555.7 437.5L555.2 437.57L554.7 437.31L554.2 437.54L553.7 437.3L553.2 437.39L552.7 437.5L552.2 437.59L551.7 437.65L551.2 437.46L550.7 437.6L550.2 437.44L549.7 437.31L549.2 437.46L548.7 437.49L548.2 437.28L547.7 437.28L547.2 437.35L546.7 437.4L546.2 437.41L545.7 437.37L545.2 437.35L544.7 437.39L544.2 437.34L543.7 437.68L543.2 437.44L542.7 437.66L542.2 437.67L541.7 437.65L541.2 437.71L540.7 437.49L540.2 437.33L539.7 437.62L539.2 437.72L538.7 437.43L538.2 437.72L537.7 437.38L537.2 437.67L536.7 437.45L536.2 437.77L535.7 437.78L535.2 437.57L534.7 437.49L534.2 437.54L533.7 437.35L533.2 437.5L532.7 437.51L532.2 437.55L531.7 437.75L531.2 437.59L530.7 437.81L530.2 437.82L529.7 437.44L529.2 437.71L528.7 437.81L528.2 437.7L527.7 437.5L527.2 437.6L526.7 437.46L526.2 437.86L525.7 437.53L525.2 437.83L524.7 437.87L524.2 437.68L523.7 437.76L523.2 437.67L522.7 437.65L522.2 437.81L521.7 437.69L521.2 437.58L520.7 437.73L520.2 437.85L519.7 437.72L519.2 437.74L518.7 437.7L518.2 437.88L517.7 437.56L517.2 437.48L516.7 437.76L516.2 437.97L515.7 437.97L515.2 437.74L514.7 437.99L514.2 437.73L513.7 437.83L513.2 437.67L512.7 437.63L512.2 438.01L511.7 438.05L511.2 437.9L510.7 437.54L510.2 437.86L509.7 437.93L509.2 438.03L508.7 438.03L508.2 437.65L507.7 437.67L507.2 438.14L506.7 437.82L506.2 438.07L505.7 438.07L505.2 437.89L504.7 438.09L504.2 438.02L503.7 438.12L503.2 437.93L502.7 438.2L502.2 437.77L501.7 437.79L501.2 437.89L500.7 438.3L500.2 437.96L499.7 438.13L499.2 437.87L498.7 437.71L498.2 438.05L497.7 438.21L497.2 438.27L496.7 438.41L496.2 437.89L495.7 438.29L495.2 438.3L494.7 438.03L494.2 438.29L493.7 438.59L493.2 438.02L492.7 438.45L492.2 439.84L491.7 439.03L491.2 439L490.7 438.45L490.2 438.5L489.7 438.74L489.2 437.99L488.7 438.17L488.2 438.02L487.7 438.62L487.2 438.22L486.7 438.07L486.2 438L485.7 438.1L485.2 438.04L484.7 438.54L484.2 438.36L483.7 438.73L483.2 438.74L482.7 438.11L482.2 438.64L481.7 438.73L481.2 438.64L480.7 438.53L480.2 438.41L479.7 438.65L479.2 438.43L478.7 438.37L478.2 439.13L477.7 438.69L477.2 439.19L476.7 439.25L476.2 438.83L475.7 439.32L475.2 438.68L474.7 439.3L474.2 438.6L473.7 439.04L473.2 439.33L472.7 438.92L472.2 439.84L471.7 439.54L471.2 439.55L470.7 439.98L470.2 439.4L469.7 439.66L469.2 439.33L468.7 439.77L468.2 440L467.7 439.81L467.2 440.31L466.7 439.4L466.2 439.75L465.7 440.84L465.2 440.45L464.7 440.79L464.2 440.19L463.7 440.87L463.2 440.8L462.7 440.78L462.2 440.96L461.7 441.87L461.2 442.13L460.7 442.66L460.2 441.1L459.7 441.81L459.2 441.44L458.7 442.86L458.2 445.19L457.7 443.34L457.2 446.48L456.7 449.06L456.2 450.82L455.7 453.14L455.2 456.22L454.7 453.24L454.2 442.48Z" fill="#f0a52c" />
<text x="730.4" y="422.13" font-size="6" fill="#a9a5a1" text-anchor="end" stroke="#a9a5a1" stroke-width="0.14" >100 % / 2.05 s</text>
<rect x="455" y="460.4" width="5" height="5" fill="#fbb02f" />
<text x="464.6" y="465.13" font-size="6" fill="#a9a5a1" stroke="#a9a5a1" stroke-width="0.14" >Attack</text>
<text x="464" y="473.73" font-size="6" fill="#fbb02f" font-weight="700" transform="translate(464 0) scale(0.9 1) translate(-464 0)" >0.06 ms</text>
<text x="493.8" y="465.13" font-size="6" fill="#a9a5a1" stroke="#a9a5a1" stroke-width="0.14" >Decay</text>
<text x="493.2" y="473.73" font-size="6" fill="#fbb02f" font-weight="700" transform="translate(493.2 0) scale(0.9 1) translate(-493.2 0)" >17.0 s</text>
<text x="524.2" y="465.13" font-size="6" fill="#a9a5a1" stroke="#a9a5a1" stroke-width="0.14" >Size</text>
<text x="521.8" y="473.73" font-size="6" fill="#fbb02f" font-weight="700" transform="translate(521.8 0) scale(0.9 1) translate(-521.8 0)" >188 %</text>
<text x="650.2" y="465.13" font-size="6" fill="#a9a5a1" stroke="#a9a5a1" stroke-width="0.14" >Delay</text>
<text x="647.8" y="473.73" font-size="6" fill="#7fcbdb" font-weight="700" transform="translate(647.8 0) scale(0.9 1) translate(-647.8 0)" >0.00 ms</text>
<text x="682.4" y="465.13" font-size="6" fill="#a9a5a1" stroke="#a9a5a1" stroke-width="0.14" >Mod</text>
<text x="681.8" y="473.73" font-size="6" fill="#7fcbdb" font-weight="700" transform="translate(681.8 0) scale(0.9 1) translate(-681.8 0)" >50 %</text>
<text x="710.2" y="465.13" font-size="6" fill="#a9a5a1" stroke="#a9a5a1" stroke-width="0.14" >Bass X</text>
<text x="709.6" y="473.73" font-size="6" fill="#7fcbdb" font-weight="700" transform="translate(709.6 0) scale(0.9 1) translate(-709.6 0)" >440 Hz</text>
<line x1="546" y1="458.4" x2="546" y2="475.4" stroke="#4d4946" stroke-width="0.6" />
<line x1="579" y1="458.4" x2="579" y2="475.4" stroke="#4d4946" stroke-width="0.6" />
<line x1="552.2" y1="463" x2="572" y2="463" stroke="#a9a5a1" stroke-width="0.6" />
<circle cx="556.6" cy="463" r="1.5" fill="#fbb02f" />
<circle cx="562.4" cy="463" r="1.5" fill="#fbb02f" />
<circle cx="568.6" cy="463" r="1.5" fill="#6cc3d5" />
<path d="M559.4 463v2.6h11.8v-2.6" fill="none" stroke="#a9a5a1" stroke-width="0.5" />
<text x="549.4" y="473.73" font-size="6" fill="#fbb02f" font-weight="700" transform="translate(549.4 0) scale(0.9 1) translate(-549.4 0)" >Serial</text>
<path d="M572.6 470.8h2.4l-1.2 1.6z" fill="#fbb02f" />
<text x="583" y="465.13" font-size="6" fill="#a9a5a1" stroke="#a9a5a1" stroke-width="0.14" >Algorithm</text>
<text x="583" y="473.73" font-size="6" fill="#7fcbdb" font-weight="700" transform="translate(583 0) scale(0.9 1) translate(-583 0)" >Dark Hall</text>
<path d="M615.4 470.8h2.4l-1.2 1.6z" fill="#c9c5c2" />
<text x="622.8" y="465.13" font-size="6" fill="#a9a5a1" stroke="#a9a5a1" stroke-width="0.14" >Freeze</text>
<rect x="624" y="468.2" width="6.8" height="6.8" fill="none" stroke="#c9c5c2" stroke-width="0.6" />
<path d="M625.4 471.6h3.4M627.6 470.2l1.4 1.4l-1.4 1.4" fill="none" stroke="#c9c5c2" stroke-width="0.5" />
<rect x="632.8" y="468.2" width="7" height="6.8" fill="#2f6f80" stroke="#7fcbdb" stroke-width="0.6" />
<path d="M634.2 471.6h4.2M636.3 469.6v4" fill="none" stroke="#d8f0f6" stroke-width="0.5" />
<text x="435" y="421.9" font-size="6.2" fill="#211e1c" text-anchor="middle" stroke="#211e1c" stroke-width="0.14" >Send</text>
<path d="M430.4 435.1A6.5 6.5 0 1 1 439.6 435.1" fill="none" stroke="#2b2826" stroke-width="1.45" />
<path d="M430.4 435.1A6.5 6.5 0 1 1 439.6 435.1" fill="none" stroke="#93d3df" stroke-width="1.95" />
<line x1="435.69" y1="431.19" x2="439.81" y2="435.31" stroke="#2b2826" stroke-width="1.55" />
<text x="435" y="442.03" font-size="6" fill="#211e1c" text-anchor="middle" stroke="#211e1c" stroke-width="0.14" >-0.5 dB</text>
<text x="435" y="453.1" font-size="6.2" fill="#211e1c" text-anchor="middle" stroke="#211e1c" stroke-width="0.14" >Predelay</text>
<path d="M430.4 466.3A6.5 6.5 0 1 1 439.6 466.3" fill="none" stroke="#2b2826" stroke-width="1.45" />
<path d="M430.4 466.3A6.5 6.5 0 0 1 429.8 465.6" fill="none" stroke="#93d3df" stroke-width="1.95" />
<line x1="434.22" y1="462.29" x2="429.56" y2="465.78" stroke="#2b2826" stroke-width="1.55" />
<text x="435" y="473.23" font-size="6" fill="#211e1c" text-anchor="middle" stroke="#211e1c" stroke-width="0.14" >0.26 ms</text>
<rect x="421.6" y="478.2" width="11.6" height="6.4" fill="#fbb02f" stroke="#8a5a10" stroke-width="0.5" />
<text x="427.4" y="483.46" font-size="5.8" fill="#3a2a08" text-anchor="middle" stroke="#3a2a08" stroke-width="0.14" >ms</text>
<rect x="435.4" y="478.2" width="11.5" height="6.4" fill="#d4d0cd" stroke="#4a4643" stroke-width="0.5" />
<text x="441.2" y="483.59" font-size="5.6" fill="#211e1c" text-anchor="middle" stroke="#211e1c" stroke-width="0.14" style="font-family:'Liberation Sans','DejaVu Sans',sans-serif">♪</text>
<text x="434.4" y="497.8" font-size="6.2" fill="#211e1c" text-anchor="middle" stroke="#211e1c" stroke-width="0.14" >Feedback</text>
<rect x="421.6" y="500" width="25.3" height="6.5" fill="#e4e1de" stroke="#4a4643" stroke-width="0.6" />
<rect x="422" y="500.4" width="4.4" height="5.7" fill="#7ccde0" />
<text x="435.6" y="505.53" font-size="6" fill="#211e1c" text-anchor="middle" stroke="#211e1c" stroke-width="0.14" >17 %</text>
<rect x="451.4" y="478.8" width="93" height="30.2" fill="#9b928c" />
<text x="453.8" y="487.1" font-size="6.2" fill="#211e1c" stroke="#211e1c" stroke-width="0.14" >Convolution IR</text>
<rect x="525.6" y="481.6" width="16.6" height="6.3" fill="#e4e1de" rx="3.1" stroke="#4a4643" stroke-width="0.6" />
<line x1="533.9" y1="481.6" x2="533.9" y2="487.9" stroke="#4a4643" stroke-width="0.5" />
<path d="M531.0 483.4l-2.2 1.4l2.2 1.4zM536.8 483.4l2.2 1.4l-2.2 1.4z" fill="#2b2826" />
<rect x="453.4" y="491" width="89" height="6.5" fill="#e4e1de" stroke="#4a4643" stroke-width="0.6" />
<text x="455" y="496.13" font-size="6" fill="#211e1c" stroke="#211e1c" stroke-width="0.14" >Chambers and Large Rooms</text>
<path d="M537.4 493.2h3l-1.5 2.2z" fill="#2b2826" />
<rect x="453.4" y="500" width="89" height="6.5" fill="#e4e1de" stroke="#4a4643" stroke-width="0.6" />
<text x="455" y="505.13" font-size="6" fill="#211e1c" stroke="#211e1c" stroke-width="0.14" >Concrete Bar LR</text>
<path d="M537.4 502.2h3l-1.5 2.2z" fill="#2b2826" />
<rect x="546" y="478.8" width="32.4" height="30.2" fill="#9b928c" />
<text x="562.4" y="485.4" font-size="6.2" fill="#211e1c" text-anchor="middle" stroke="#211e1c" stroke-width="0.14" >Blend</text>
<path d="M557.8 498.6A6.5 6.5 0 1 1 567 498.6" fill="none" stroke="#2b2826" stroke-width="1.45" />
<path d="M557.8 498.6A6.5 6.5 0 0 1 558.66 488.68" fill="none" stroke="#93d3df" stroke-width="1.95" />
<line x1="561.84" y1="493.2" x2="558.49" y2="488.44" stroke="#2b2826" stroke-width="1.55" />
<text x="562.4" y="505.53" font-size="6" fill="#211e1c" text-anchor="middle" stroke="#211e1c" stroke-width="0.14" >63/37</text>
<rect x="580" y="478.8" width="156.8" height="30.2" fill="#9b928c" />
<text x="597.8" y="485.4" font-size="6.2" fill="#211e1c" text-anchor="middle" stroke="#211e1c" stroke-width="0.14" >Decay</text>
<path d="M593.2 498.6A6.5 6.5 0 1 1 602.4 498.6" fill="none" stroke="#2b2826" stroke-width="1.45" />
<path d="M593.2 498.6A6.5 6.5 0 0 1 596.28 487.68" fill="none" stroke="#93d3df" stroke-width="1.95" />
<line x1="597.57" y1="493.05" x2="596.21" y2="487.39" stroke="#2b2826" stroke-width="1.55" />
<text x="597.8" y="505.53" font-size="6" fill="#211e1c" text-anchor="middle" stroke="#211e1c" stroke-width="0.14" >3.05 s</text>
<text x="628" y="485.4" font-size="6.2" fill="#211e1c" text-anchor="middle" stroke="#211e1c" stroke-width="0.14" >Size</text>
<path d="M623.4 498.6A6.5 6.5 0 1 1 632.6 498.6" fill="none" stroke="#2b2826" stroke-width="1.45" />
<path d="M623.4 498.6A6.5 6.5 0 1 1 633.43 490.43" fill="none" stroke="#93d3df" stroke-width="1.95" />
<line x1="628.81" y1="493.46" x2="633.68" y2="490.27" stroke="#2b2826" stroke-width="1.55" />
<text x="628" y="505.53" font-size="6" fill="#211e1c" text-anchor="middle" stroke="#211e1c" stroke-width="0.14" >67 %</text>
<text x="658.2" y="485.4" font-size="6.2" fill="#211e1c" text-anchor="middle" stroke="#211e1c" stroke-width="0.14" >Damping</text>
<path d="M653.6 498.6A6.5 6.5 0 1 1 662.8 498.6" fill="none" stroke="#2b2826" stroke-width="1.45" />
<path d="M653.6 498.6A6.5 6.5 0 0 1 662.42 489.06" fill="none" stroke="#93d3df" stroke-width="1.95" />
<line x1="658.83" y1="493.26" x2="662.62" y2="488.83" stroke="#2b2826" stroke-width="1.55" />
<text x="658.2" y="505.53" font-size="6" fill="#211e1c" text-anchor="middle" stroke="#211e1c" stroke-width="0.14" >62 %</text>
<text x="688.4" y="485.4" font-size="6.2" fill="#211e1c" text-anchor="middle" stroke="#211e1c" stroke-width="0.14" >Shape</text>
<path d="M683.8 498.6A6.5 6.5 0 1 1 693 498.6" fill="none" stroke="#2b2826" stroke-width="1.45" />
<path d="M683.8 498.6A6.5 6.5 0 0 1 682.39 491.51" fill="none" stroke="#93d3df" stroke-width="1.95" />
<line x1="687.5" y1="493.63" x2="682.12" y2="491.4" stroke="#2b2826" stroke-width="1.55" />
<text x="688.4" y="505.53" font-size="6" fill="#211e1c" text-anchor="middle" stroke="#211e1c" stroke-width="0.14" >25.4</text>
<text x="718.8" y="485.4" font-size="6.2" fill="#211e1c" text-anchor="middle" stroke="#211e1c" stroke-width="0.14" >Bass Mult</text>
<path d="M714.2 498.6A6.5 6.5 0 1 1 723.4 498.6" fill="none" stroke="#2b2826" stroke-width="1.45" />
<path d="M714.2 498.6A6.5 6.5 0 0 1 718.8 487.5" fill="none" stroke="#93d3df" stroke-width="1.95" />
<line x1="718.8" y1="493.02" x2="718.8" y2="487.2" stroke="#2b2826" stroke-width="1.55" />
<text x="718.8" y="505.53" font-size="6" fill="#211e1c" text-anchor="middle" stroke="#211e1c" stroke-width="0.14" >100 %</text>
<rect x="738.2" y="478.8" width="30.4" height="30.5" fill="#9b928c" />
<text x="753.2" y="421.9" font-size="6.2" fill="#211e1c" text-anchor="middle" stroke="#211e1c" stroke-width="0.14" >Stereo</text>
<path d="M748.6 435.1A6.5 6.5 0 1 1 757.8 435.1" fill="none" stroke="#2b2826" stroke-width="1.45" />
<path d="M748.6 435.1A6.5 6.5 0 1 1 759.41 428.59" fill="none" stroke="#93d3df" stroke-width="1.95" />
<line x1="754.13" y1="430.21" x2="759.7" y2="428.5" stroke="#2b2826" stroke-width="1.55" />
<text x="753.2" y="442.03" font-size="6" fill="#211e1c" text-anchor="middle" stroke="#211e1c" stroke-width="0.14" >154 %</text>
<text x="753.2" y="450.2" font-size="6.2" fill="#211e1c" text-anchor="middle" stroke="#211e1c" stroke-width="0.14" >Vintage</text>
<rect x="740.8" y="452.4" width="25.2" height="6.4" fill="#e4e1de" stroke="#4a4643" stroke-width="0.6" />
<rect x="741.2" y="452.8" width="12.4" height="5.6" fill="#7ccde0" />
<text x="753.4" y="457.93" font-size="6" fill="#211e1c" text-anchor="middle" stroke="#211e1c" stroke-width="0.14" >Old</text>
<text x="753.2" y="467.5" font-size="6.2" fill="#211e1c" text-anchor="middle" stroke="#211e1c" stroke-width="0.14" >Bass</text>
<rect x="740.8" y="469.4" width="25.2" height="6.4" fill="#d4d0cd" stroke="#4a4643" stroke-width="0.6" />
<text x="753.4" y="474.93" font-size="6" fill="#211e1c" text-anchor="middle" stroke="#211e1c" stroke-width="0.14" >Mono</text>
<text x="753.2" y="485.4" font-size="6.2" fill="#211e1c" text-anchor="middle" stroke="#211e1c" stroke-width="0.14" >Dry/Wet</text>
<path d="M748.6 498.6A6.5 6.5 0 1 1 757.8 498.6" fill="none" stroke="#2b2826" stroke-width="1.45" />
<path d="M748.6 498.6A6.5 6.5 0 0 1 750.53 488.08" fill="none" stroke="#93d3df" stroke-width="1.95" />
<line x1="752.8" y1="493.11" x2="750.4" y2="487.8" stroke="#2b2826" stroke-width="1.55" />
<text x="753.2" y="505.53" font-size="6" fill="#211e1c" text-anchor="middle" stroke="#211e1c" stroke-width="0.14" >41 %</text>
<rect x="771.2" y="446.4" width="3.2" height="1.3" fill="#3a3633" />
<rect x="771.2" y="448.7" width="3.2" height="1.3" fill="#3a3633" />
<rect x="771.2" y="451" width="3.2" height="1.3" fill="#3a3633" />
<rect x="771.2" y="453.8" width="3.2" height="14.8" fill="#78c043" />
<defs><clipPath id="eq8"><rect x="775" y="404" width="74" height="106"/></clipPath></defs>
<g clip-path="url(#eq8)">
<rect x="775.8" y="404.8" width="77.2" height="104.5" fill="#aca49d" rx="1.5" />
<rect x="775.8" y="404.8" width="77.2" height="9.6" fill="#b3aba4" rx="1.5" />
<circle cx="781" cy="409.5" r="3.6" fill="#fbb02f" stroke="#c48a20" stroke-width="0.7" />
<circle cx="790" cy="409.5" r="3.1" fill="#dedbd8" stroke="#2b2826" stroke-width="0.7" />
<path d="M788.2 410.8l1.8-2.8l1.8 2.8z" fill="#2b2826" />
<text x="796.4" y="411.97" font-size="6.4" fill="#211e1c" font-weight="700" transform="translate(796.4 0) scale(0.9 1) translate(-796.4 0)" >EQ Eight</text>
<rect x="776.4" y="415" width="28" height="94" fill="#9b928c" />
<rect x="805.6" y="415" width="24" height="94" fill="#a39a94" />
<rect x="831" y="415" width="22" height="94" fill="#a39a94" />
<text x="779.2" y="437.2" font-size="6.2" fill="#211e1c" stroke="#211e1c" stroke-width="0.14" >Analyze</text>
<text x="779.2" y="446.8" font-size="6.2" fill="#211e1c" stroke="#211e1c" stroke-width="0.14" >Block</text>
<rect x="778.8" y="448.8" width="23.4" height="6.4" fill="#e4e1de" stroke="#4a4643" stroke-width="0.6" />
<text x="780" y="454.33" font-size="6" fill="#211e1c" stroke="#211e1c" stroke-width="0.14" >8192</text>
<path d="M797.2 451.0h3l-1.5 2.2z" fill="#2b2826" />
<text x="779.2" y="464.4" font-size="6.2" fill="#211e1c" stroke="#211e1c" stroke-width="0.14" >Refresh</text>
<rect x="778.8" y="466.6" width="23.4" height="6.4" fill="#e4e1de" stroke="#4a4643" stroke-width="0.6" />
<rect x="779.2" y="467" width="3.2" height="5.6" fill="#7ccde0" />
<text x="791.6" y="472.13" font-size="6" fill="#211e1c" text-anchor="middle" stroke="#211e1c" stroke-width="0.14" >60.00</text>
<text x="779.2" y="481.7" font-size="6.2" fill="#211e1c" stroke="#211e1c" stroke-width="0.14" >Avg</text>
<rect x="778.8" y="483.6" width="23.4" height="6.4" fill="#e4e1de" stroke="#4a4643" stroke-width="0.6" />
<text x="791" y="489.13" font-size="6" fill="#211e1c" text-anchor="middle" stroke="#211e1c" stroke-width="0.14" >1.00</text>
<text x="817.8" y="420.6" font-size="6.2" fill="#211e1c" text-anchor="middle" stroke="#211e1c" stroke-width="0.14" >Freq</text>
<path d="M813.27 433.33A6.4 6.4 0 1 1 822.33 433.33" fill="none" stroke="#2b2826" stroke-width="1.45" />
<path d="M813.27 433.33A6.4 6.4 0 0 1 812.29 425.54" fill="none" stroke="#93d3df" stroke-width="1.95" />
<line x1="816.97" y1="428.31" x2="812.03" y2="425.39" stroke="#2b2826" stroke-width="1.55" />
<text x="817.8" y="441.13" font-size="6" fill="#211e1c" text-anchor="middle" stroke="#211e1c" stroke-width="0.14" >78.1 Hz</text>
<text x="817.8" y="448.2" font-size="6.2" fill="#211e1c" text-anchor="middle" stroke="#211e1c" stroke-width="0.14" >Gain</text>
<path d="M813.27 463.53A6.4 6.4 0 1 1 822.33 463.53" fill="none" stroke="#7d7773" stroke-width="0.9" />
<line x1="817.8" y1="458.04" x2="817.8" y2="452.3" stroke="#7d7773" stroke-width="1" />
<text x="817.8" y="472.13" font-size="6" fill="#211e1c" text-anchor="middle" stroke="#211e1c" stroke-width="0.14" >0.00 dB</text>
<text x="817.8" y="479.8" font-size="6.2" fill="#211e1c" text-anchor="middle" font-weight="700" transform="translate(817.8 0) scale(0.9 1) translate(-817.8 0)" >Q</text>
<rect x="807.6" y="482" width="20" height="6.4" fill="#e4e1de" stroke="#4a4643" stroke-width="0.6" />
<rect x="808" y="482.4" width="8" height="5.6" fill="#7ccde0" />
<text x="817.8" y="487.53" font-size="6" fill="#211e1c" text-anchor="middle" stroke="#211e1c" stroke-width="0.14" >1.24</text>
<rect x="807.6" y="492.4" width="20" height="6.4" fill="#e4e1de" stroke="#4a4643" stroke-width="0.6" />
<path d="M810 497v-1.6q0-1.4 1.4-1.4h6.4" fill="none" stroke="#2b2826" stroke-width="0.6" />
<path d="M822.6 494.6h3l-1.5 2.2z" fill="#2b2826" />
<rect x="811.6" y="501.4" width="5.4" height="5.8" fill="#7ccde0" stroke="#4a4643" stroke-width="0.6" />
<text x="822.4" y="506.53" font-size="6" fill="#211e1c" text-anchor="middle" stroke="#211e1c" stroke-width="0.14" >1</text>
<text x="844.4" y="420.6" font-size="6.2" fill="#211e1c" text-anchor="middle" stroke="#211e1c" stroke-width="0.14" >Freq</text>
<path d="M839.87 433.33A6.4 6.4 0 1 1 848.93 433.33" fill="none" stroke="#2b2826" stroke-width="1.45" />
<path d="M839.87 433.33A6.4 6.4 0 0 1 841.49 423.1" fill="none" stroke="#f0eeec" stroke-width="1.95" />
<line x1="843.96" y1="427.94" x2="841.36" y2="422.83" stroke="#2b2826" stroke-width="1.55" />
<text x="844.4" y="441.13" font-size="6" fill="#211e1c" text-anchor="middle" stroke="#211e1c" stroke-width="0.14" >251 Hz</text>
<text x="844.4" y="448.2" font-size="6.2" fill="#211e1c" text-anchor="middle" stroke="#211e1c" stroke-width="0.14" >Gain</text>
<path d="M839.87 463.53A6.4 6.4 0 1 1 848.93 463.53" fill="none" stroke="#7d7773" stroke-width="1" />
<path d="M840.72 453.76A6.4 6.4 0 0 1 844.4 452.6" fill="none" stroke="#f0eeec" stroke-width="1.5" />
<line x1="843.85" y1="458.21" x2="840.55" y2="453.52" stroke="#7d7773" stroke-width="1.1" />
<text x="844.4" y="472.13" font-size="6" fill="#211e1c" text-anchor="middle" stroke="#211e1c" stroke-width="0.14" >-4.05 dB</text>
<text x="844.4" y="479.8" font-size="6.2" fill="#211e1c" text-anchor="middle" font-weight="700" transform="translate(844.4 0) scale(0.9 1) translate(-844.4 0)" >Q</text>
<rect x="833.6" y="482" width="21.4" height="6.4" fill="#c9c5c2" stroke="#4a4643" stroke-width="0.6" />
<text x="840.8" y="487.53" font-size="6" fill="#211e1c" text-anchor="middle" stroke="#211e1c" stroke-width="0.14" >1.00</text>
<rect x="833.6" y="492.4" width="21.4" height="6.4" fill="#c9c5c2" stroke="#4a4643" stroke-width="0.6" />
<path d="M836.4 495.6q3-3.4 6 0q-3 3.4-6 0z" fill="none" stroke="#2b2826" stroke-width="0.6" />
<rect x="838.6" y="501.4" width="5.4" height="5.8" fill="#d4d0cd" stroke="#4a4643" stroke-width="0.6" />
</g>
<circle cx="56" cy="522.4" r="4.6" fill="#8e8783" stroke="#5d5754" stroke-width="1.2" />
<path d="M54.4 519.8L59.0 522.4L54.4 525.0z" fill="#c4c0bc" />
<rect x="66.4" y="517.4" width="519.6" height="10.8" fill="#958b85" stroke="#5d5754" stroke-width="0.8" />
<rect x="592.4" y="517.4" width="113.4" height="10.8" fill="#958b85" stroke="#5d5754" stroke-width="0.8" />
<rect x="693.6" y="519.4" width="8.8" height="7.2" fill="#b8b3af" />
<line x1="697" y1="519.4" x2="697" y2="526.6" stroke="#77706c" stroke-width="0.5" />
<line x1="699.4" y1="519.4" x2="699.4" y2="526.6" stroke="#77706c" stroke-width="0.5" />
<rect x="712.3" y="512.4" width="122.5" height="17.2" fill="#6b6562" />
<text x="714" y="525" font-size="6.2" fill="#2f2c29" font-weight="700" transform="translate(714 0) scale(0.9 1) translate(-714 0)" >21-Electric</text>
<rect x="746.3" y="517.8" width="64.7" height="10.6" fill="#2b2826" />
<rect x="747.2" y="518.6" width="26.2" height="3.8" fill="#a9a39f" />
<rect x="747.2" y="522.8" width="12.8" height="4.8" fill="#3a3633" />
<rect x="760.6" y="522.8" width="12.8" height="4.8" fill="#4a4643" />
<rect x="764" y="519.4" width="7" height="2.6" fill="#3a3429" />
<line x1="765" y1="520.6" x2="770" y2="520.6" stroke="#c59a3c" stroke-width="0.6" />
<rect x="775" y="518.6" width="35.2" height="9" fill="#a39d99" />
<rect x="778.4" y="520.2" width="25.6" height="4.2" fill="#2f2c29" />
<line x1="779" y1="522.2" x2="803" y2="522.2" stroke="#8a6a2a" stroke-width="0.5" />
<rect x="776" y="525.4" width="32" height="1.4" fill="#8a8480" />
<rect x="812.5" y="518.6" width="20.2" height="9.2" fill="#9b9591" />
<line x1="816.4" y1="518.6" x2="816.4" y2="527.8" stroke="#87817d" stroke-width="0.6" />
<line x1="820.5" y1="518.6" x2="820.5" y2="527.8" stroke="#87817d" stroke-width="0.6" />
<line x1="824.6" y1="518.6" x2="824.6" y2="527.8" stroke="#87817d" stroke-width="0.6" />
<line x1="828.7" y1="518.6" x2="828.7" y2="527.8" stroke="#87817d" stroke-width="0.6" />
<line x1="812.5" y1="523.2" x2="832.7" y2="523.2" stroke="#87817d" stroke-width="0.6" />
<circle cx="844.6" cy="522.4" r="5.2" fill="#5f5956" />
<path d="M841.6 525.0l3-5.6l3 5.6z" fill="#aaa49f" /></svg></body></html>
